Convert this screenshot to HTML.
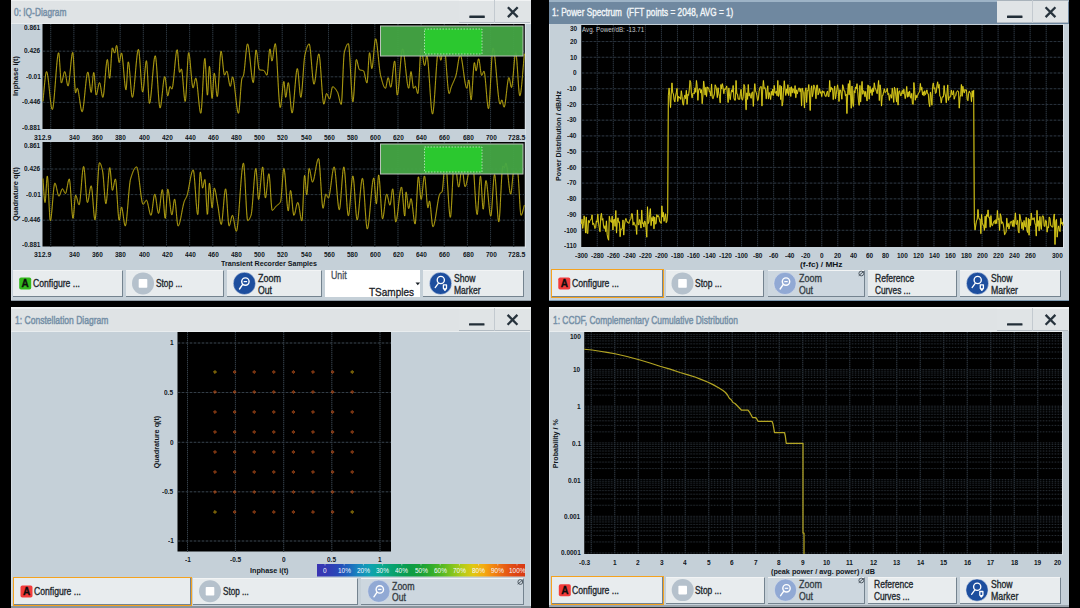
<!DOCTYPE html>
<html><head><meta charset="utf-8"><title>Baseband graphics</title>
<style>
html,body{margin:0;padding:0;background:#000;}
body{width:1080px;height:608px;position:relative;overflow:hidden;font-family:"Liberation Sans",sans-serif;}
.t{position:absolute;white-space:nowrap;transform-origin:0 50%;display:block;}
svg{position:absolute;left:0;top:0;overflow:visible;}
svg text{font-family:"Liberation Sans",sans-serif;}
</style></head><body>
<div style="position:absolute;left:11px;top:0px;width:520.3px;height:300.6px;background:#c5d0d8;border-left:1.6px solid #d6dee4;box-sizing:border-box;"></div>
<div style="position:absolute;left:11px;top:0px;width:520.3px;height:24px;background:#dfe3e5;border-top:1px solid #edf0f1;border-bottom:1.3px solid #e9edef;box-sizing:border-box;"></div>
<span class="t" style="left:13.50px;top:4.40px;line-height:16px;font-size:11.4px;color:#7690a7;transform:scaleX(0.7334);-webkit-text-stroke:0.5px #7690a7;">0: IQ-Diagram</span>
<div style="position:absolute;left:459.29999999999995px;top:0px;width:71.0px;height:23px;background:#e0e4e6;border-bottom:1px solid #b4bcc3;border-top:1px solid #f1f3f4;box-sizing:border-box;"></div>
<div style="position:absolute;left:494.29999999999995px;top:0px;width:1.0px;height:23px;background:#c3cad0;"></div>
<svg width="1080" height="608" viewBox="0 0 1080 608"><rect x="469.29999999999995" y="15.6" width="15.5" height="2.3" rx="0.5" fill="#222e38"/><path d="M507.9 7.2 L517.6999999999999 17.1 M517.6999999999999 7.2 L507.9 17.1" stroke="#27333d" stroke-width="2.3" fill="none"/></svg>
<div style="position:absolute;left:524.75px;top:24px;width:6.5499999999999545px;height:223.5px;background:#c5d0d8;border-left:1.4px solid #d9e1e7;box-sizing:border-box;"></div>
<svg width="1080" height="608" viewBox="0 0 1080 608"><rect x="42.5" y="24" width="482.25" height="105" fill="#000"/><path d="M50.72 24 V129 M73.87 24 V129 M97.02 24 V129 M120.17 24 V129 M143.32 24 V129 M166.47 24 V129 M189.62 24 V129 M212.77 24 V129 M235.92 24 V129 M259.07 24 V129 M282.22 24 V129 M305.37 24 V129 M328.52 24 V129 M351.67 24 V129 M374.82 24 V129 M397.97 24 V129 M421.12 24 V129 M444.27 24 V129 M467.42 24 V129 M490.57 24 V129 M513.72 24 V129 M43 51.20 H524.75 M43 76.80 H524.75 M43 102.40 H524.75 " stroke="#0f1317" stroke-width="1" fill="none"/><path d="M50.72 24 V129 M73.87 24 V129 M97.02 24 V129 M120.17 24 V129 M143.32 24 V129 M166.47 24 V129 M189.62 24 V129 M212.77 24 V129 M235.92 24 V129 M259.07 24 V129 M282.22 24 V129 M305.37 24 V129 M328.52 24 V129 M351.67 24 V129 M374.82 24 V129 M397.97 24 V129 M421.12 24 V129 M444.27 24 V129 M467.42 24 V129 M490.57 24 V129 M513.72 24 V129 " stroke="#2b353d" stroke-width="1" stroke-dasharray="1 1" fill="none"/><path d="M43 51.20 H524.75 M43 76.80 H524.75 M43 102.40 H524.75 " stroke="#2b353d" stroke-width="1" stroke-dasharray="2 2" fill="none"/><path d="M42.90 101.43 L43.20 98.64 L43.50 95.59 L43.80 92.39 L44.10 89.11 L44.40 85.87 L44.70 82.74 L45.00 79.82 L45.30 77.20 L45.60 74.98 L45.90 73.25 L46.20 72.10 L46.50 71.63 L46.80 71.85 L47.10 72.63 L47.40 73.90 L47.70 75.62 L48.00 77.69 L48.30 80.08 L48.60 82.70 L48.90 85.50 L49.20 88.41 L49.50 91.37 L49.80 94.31 L50.10 97.16 L50.40 99.87 L50.70 102.37 L51.00 104.59 L51.30 106.47 L51.60 107.95 L51.90 108.96 L52.20 109.43 L52.50 109.28 L52.80 108.43 L53.10 106.94 L53.40 104.89 L53.70 102.34 L54.00 99.37 L54.30 96.05 L54.60 92.45 L54.90 88.64 L55.20 84.70 L55.50 80.69 L55.80 76.69 L56.10 72.76 L56.40 68.99 L56.70 65.44 L57.00 62.18 L57.30 59.29 L57.60 56.83 L57.90 54.88 L58.20 53.51 L58.50 52.80 L58.80 52.97 L59.10 54.92 L59.40 58.34 L59.70 62.74 L60.00 67.65 L60.30 72.58 L60.60 77.04 L60.90 80.55 L61.20 82.62 L61.50 82.93 L61.80 82.46 L62.10 81.59 L62.40 80.40 L62.70 79.00 L63.00 77.49 L63.30 75.97 L63.60 74.53 L63.90 73.29 L64.20 72.32 L64.50 71.74 L64.80 71.66 L65.10 72.19 L65.40 73.25 L65.70 74.72 L66.00 76.47 L66.30 78.37 L66.60 80.30 L66.90 82.14 L67.20 83.75 L67.50 85.01 L67.80 85.80 L68.10 85.98 L68.40 85.42 L68.70 84.16 L69.00 82.31 L69.30 79.97 L69.60 77.26 L69.90 74.27 L70.20 71.12 L70.50 67.90 L70.80 64.73 L71.10 61.70 L71.40 58.93 L71.70 56.51 L72.00 54.56 L72.30 53.18 L72.60 52.47 L72.90 52.83 L73.20 55.34 L73.50 59.62 L73.80 65.12 L74.10 71.28 L74.40 77.56 L74.70 83.40 L75.00 88.26 L75.30 91.58 L75.60 92.81 L75.90 92.42 L76.20 91.47 L76.50 90.27 L76.80 89.14 L77.10 88.40 L77.40 88.32 L77.70 88.80 L78.00 89.73 L78.30 91.02 L78.60 92.63 L78.90 94.48 L79.20 96.51 L79.50 98.64 L79.80 100.82 L80.10 102.97 L80.40 105.03 L80.70 106.93 L81.00 108.60 L81.30 109.99 L81.60 111.01 L81.90 111.60 L82.20 111.70 L82.50 111.21 L82.80 110.15 L83.10 108.61 L83.40 106.63 L83.70 104.31 L84.00 101.69 L84.30 98.85 L84.60 95.86 L84.90 92.78 L85.20 89.68 L85.50 86.63 L85.80 83.70 L86.10 80.95 L86.40 78.45 L86.70 76.27 L87.00 74.47 L87.30 73.13 L87.60 72.31 L87.90 72.09 L88.20 72.67 L88.50 74.03 L88.80 76.01 L89.10 78.42 L89.40 81.07 L89.70 83.81 L90.00 86.44 L90.30 88.78 L90.60 90.67 L90.90 91.92 L91.20 92.36 L91.50 91.56 L91.80 89.52 L92.10 86.63 L92.40 83.26 L92.70 79.79 L93.00 76.61 L93.30 74.09 L93.60 72.61 L93.90 72.59 L94.20 74.33 L94.50 77.40 L94.80 81.30 L95.10 85.49 L95.40 89.47 L95.70 92.72 L96.00 94.71 L96.30 95.04 L96.60 94.55 L96.90 93.61 L97.20 92.33 L97.50 90.80 L97.80 89.16 L98.10 87.49 L98.40 85.91 L98.70 84.54 L99.00 83.47 L99.30 82.82 L99.60 82.70 L99.90 83.22 L100.20 84.28 L100.50 85.77 L100.80 87.54 L101.10 89.49 L101.40 91.46 L101.70 93.34 L102.00 95.00 L102.30 96.30 L102.60 97.13 L102.90 97.34 L103.20 96.69 L103.50 95.22 L103.80 93.03 L104.10 90.27 L104.40 87.07 L104.70 83.56 L105.00 79.87 L105.30 76.12 L105.60 72.46 L105.90 69.01 L106.20 65.90 L106.50 63.27 L106.80 61.24 L107.10 59.94 L107.40 59.52 L107.70 60.50 L108.00 62.92 L108.30 66.25 L108.60 69.97 L108.90 73.54 L109.20 76.45 L109.50 78.18 L109.80 78.18 L110.10 76.26 L110.40 72.83 L110.70 68.40 L111.00 63.44 L111.30 58.46 L111.60 53.94 L111.90 50.37 L112.20 48.24 L112.50 47.90 L112.80 48.32 L113.10 49.08 L113.40 50.04 L113.70 51.06 L114.00 51.98 L114.30 52.68 L114.60 53.00 L114.90 52.67 L115.20 51.56 L115.50 49.99 L115.80 48.27 L116.10 46.73 L116.40 45.70 L116.70 45.49 L117.00 46.46 L117.30 48.41 L117.60 51.01 L117.90 53.95 L118.20 56.89 L118.50 59.50 L118.80 61.48 L119.10 62.48 L119.40 62.31 L119.70 61.32 L120.00 59.77 L120.30 57.94 L120.60 56.08 L120.90 54.47 L121.20 53.36 L121.50 53.01 L121.80 53.59 L122.10 54.99 L122.40 57.07 L122.70 59.73 L123.00 62.82 L123.30 66.22 L123.60 69.80 L123.90 73.44 L124.20 77.01 L124.50 80.38 L124.80 83.42 L125.10 86.01 L125.40 88.02 L125.70 89.32 L126.00 89.79 L126.30 88.46 L126.60 84.98 L126.90 80.11 L127.20 74.62 L127.50 69.30 L127.80 64.91 L128.10 62.24 L128.40 61.89 L128.70 62.87 L129.00 64.77 L129.30 67.40 L129.60 70.61 L129.90 74.22 L130.20 78.06 L130.50 81.97 L130.80 85.78 L131.10 89.31 L131.40 92.40 L131.70 94.88 L132.00 96.58 L132.30 97.33 L132.60 97.13 L132.90 96.27 L133.20 94.83 L133.50 92.88 L133.80 90.49 L134.10 87.73 L134.40 84.67 L134.70 81.38 L135.00 77.92 L135.30 74.38 L135.60 70.82 L135.90 67.31 L136.20 63.92 L136.50 60.72 L136.80 57.77 L137.10 55.16 L137.40 52.95 L137.70 51.21 L138.00 50.01 L138.30 49.42 L138.60 49.62 L138.90 50.94 L139.20 53.24 L139.50 56.36 L139.80 60.10 L140.10 64.28 L140.40 68.72 L140.70 73.25 L141.00 77.67 L141.30 81.81 L141.60 85.48 L141.90 88.51 L142.20 90.71 L142.50 91.90 L142.80 91.91 L143.10 90.84 L143.40 88.86 L143.70 86.16 L144.00 82.95 L144.30 79.39 L144.60 75.68 L144.90 72.01 L145.20 68.56 L145.50 65.52 L145.80 63.07 L146.10 61.42 L146.40 60.73 L146.70 61.65 L147.00 64.63 L147.30 69.19 L147.60 74.83 L147.90 81.05 L148.20 87.34 L148.50 93.22 L148.80 98.18 L149.10 101.72 L149.40 103.35 L149.70 103.17 L150.00 102.23 L150.30 100.66 L150.60 98.54 L150.90 95.95 L151.20 92.98 L151.50 89.69 L151.80 86.17 L152.10 82.52 L152.40 78.79 L152.70 75.09 L153.00 71.48 L153.30 68.05 L153.60 64.88 L153.90 62.05 L154.20 59.65 L154.50 57.75 L154.80 56.43 L155.10 55.79 L155.40 55.96 L155.70 57.21 L156.00 59.42 L156.30 62.44 L156.60 66.12 L156.90 70.32 L157.20 74.88 L157.50 79.66 L157.80 84.50 L158.10 89.27 L158.40 93.80 L158.70 97.95 L159.00 101.58 L159.30 104.52 L159.60 106.64 L159.90 107.79 L160.20 107.86 L160.50 107.16 L160.80 105.84 L161.10 104.00 L161.40 101.73 L161.70 99.14 L162.00 96.31 L162.30 93.35 L162.60 90.35 L162.90 87.42 L163.20 84.65 L163.50 82.14 L163.80 79.98 L164.10 78.28 L164.40 77.13 L164.70 76.63 L165.00 76.97 L165.30 78.25 L165.60 80.26 L165.90 82.77 L166.20 85.56 L166.50 88.40 L166.80 91.07 L167.10 93.34 L167.40 94.99 L167.70 95.80 L168.00 95.60 L168.30 94.60 L168.60 93.07 L168.90 91.27 L169.20 89.44 L169.50 87.86 L169.80 86.78 L170.10 86.46 L170.40 86.70 L170.70 87.20 L171.00 87.82 L171.30 88.43 L171.60 88.87 L171.90 89.02 L172.20 88.59 L172.50 87.49 L172.80 85.82 L173.10 83.65 L173.40 81.08 L173.70 78.19 L174.00 75.06 L174.30 71.79 L174.60 68.45 L174.90 65.14 L175.20 61.93 L175.50 58.92 L175.80 56.19 L176.10 53.83 L176.40 51.92 L176.70 50.54 L177.00 49.79 L177.30 49.87 L177.60 51.59 L177.90 54.65 L178.20 58.53 L178.50 62.73 L178.80 66.71 L179.10 69.97 L179.40 71.98 L179.70 72.34 L180.00 71.95 L180.30 71.25 L180.60 70.43 L180.90 69.68 L181.20 69.17 L181.50 69.11 L181.80 70.03 L182.10 71.92 L182.40 74.58 L182.70 77.83 L183.00 81.45 L183.30 85.27 L183.60 89.09 L183.90 92.72 L184.20 95.95 L184.50 98.60 L184.80 100.48 L185.10 101.39 L185.40 100.93 L185.70 98.60 L186.00 94.75 L186.30 89.73 L186.60 83.92 L186.90 77.71 L187.20 71.45 L187.50 65.53 L187.80 60.33 L188.10 56.20 L188.40 53.54 L188.70 52.71 L189.00 53.27 L189.30 54.66 L189.60 56.76 L189.90 59.42 L190.20 62.52 L190.50 65.92 L190.80 69.48 L191.10 73.06 L191.40 76.55 L191.70 79.79 L192.00 82.66 L192.30 85.02 L192.60 86.74 L192.90 87.68 L193.20 87.74 L193.50 87.14 L193.80 86.06 L194.10 84.66 L194.40 83.09 L194.70 81.51 L195.00 80.08 L195.30 78.94 L195.60 78.26 L195.90 78.19 L196.20 78.82 L196.50 80.09 L196.80 81.90 L197.10 84.16 L197.40 86.78 L197.70 89.66 L198.00 92.73 L198.30 95.88 L198.60 99.03 L198.90 102.07 L199.20 104.93 L199.50 107.52 L199.80 109.73 L200.10 111.47 L200.40 112.67 L200.70 113.22 L201.00 112.78 L201.30 110.80 L201.60 107.50 L201.90 103.14 L202.20 97.98 L202.50 92.28 L202.80 86.30 L203.10 80.30 L203.40 74.54 L203.70 69.29 L204.00 64.79 L204.30 61.31 L204.60 59.12 L204.90 58.47 L205.20 60.16 L205.50 64.08 L205.80 69.53 L206.10 75.80 L206.40 82.19 L206.70 88.00 L207.00 92.53 L207.30 95.07 L207.60 94.83 L207.90 91.34 L208.20 85.70 L208.50 79.14 L208.80 72.90 L209.10 68.22 L209.40 66.33 L209.70 67.36 L210.00 70.23 L210.30 74.42 L210.60 79.41 L210.90 84.68 L211.20 89.74 L211.50 94.05 L211.80 97.11 L212.10 98.40 L212.40 97.29 L212.70 93.92 L213.00 89.14 L213.30 83.82 L213.60 78.81 L213.90 74.97 L214.20 73.18 L214.50 73.59 L214.80 75.18 L215.10 77.65 L215.40 80.72 L215.70 84.13 L216.00 87.60 L216.30 90.84 L216.60 93.60 L216.90 95.60 L217.20 96.55 L217.50 96.14 L217.80 94.23 L218.10 91.08 L218.40 86.97 L218.70 82.16 L219.00 76.92 L219.30 71.53 L219.60 66.26 L219.90 61.39 L220.20 57.17 L220.50 53.89 L220.80 51.81 L221.10 51.20 L221.40 51.83 L221.70 53.31 L222.00 55.47 L222.30 58.12 L222.60 61.08 L222.90 64.16 L223.20 67.18 L223.50 69.96 L223.80 72.31 L224.10 74.05 L224.40 74.99 L224.70 75.05 L225.00 74.69 L225.30 74.08 L225.60 73.34 L225.90 72.56 L226.20 71.87 L226.50 71.37 L226.80 71.17 L227.10 71.46 L227.40 72.32 L227.70 73.62 L228.00 75.25 L228.30 77.10 L228.60 79.04 L228.90 80.97 L229.20 82.76 L229.50 84.30 L229.80 85.48 L230.10 86.17 L230.40 86.24 L230.70 85.51 L231.00 84.14 L231.30 82.41 L231.60 80.56 L231.90 78.86 L232.20 77.57 L232.50 76.94 L232.80 77.09 L233.10 77.77 L233.40 78.90 L233.70 80.44 L234.00 82.33 L234.30 84.50 L234.60 86.91 L234.90 89.49 L235.20 92.19 L235.50 94.94 L235.80 97.70 L236.10 100.41 L236.40 103.01 L236.70 105.43 L237.00 107.63 L237.30 109.55 L237.60 111.13 L237.90 112.31 L238.20 113.03 L238.50 113.24 L238.80 112.44 L239.10 110.49 L239.40 107.64 L239.70 104.09 L240.00 100.09 L240.30 95.85 L240.60 91.60 L240.90 87.56 L241.20 83.97 L241.50 81.05 L241.80 79.03 L242.10 78.01 L242.40 77.38 L242.70 76.90 L243.00 76.43 L243.30 75.83 L243.60 74.92 L243.90 73.38 L244.20 71.25 L244.50 68.65 L244.80 65.72 L245.10 62.57 L245.40 59.31 L245.70 56.08 L246.00 52.99 L246.30 50.17 L246.60 47.73 L246.90 45.80 L247.20 44.49 L247.50 43.94 L247.80 44.14 L248.10 44.93 L248.40 46.22 L248.70 47.97 L249.00 50.09 L249.30 52.52 L249.60 55.20 L249.90 58.07 L250.20 61.04 L250.50 64.07 L250.80 67.08 L251.10 70.01 L251.40 72.79 L251.70 75.35 L252.00 77.63 L252.30 79.57 L252.60 81.09 L252.90 82.14 L253.20 82.64 L253.50 82.16 L253.80 79.76 L254.10 75.86 L254.40 70.97 L254.70 65.63 L255.00 60.36 L255.30 55.67 L255.60 52.10 L255.90 50.17 L256.20 50.14 L256.50 51.05 L256.80 52.63 L257.10 54.72 L257.40 57.15 L257.70 59.75 L258.00 62.35 L258.30 64.79 L258.60 66.91 L258.90 68.52 L259.20 69.48 L259.50 69.71 L259.80 69.81 L260.10 69.89 L260.40 69.96 L260.70 70.01 L261.00 70.06 L261.30 70.09 L261.60 70.13 L261.90 70.16 L262.20 70.19 L262.50 70.23 L262.80 70.28 L263.10 70.33 L263.40 70.41 L263.70 70.50 L264.00 70.62 L264.30 70.90 L264.60 71.34 L264.90 71.90 L265.20 72.53 L265.50 73.17 L265.80 73.79 L266.10 74.34 L266.40 74.77 L266.70 75.04 L267.00 75.05 L267.30 73.98 L267.60 71.74 L267.90 68.66 L268.20 65.03 L268.50 61.16 L268.80 57.36 L269.10 53.94 L269.40 51.18 L269.70 49.42 L270.00 48.94 L270.30 49.94 L270.60 52.02 L270.90 54.68 L271.20 57.39 L271.50 59.63 L271.80 60.91 L272.10 60.87 L272.40 60.03 L272.70 58.59 L273.00 56.69 L273.30 54.51 L273.60 52.17 L273.90 49.85 L274.20 47.69 L274.50 45.85 L274.80 44.47 L275.10 43.72 L275.40 43.80 L275.70 45.11 L276.00 47.55 L276.30 50.96 L276.60 55.16 L276.90 60.00 L277.20 65.31 L277.50 70.91 L277.80 76.65 L278.10 82.36 L278.40 87.87 L278.70 93.02 L279.00 97.63 L279.30 101.55 L279.60 104.61 L279.90 106.64 L280.20 107.48 L280.50 107.11 L280.80 105.83 L281.10 103.81 L281.40 101.23 L281.70 98.26 L282.00 95.09 L282.30 91.88 L282.60 88.81 L282.90 86.06 L283.20 83.81 L283.50 82.23 L283.80 81.49 L284.10 82.14 L284.40 84.70 L284.70 88.35 L285.00 92.23 L285.30 95.48 L285.60 97.24 L285.90 97.07 L286.20 95.86 L286.50 93.92 L286.80 91.54 L287.10 88.99 L287.40 86.55 L287.70 84.50 L288.00 83.12 L288.30 82.68 L288.60 83.32 L288.90 84.91 L289.20 87.26 L289.50 90.18 L289.80 93.51 L290.10 97.06 L290.40 100.64 L290.70 104.09 L291.00 107.20 L291.30 109.81 L291.60 111.74 L291.90 112.80 L292.20 112.84 L292.50 112.05 L292.80 110.55 L293.10 108.44 L293.40 105.81 L293.70 102.76 L294.00 99.39 L294.30 95.79 L294.60 92.06 L294.90 88.30 L295.20 84.60 L295.50 81.06 L295.80 77.78 L296.10 74.85 L296.40 72.37 L296.70 70.44 L297.00 69.16 L297.30 68.61 L297.60 69.01 L297.90 70.51 L298.20 72.89 L298.50 75.92 L298.80 79.39 L299.10 83.07 L299.40 86.75 L299.70 90.20 L300.00 93.20 L300.30 95.54 L300.60 96.98 L300.90 97.32 L301.20 96.51 L301.50 94.71 L301.80 92.08 L302.10 88.79 L302.40 84.98 L302.70 80.83 L303.00 76.49 L303.30 72.13 L303.60 67.90 L303.90 63.97 L304.20 60.49 L304.50 57.63 L304.80 55.55 L305.10 54.22 L305.40 53.00 L305.70 51.81 L306.00 50.68 L306.30 49.59 L306.60 48.58 L306.90 47.64 L307.20 46.78 L307.50 46.02 L307.80 45.36 L308.10 44.82 L308.40 44.39 L308.70 44.10 L309.00 43.95 L309.30 44.03 L309.60 44.87 L309.90 46.47 L310.20 48.72 L310.50 51.49 L310.80 54.68 L311.10 58.16 L311.40 61.83 L311.70 65.56 L312.00 69.25 L312.30 72.78 L312.60 76.03 L312.90 78.89 L313.20 81.25 L313.50 82.98 L313.80 83.98 L314.10 84.15 L314.40 83.60 L314.70 82.47 L315.00 80.85 L315.30 78.82 L315.60 76.46 L315.90 73.87 L316.20 71.13 L316.50 68.32 L316.80 65.54 L317.10 62.86 L317.40 60.38 L317.70 58.18 L318.00 56.35 L318.30 54.97 L318.60 54.14 L318.90 53.93 L319.20 54.64 L319.50 56.29 L319.80 58.73 L320.10 61.85 L320.40 65.51 L320.70 69.57 L321.00 73.92 L321.30 78.42 L321.60 82.93 L321.90 87.33 L322.20 91.49 L322.50 95.27 L322.80 98.55 L323.10 101.19 L323.40 103.07 L323.70 104.05 L324.00 104.06 L324.30 103.36 L324.60 102.14 L324.90 100.59 L325.20 98.87 L325.50 97.15 L325.80 95.60 L326.10 94.38 L326.40 93.68 L326.70 93.60 L327.00 93.87 L327.30 94.36 L327.60 95.01 L327.90 95.76 L328.20 96.54 L328.50 97.30 L328.80 97.97 L329.10 98.49 L329.40 98.81 L329.70 98.82 L330.00 98.26 L330.30 97.18 L330.60 95.72 L330.90 94.03 L331.20 92.24 L331.50 90.49 L331.80 88.93 L332.10 87.70 L332.40 86.94 L332.70 86.76 L333.00 86.81 L333.30 86.91 L333.60 87.06 L333.90 87.26 L334.20 87.50 L334.50 87.79 L334.80 88.11 L335.10 88.47 L335.40 88.86 L335.70 89.27 L336.00 89.71 L336.30 90.16 L336.60 90.64 L336.90 91.12 L337.20 91.62 L337.50 92.12 L337.80 92.81 L338.10 93.74 L338.40 94.86 L338.70 96.12 L339.00 97.45 L339.30 98.82 L339.60 100.15 L339.90 101.40 L340.20 102.50 L340.50 103.41 L340.80 104.07 L341.10 104.42 L341.40 104.10 L341.70 101.54 L342.00 96.98 L342.30 90.95 L342.60 83.99 L342.90 76.63 L343.20 69.40 L343.50 62.83 L343.80 57.45 L344.10 53.81 L344.40 52.18 L344.70 51.02 L345.00 49.93 L345.30 48.91 L345.60 47.97 L345.90 47.12 L346.20 46.35 L346.50 45.66 L346.80 45.07 L347.10 44.58 L347.40 44.18 L347.70 43.89 L348.00 43.70 L348.30 43.62 L348.60 44.10 L348.90 45.91 L349.20 48.89 L349.50 52.82 L349.80 57.52 L350.10 62.77 L350.40 68.38 L350.70 74.14 L351.00 79.85 L351.30 85.31 L351.60 90.32 L351.90 94.68 L352.20 98.18 L352.50 100.62 L352.80 101.81 L353.10 101.48 L353.40 99.51 L353.70 96.19 L354.00 91.85 L354.30 86.82 L354.60 81.42 L354.90 75.98 L355.20 70.82 L355.50 66.27 L355.80 62.65 L356.10 60.29 L356.40 59.52 L356.70 59.81 L357.00 60.56 L357.30 61.64 L357.60 62.96 L357.90 64.40 L358.20 65.86 L358.50 67.22 L358.80 68.37 L359.10 69.22 L359.40 69.65 L359.70 69.81 L360.00 69.93 L360.30 70.03 L360.60 70.11 L360.90 70.17 L361.20 70.22 L361.50 70.27 L361.80 70.32 L362.10 70.38 L362.40 70.45 L362.70 70.53 L363.00 70.63 L363.30 70.76 L363.60 70.95 L363.90 71.50 L364.20 72.41 L364.50 73.60 L364.80 74.99 L365.10 76.48 L365.40 78.00 L365.70 79.46 L366.00 80.77 L366.30 81.84 L366.60 82.60 L366.90 82.96 L367.20 82.32 L367.50 79.70 L367.80 75.63 L368.10 70.67 L368.40 65.40 L368.70 60.40 L369.00 56.23 L369.30 53.49 L369.60 52.73 L369.90 53.73 L370.20 55.88 L370.50 58.75 L370.80 61.87 L371.10 64.83 L371.40 67.18 L371.70 68.47 L372.00 68.40 L372.30 67.27 L372.60 65.30 L372.90 62.68 L373.20 59.57 L373.50 56.16 L373.80 52.62 L374.10 49.14 L374.40 45.89 L374.70 43.05 L375.00 40.80 L375.30 39.32 L375.60 38.78 L375.90 39.09 L376.20 39.98 L376.50 41.39 L376.80 43.24 L377.10 45.46 L377.40 47.99 L377.70 50.75 L378.00 53.67 L378.30 56.69 L378.60 59.73 L378.90 62.72 L379.20 65.60 L379.50 68.29 L379.80 70.72 L380.10 72.82 L380.40 74.53 L380.70 75.81 L381.00 76.98 L381.30 78.14 L381.60 79.29 L381.90 80.41 L382.20 81.49 L382.50 82.53 L382.80 83.52 L383.10 84.44 L383.40 85.28 L383.70 86.04 L384.00 86.71 L384.30 87.27 L384.60 87.71 L384.90 88.04 L385.20 88.22 L385.50 88.26 L385.80 87.77 L386.10 86.71 L386.40 85.25 L386.70 83.57 L387.00 81.83 L387.30 80.20 L387.60 78.85 L387.90 77.96 L388.20 77.68 L388.50 78.12 L388.80 79.13 L389.10 80.54 L389.40 82.16 L389.70 83.81 L390.00 85.31 L390.30 86.48 L390.60 87.13 L390.90 87.08 L391.20 86.21 L391.50 84.64 L391.80 82.52 L392.10 79.97 L392.40 77.14 L392.70 74.17 L393.00 71.20 L393.30 68.36 L393.60 65.80 L393.90 63.66 L394.20 62.07 L394.50 61.17 L394.80 61.27 L395.10 63.53 L395.40 67.65 L395.70 72.98 L396.00 78.87 L396.30 84.66 L396.60 89.73 L396.90 93.40 L397.20 95.05 L397.50 94.77 L397.80 93.67 L398.10 91.87 L398.40 89.46 L398.70 86.55 L399.00 83.25 L399.30 79.64 L399.60 75.83 L399.90 71.93 L400.20 68.02 L400.50 64.22 L400.80 60.62 L401.10 57.33 L401.40 54.44 L401.70 52.05 L402.00 50.28 L402.30 49.20 L402.60 48.93 L402.90 49.30 L403.20 50.16 L403.50 51.46 L403.80 53.14 L404.10 55.15 L404.40 57.44 L404.70 59.95 L405.00 62.63 L405.30 65.42 L405.60 68.27 L405.90 71.13 L406.20 73.94 L406.50 76.65 L406.80 79.20 L407.10 81.55 L407.40 83.63 L407.70 85.39 L408.00 86.78 L408.30 87.74 L408.60 88.22 L408.90 87.99 L409.20 86.39 L409.50 83.77 L409.80 80.60 L410.10 77.34 L410.40 74.45 L410.70 72.39 L411.00 71.62 L411.30 72.27 L411.60 73.95 L411.90 76.36 L412.20 79.16 L412.50 82.05 L412.80 84.71 L413.10 86.82 L413.40 88.07 L413.70 88.24 L414.00 87.99 L414.30 87.57 L414.60 87.09 L414.90 86.65 L415.20 86.36 L415.50 86.35 L415.80 86.87 L416.10 87.83 L416.40 89.07 L416.70 90.41 L417.00 91.69 L417.30 92.75 L417.60 93.42 L417.90 93.46 L418.20 91.84 L418.50 88.55 L418.80 84.00 L419.10 78.57 L419.40 72.66 L419.70 66.66 L420.00 60.95 L420.30 55.94 L420.60 52.01 L420.90 49.56 L421.20 48.94 L421.50 49.43 L421.80 50.51 L422.10 52.05 L422.40 53.91 L422.70 55.99 L423.00 58.13 L423.30 60.23 L423.60 62.14 L423.90 63.74 L424.20 64.91 L424.50 65.51 L424.80 65.39 L425.10 64.42 L425.40 62.86 L425.70 60.99 L426.00 59.06 L426.30 57.36 L426.60 56.16 L426.90 55.73 L427.20 56.26 L427.50 57.67 L427.80 59.87 L428.10 62.75 L428.40 66.19 L428.70 70.10 L429.00 74.36 L429.30 78.86 L429.60 83.51 L429.90 88.18 L430.20 92.78 L430.50 97.20 L430.80 101.32 L431.10 105.05 L431.40 108.27 L431.70 110.87 L432.00 112.76 L432.30 113.81 L432.60 113.94 L432.90 113.14 L433.20 111.54 L433.50 109.20 L433.80 106.24 L434.10 102.74 L434.40 98.79 L434.70 94.50 L435.00 89.95 L435.30 85.25 L435.60 80.47 L435.90 75.72 L436.20 71.10 L436.50 66.68 L436.80 62.58 L437.10 58.88 L437.40 55.67 L437.70 53.06 L438.00 51.13 L438.30 49.97 L438.60 49.70 L438.90 50.39 L439.20 51.83 L439.50 53.75 L439.80 55.84 L440.10 57.80 L440.40 59.35 L440.70 60.20 L441.00 60.09 L441.30 59.11 L441.60 57.47 L441.90 55.36 L442.20 52.98 L442.50 50.51 L442.80 48.16 L443.10 46.11 L443.40 44.57 L443.70 43.72 L444.00 43.76 L444.30 44.69 L444.60 46.42 L444.90 48.83 L445.20 51.82 L445.50 55.28 L445.80 59.09 L446.10 63.16 L446.40 67.36 L446.70 71.60 L447.00 75.76 L447.30 79.73 L447.60 83.41 L447.90 86.68 L448.20 89.44 L448.50 91.58 L448.80 92.99 L449.10 93.56 L449.40 93.36 L449.70 92.68 L450.00 91.69 L450.30 90.51 L450.60 89.28 L450.90 88.15 L451.20 87.25 L451.50 86.45 L451.80 85.69 L452.10 84.97 L452.40 84.27 L452.70 83.60 L453.00 82.93 L453.30 82.27 L453.60 81.61 L453.90 80.93 L454.20 80.24 L454.50 79.51 L454.80 78.76 L455.10 77.96 L455.40 77.11 L455.70 76.20 L456.00 75.23 L456.30 74.02 L456.60 72.55 L456.90 70.87 L457.20 69.04 L457.50 67.12 L457.80 65.16 L458.10 63.22 L458.40 61.35 L458.70 59.62 L459.00 58.08 L459.30 56.79 L459.60 55.80 L459.90 55.18 L460.20 54.97 L460.50 55.19 L460.80 55.77 L461.10 56.69 L461.40 57.89 L461.70 59.36 L462.00 61.05 L462.30 62.92 L462.60 64.93 L462.90 67.06 L463.20 69.27 L463.50 71.51 L463.80 73.76 L464.10 75.97 L464.40 78.11 L464.70 80.14 L465.00 82.02 L465.30 83.73 L465.60 85.22 L465.90 86.45 L466.20 87.40 L466.50 88.01 L466.80 88.27 L467.10 87.89 L467.40 86.66 L467.70 84.92 L468.00 83.03 L468.30 81.35 L468.60 80.22 L468.90 80.03 L469.20 81.50 L469.50 84.34 L469.80 88.00 L470.10 91.94 L470.40 95.59 L470.70 98.42 L471.00 99.85 L471.30 99.47 L471.60 97.50 L471.90 94.27 L472.20 90.12 L472.50 85.37 L472.80 80.35 L473.10 75.38 L473.40 70.81 L473.70 66.94 L474.00 64.12 L474.30 62.67 L474.60 62.83 L474.90 64.27 L475.20 66.37 L475.50 68.56 L475.80 70.25 L476.10 70.86 L476.40 70.34 L476.70 69.08 L477.00 67.31 L477.30 65.26 L477.60 63.16 L477.90 61.25 L478.20 59.74 L478.50 58.88 L478.80 58.88 L479.10 59.75 L479.40 61.32 L479.70 63.38 L480.00 65.74 L480.30 68.20 L480.60 70.58 L480.90 72.68 L481.20 74.30 L481.50 75.24 L481.80 75.37 L482.10 75.02 L482.40 74.39 L482.70 73.60 L483.00 72.77 L483.30 72.01 L483.60 71.44 L483.90 71.17 L484.20 71.50 L484.50 72.70 L484.80 74.64 L485.10 77.19 L485.40 80.23 L485.70 83.63 L486.00 87.24 L486.30 90.95 L486.60 94.63 L486.90 98.14 L487.20 101.35 L487.50 104.14 L487.80 106.38 L488.10 107.93 L488.40 108.66 L488.70 108.32 L489.00 106.57 L489.30 103.59 L489.60 99.59 L489.90 94.79 L490.20 89.38 L490.50 83.58 L490.80 77.61 L491.10 71.66 L491.40 65.95 L491.70 60.68 L492.00 56.08 L492.30 52.34 L492.60 49.68 L492.90 48.31 L493.20 48.26 L493.50 48.87 L493.80 49.99 L494.10 51.59 L494.40 53.60 L494.70 55.98 L495.00 58.68 L495.30 61.64 L495.60 64.82 L495.90 68.17 L496.20 71.63 L496.50 75.15 L496.80 78.69 L497.10 82.19 L497.40 85.61 L497.70 88.89 L498.00 91.98 L498.30 94.84 L498.60 97.41 L498.90 99.63 L499.20 101.47 L499.50 102.88 L499.80 103.79 L500.10 104.16 L500.40 103.89 L500.70 103.06 L501.00 101.95 L501.30 100.87 L501.60 100.11 L501.90 99.96 L502.20 100.50 L502.50 101.54 L502.80 102.88 L503.10 104.31 L503.40 105.63 L503.70 106.65 L504.00 107.17 L504.30 107.01 L504.60 106.24 L504.90 104.93 L505.20 103.17 L505.50 101.05 L505.80 98.65 L506.10 96.05 L506.40 93.34 L506.70 90.61 L507.00 87.92 L507.30 85.38 L507.60 83.07 L507.90 81.06 L508.20 79.44 L508.50 78.31 L508.80 77.73 L509.10 77.81 L509.40 78.57 L509.70 79.84 L510.00 81.42 L510.30 83.12 L510.60 84.78 L510.90 86.18 L511.20 87.16 L511.50 87.51 L511.80 87.00 L512.10 85.58 L512.40 83.42 L512.70 80.66 L513.00 77.45 L513.30 73.94 L513.60 70.27 L513.90 66.60 L514.20 63.06 L514.50 59.82 L514.80 57.01 L515.10 54.80 L515.40 53.31 L515.70 52.71 L516.00 53.24 L516.30 54.97 L516.60 57.71 L516.90 61.26 L517.20 65.40 L517.50 69.94 L517.80 74.66 L518.10 79.37 L518.40 83.85 L518.70 87.91 L519.00 91.34 L519.30 93.93 L519.60 95.48 L519.90 95.81 L520.20 95.29 L520.50 94.15 L520.80 92.46 L521.10 90.28 L521.40 87.69 L521.70 84.75 L522.00 81.53 L522.30 78.09 L522.60 74.51 L522.90 70.85 L523.20 67.18 L523.50 63.57 L523.80 60.08 L524.10 56.78 L524.40 53.74" stroke="#4c4200" stroke-width="1.3" fill="none" stroke-linejoin="round" stroke-opacity="0.6"/><path d="M42.90 101.43 L43.20 98.64 L43.50 95.59 L43.80 92.39 L44.10 89.11 L44.40 85.87 L44.70 82.74 L45.00 79.82 L45.30 77.20 L45.60 74.98 L45.90 73.25 L46.20 72.10 L46.50 71.63 L46.80 71.85 L47.10 72.63 L47.40 73.90 L47.70 75.62 L48.00 77.69 L48.30 80.08 L48.60 82.70 L48.90 85.50 L49.20 88.41 L49.50 91.37 L49.80 94.31 L50.10 97.16 L50.40 99.87 L50.70 102.37 L51.00 104.59 L51.30 106.47 L51.60 107.95 L51.90 108.96 L52.20 109.43 L52.50 109.28 L52.80 108.43 L53.10 106.94 L53.40 104.89 L53.70 102.34 L54.00 99.37 L54.30 96.05 L54.60 92.45 L54.90 88.64 L55.20 84.70 L55.50 80.69 L55.80 76.69 L56.10 72.76 L56.40 68.99 L56.70 65.44 L57.00 62.18 L57.30 59.29 L57.60 56.83 L57.90 54.88 L58.20 53.51 L58.50 52.80 L58.80 52.97 L59.10 54.92 L59.40 58.34 L59.70 62.74 L60.00 67.65 L60.30 72.58 L60.60 77.04 L60.90 80.55 L61.20 82.62 L61.50 82.93 L61.80 82.46 L62.10 81.59 L62.40 80.40 L62.70 79.00 L63.00 77.49 L63.30 75.97 L63.60 74.53 L63.90 73.29 L64.20 72.32 L64.50 71.74 L64.80 71.66 L65.10 72.19 L65.40 73.25 L65.70 74.72 L66.00 76.47 L66.30 78.37 L66.60 80.30 L66.90 82.14 L67.20 83.75 L67.50 85.01 L67.80 85.80 L68.10 85.98 L68.40 85.42 L68.70 84.16 L69.00 82.31 L69.30 79.97 L69.60 77.26 L69.90 74.27 L70.20 71.12 L70.50 67.90 L70.80 64.73 L71.10 61.70 L71.40 58.93 L71.70 56.51 L72.00 54.56 L72.30 53.18 L72.60 52.47 L72.90 52.83 L73.20 55.34 L73.50 59.62 L73.80 65.12 L74.10 71.28 L74.40 77.56 L74.70 83.40 L75.00 88.26 L75.30 91.58 L75.60 92.81 L75.90 92.42 L76.20 91.47 L76.50 90.27 L76.80 89.14 L77.10 88.40 L77.40 88.32 L77.70 88.80 L78.00 89.73 L78.30 91.02 L78.60 92.63 L78.90 94.48 L79.20 96.51 L79.50 98.64 L79.80 100.82 L80.10 102.97 L80.40 105.03 L80.70 106.93 L81.00 108.60 L81.30 109.99 L81.60 111.01 L81.90 111.60 L82.20 111.70 L82.50 111.21 L82.80 110.15 L83.10 108.61 L83.40 106.63 L83.70 104.31 L84.00 101.69 L84.30 98.85 L84.60 95.86 L84.90 92.78 L85.20 89.68 L85.50 86.63 L85.80 83.70 L86.10 80.95 L86.40 78.45 L86.70 76.27 L87.00 74.47 L87.30 73.13 L87.60 72.31 L87.90 72.09 L88.20 72.67 L88.50 74.03 L88.80 76.01 L89.10 78.42 L89.40 81.07 L89.70 83.81 L90.00 86.44 L90.30 88.78 L90.60 90.67 L90.90 91.92 L91.20 92.36 L91.50 91.56 L91.80 89.52 L92.10 86.63 L92.40 83.26 L92.70 79.79 L93.00 76.61 L93.30 74.09 L93.60 72.61 L93.90 72.59 L94.20 74.33 L94.50 77.40 L94.80 81.30 L95.10 85.49 L95.40 89.47 L95.70 92.72 L96.00 94.71 L96.30 95.04 L96.60 94.55 L96.90 93.61 L97.20 92.33 L97.50 90.80 L97.80 89.16 L98.10 87.49 L98.40 85.91 L98.70 84.54 L99.00 83.47 L99.30 82.82 L99.60 82.70 L99.90 83.22 L100.20 84.28 L100.50 85.77 L100.80 87.54 L101.10 89.49 L101.40 91.46 L101.70 93.34 L102.00 95.00 L102.30 96.30 L102.60 97.13 L102.90 97.34 L103.20 96.69 L103.50 95.22 L103.80 93.03 L104.10 90.27 L104.40 87.07 L104.70 83.56 L105.00 79.87 L105.30 76.12 L105.60 72.46 L105.90 69.01 L106.20 65.90 L106.50 63.27 L106.80 61.24 L107.10 59.94 L107.40 59.52 L107.70 60.50 L108.00 62.92 L108.30 66.25 L108.60 69.97 L108.90 73.54 L109.20 76.45 L109.50 78.18 L109.80 78.18 L110.10 76.26 L110.40 72.83 L110.70 68.40 L111.00 63.44 L111.30 58.46 L111.60 53.94 L111.90 50.37 L112.20 48.24 L112.50 47.90 L112.80 48.32 L113.10 49.08 L113.40 50.04 L113.70 51.06 L114.00 51.98 L114.30 52.68 L114.60 53.00 L114.90 52.67 L115.20 51.56 L115.50 49.99 L115.80 48.27 L116.10 46.73 L116.40 45.70 L116.70 45.49 L117.00 46.46 L117.30 48.41 L117.60 51.01 L117.90 53.95 L118.20 56.89 L118.50 59.50 L118.80 61.48 L119.10 62.48 L119.40 62.31 L119.70 61.32 L120.00 59.77 L120.30 57.94 L120.60 56.08 L120.90 54.47 L121.20 53.36 L121.50 53.01 L121.80 53.59 L122.10 54.99 L122.40 57.07 L122.70 59.73 L123.00 62.82 L123.30 66.22 L123.60 69.80 L123.90 73.44 L124.20 77.01 L124.50 80.38 L124.80 83.42 L125.10 86.01 L125.40 88.02 L125.70 89.32 L126.00 89.79 L126.30 88.46 L126.60 84.98 L126.90 80.11 L127.20 74.62 L127.50 69.30 L127.80 64.91 L128.10 62.24 L128.40 61.89 L128.70 62.87 L129.00 64.77 L129.30 67.40 L129.60 70.61 L129.90 74.22 L130.20 78.06 L130.50 81.97 L130.80 85.78 L131.10 89.31 L131.40 92.40 L131.70 94.88 L132.00 96.58 L132.30 97.33 L132.60 97.13 L132.90 96.27 L133.20 94.83 L133.50 92.88 L133.80 90.49 L134.10 87.73 L134.40 84.67 L134.70 81.38 L135.00 77.92 L135.30 74.38 L135.60 70.82 L135.90 67.31 L136.20 63.92 L136.50 60.72 L136.80 57.77 L137.10 55.16 L137.40 52.95 L137.70 51.21 L138.00 50.01 L138.30 49.42 L138.60 49.62 L138.90 50.94 L139.20 53.24 L139.50 56.36 L139.80 60.10 L140.10 64.28 L140.40 68.72 L140.70 73.25 L141.00 77.67 L141.30 81.81 L141.60 85.48 L141.90 88.51 L142.20 90.71 L142.50 91.90 L142.80 91.91 L143.10 90.84 L143.40 88.86 L143.70 86.16 L144.00 82.95 L144.30 79.39 L144.60 75.68 L144.90 72.01 L145.20 68.56 L145.50 65.52 L145.80 63.07 L146.10 61.42 L146.40 60.73 L146.70 61.65 L147.00 64.63 L147.30 69.19 L147.60 74.83 L147.90 81.05 L148.20 87.34 L148.50 93.22 L148.80 98.18 L149.10 101.72 L149.40 103.35 L149.70 103.17 L150.00 102.23 L150.30 100.66 L150.60 98.54 L150.90 95.95 L151.20 92.98 L151.50 89.69 L151.80 86.17 L152.10 82.52 L152.40 78.79 L152.70 75.09 L153.00 71.48 L153.30 68.05 L153.60 64.88 L153.90 62.05 L154.20 59.65 L154.50 57.75 L154.80 56.43 L155.10 55.79 L155.40 55.96 L155.70 57.21 L156.00 59.42 L156.30 62.44 L156.60 66.12 L156.90 70.32 L157.20 74.88 L157.50 79.66 L157.80 84.50 L158.10 89.27 L158.40 93.80 L158.70 97.95 L159.00 101.58 L159.30 104.52 L159.60 106.64 L159.90 107.79 L160.20 107.86 L160.50 107.16 L160.80 105.84 L161.10 104.00 L161.40 101.73 L161.70 99.14 L162.00 96.31 L162.30 93.35 L162.60 90.35 L162.90 87.42 L163.20 84.65 L163.50 82.14 L163.80 79.98 L164.10 78.28 L164.40 77.13 L164.70 76.63 L165.00 76.97 L165.30 78.25 L165.60 80.26 L165.90 82.77 L166.20 85.56 L166.50 88.40 L166.80 91.07 L167.10 93.34 L167.40 94.99 L167.70 95.80 L168.00 95.60 L168.30 94.60 L168.60 93.07 L168.90 91.27 L169.20 89.44 L169.50 87.86 L169.80 86.78 L170.10 86.46 L170.40 86.70 L170.70 87.20 L171.00 87.82 L171.30 88.43 L171.60 88.87 L171.90 89.02 L172.20 88.59 L172.50 87.49 L172.80 85.82 L173.10 83.65 L173.40 81.08 L173.70 78.19 L174.00 75.06 L174.30 71.79 L174.60 68.45 L174.90 65.14 L175.20 61.93 L175.50 58.92 L175.80 56.19 L176.10 53.83 L176.40 51.92 L176.70 50.54 L177.00 49.79 L177.30 49.87 L177.60 51.59 L177.90 54.65 L178.20 58.53 L178.50 62.73 L178.80 66.71 L179.10 69.97 L179.40 71.98 L179.70 72.34 L180.00 71.95 L180.30 71.25 L180.60 70.43 L180.90 69.68 L181.20 69.17 L181.50 69.11 L181.80 70.03 L182.10 71.92 L182.40 74.58 L182.70 77.83 L183.00 81.45 L183.30 85.27 L183.60 89.09 L183.90 92.72 L184.20 95.95 L184.50 98.60 L184.80 100.48 L185.10 101.39 L185.40 100.93 L185.70 98.60 L186.00 94.75 L186.30 89.73 L186.60 83.92 L186.90 77.71 L187.20 71.45 L187.50 65.53 L187.80 60.33 L188.10 56.20 L188.40 53.54 L188.70 52.71 L189.00 53.27 L189.30 54.66 L189.60 56.76 L189.90 59.42 L190.20 62.52 L190.50 65.92 L190.80 69.48 L191.10 73.06 L191.40 76.55 L191.70 79.79 L192.00 82.66 L192.30 85.02 L192.60 86.74 L192.90 87.68 L193.20 87.74 L193.50 87.14 L193.80 86.06 L194.10 84.66 L194.40 83.09 L194.70 81.51 L195.00 80.08 L195.30 78.94 L195.60 78.26 L195.90 78.19 L196.20 78.82 L196.50 80.09 L196.80 81.90 L197.10 84.16 L197.40 86.78 L197.70 89.66 L198.00 92.73 L198.30 95.88 L198.60 99.03 L198.90 102.07 L199.20 104.93 L199.50 107.52 L199.80 109.73 L200.10 111.47 L200.40 112.67 L200.70 113.22 L201.00 112.78 L201.30 110.80 L201.60 107.50 L201.90 103.14 L202.20 97.98 L202.50 92.28 L202.80 86.30 L203.10 80.30 L203.40 74.54 L203.70 69.29 L204.00 64.79 L204.30 61.31 L204.60 59.12 L204.90 58.47 L205.20 60.16 L205.50 64.08 L205.80 69.53 L206.10 75.80 L206.40 82.19 L206.70 88.00 L207.00 92.53 L207.30 95.07 L207.60 94.83 L207.90 91.34 L208.20 85.70 L208.50 79.14 L208.80 72.90 L209.10 68.22 L209.40 66.33 L209.70 67.36 L210.00 70.23 L210.30 74.42 L210.60 79.41 L210.90 84.68 L211.20 89.74 L211.50 94.05 L211.80 97.11 L212.10 98.40 L212.40 97.29 L212.70 93.92 L213.00 89.14 L213.30 83.82 L213.60 78.81 L213.90 74.97 L214.20 73.18 L214.50 73.59 L214.80 75.18 L215.10 77.65 L215.40 80.72 L215.70 84.13 L216.00 87.60 L216.30 90.84 L216.60 93.60 L216.90 95.60 L217.20 96.55 L217.50 96.14 L217.80 94.23 L218.10 91.08 L218.40 86.97 L218.70 82.16 L219.00 76.92 L219.30 71.53 L219.60 66.26 L219.90 61.39 L220.20 57.17 L220.50 53.89 L220.80 51.81 L221.10 51.20 L221.40 51.83 L221.70 53.31 L222.00 55.47 L222.30 58.12 L222.60 61.08 L222.90 64.16 L223.20 67.18 L223.50 69.96 L223.80 72.31 L224.10 74.05 L224.40 74.99 L224.70 75.05 L225.00 74.69 L225.30 74.08 L225.60 73.34 L225.90 72.56 L226.20 71.87 L226.50 71.37 L226.80 71.17 L227.10 71.46 L227.40 72.32 L227.70 73.62 L228.00 75.25 L228.30 77.10 L228.60 79.04 L228.90 80.97 L229.20 82.76 L229.50 84.30 L229.80 85.48 L230.10 86.17 L230.40 86.24 L230.70 85.51 L231.00 84.14 L231.30 82.41 L231.60 80.56 L231.90 78.86 L232.20 77.57 L232.50 76.94 L232.80 77.09 L233.10 77.77 L233.40 78.90 L233.70 80.44 L234.00 82.33 L234.30 84.50 L234.60 86.91 L234.90 89.49 L235.20 92.19 L235.50 94.94 L235.80 97.70 L236.10 100.41 L236.40 103.01 L236.70 105.43 L237.00 107.63 L237.30 109.55 L237.60 111.13 L237.90 112.31 L238.20 113.03 L238.50 113.24 L238.80 112.44 L239.10 110.49 L239.40 107.64 L239.70 104.09 L240.00 100.09 L240.30 95.85 L240.60 91.60 L240.90 87.56 L241.20 83.97 L241.50 81.05 L241.80 79.03 L242.10 78.01 L242.40 77.38 L242.70 76.90 L243.00 76.43 L243.30 75.83 L243.60 74.92 L243.90 73.38 L244.20 71.25 L244.50 68.65 L244.80 65.72 L245.10 62.57 L245.40 59.31 L245.70 56.08 L246.00 52.99 L246.30 50.17 L246.60 47.73 L246.90 45.80 L247.20 44.49 L247.50 43.94 L247.80 44.14 L248.10 44.93 L248.40 46.22 L248.70 47.97 L249.00 50.09 L249.30 52.52 L249.60 55.20 L249.90 58.07 L250.20 61.04 L250.50 64.07 L250.80 67.08 L251.10 70.01 L251.40 72.79 L251.70 75.35 L252.00 77.63 L252.30 79.57 L252.60 81.09 L252.90 82.14 L253.20 82.64 L253.50 82.16 L253.80 79.76 L254.10 75.86 L254.40 70.97 L254.70 65.63 L255.00 60.36 L255.30 55.67 L255.60 52.10 L255.90 50.17 L256.20 50.14 L256.50 51.05 L256.80 52.63 L257.10 54.72 L257.40 57.15 L257.70 59.75 L258.00 62.35 L258.30 64.79 L258.60 66.91 L258.90 68.52 L259.20 69.48 L259.50 69.71 L259.80 69.81 L260.10 69.89 L260.40 69.96 L260.70 70.01 L261.00 70.06 L261.30 70.09 L261.60 70.13 L261.90 70.16 L262.20 70.19 L262.50 70.23 L262.80 70.28 L263.10 70.33 L263.40 70.41 L263.70 70.50 L264.00 70.62 L264.30 70.90 L264.60 71.34 L264.90 71.90 L265.20 72.53 L265.50 73.17 L265.80 73.79 L266.10 74.34 L266.40 74.77 L266.70 75.04 L267.00 75.05 L267.30 73.98 L267.60 71.74 L267.90 68.66 L268.20 65.03 L268.50 61.16 L268.80 57.36 L269.10 53.94 L269.40 51.18 L269.70 49.42 L270.00 48.94 L270.30 49.94 L270.60 52.02 L270.90 54.68 L271.20 57.39 L271.50 59.63 L271.80 60.91 L272.10 60.87 L272.40 60.03 L272.70 58.59 L273.00 56.69 L273.30 54.51 L273.60 52.17 L273.90 49.85 L274.20 47.69 L274.50 45.85 L274.80 44.47 L275.10 43.72 L275.40 43.80 L275.70 45.11 L276.00 47.55 L276.30 50.96 L276.60 55.16 L276.90 60.00 L277.20 65.31 L277.50 70.91 L277.80 76.65 L278.10 82.36 L278.40 87.87 L278.70 93.02 L279.00 97.63 L279.30 101.55 L279.60 104.61 L279.90 106.64 L280.20 107.48 L280.50 107.11 L280.80 105.83 L281.10 103.81 L281.40 101.23 L281.70 98.26 L282.00 95.09 L282.30 91.88 L282.60 88.81 L282.90 86.06 L283.20 83.81 L283.50 82.23 L283.80 81.49 L284.10 82.14 L284.40 84.70 L284.70 88.35 L285.00 92.23 L285.30 95.48 L285.60 97.24 L285.90 97.07 L286.20 95.86 L286.50 93.92 L286.80 91.54 L287.10 88.99 L287.40 86.55 L287.70 84.50 L288.00 83.12 L288.30 82.68 L288.60 83.32 L288.90 84.91 L289.20 87.26 L289.50 90.18 L289.80 93.51 L290.10 97.06 L290.40 100.64 L290.70 104.09 L291.00 107.20 L291.30 109.81 L291.60 111.74 L291.90 112.80 L292.20 112.84 L292.50 112.05 L292.80 110.55 L293.10 108.44 L293.40 105.81 L293.70 102.76 L294.00 99.39 L294.30 95.79 L294.60 92.06 L294.90 88.30 L295.20 84.60 L295.50 81.06 L295.80 77.78 L296.10 74.85 L296.40 72.37 L296.70 70.44 L297.00 69.16 L297.30 68.61 L297.60 69.01 L297.90 70.51 L298.20 72.89 L298.50 75.92 L298.80 79.39 L299.10 83.07 L299.40 86.75 L299.70 90.20 L300.00 93.20 L300.30 95.54 L300.60 96.98 L300.90 97.32 L301.20 96.51 L301.50 94.71 L301.80 92.08 L302.10 88.79 L302.40 84.98 L302.70 80.83 L303.00 76.49 L303.30 72.13 L303.60 67.90 L303.90 63.97 L304.20 60.49 L304.50 57.63 L304.80 55.55 L305.10 54.22 L305.40 53.00 L305.70 51.81 L306.00 50.68 L306.30 49.59 L306.60 48.58 L306.90 47.64 L307.20 46.78 L307.50 46.02 L307.80 45.36 L308.10 44.82 L308.40 44.39 L308.70 44.10 L309.00 43.95 L309.30 44.03 L309.60 44.87 L309.90 46.47 L310.20 48.72 L310.50 51.49 L310.80 54.68 L311.10 58.16 L311.40 61.83 L311.70 65.56 L312.00 69.25 L312.30 72.78 L312.60 76.03 L312.90 78.89 L313.20 81.25 L313.50 82.98 L313.80 83.98 L314.10 84.15 L314.40 83.60 L314.70 82.47 L315.00 80.85 L315.30 78.82 L315.60 76.46 L315.90 73.87 L316.20 71.13 L316.50 68.32 L316.80 65.54 L317.10 62.86 L317.40 60.38 L317.70 58.18 L318.00 56.35 L318.30 54.97 L318.60 54.14 L318.90 53.93 L319.20 54.64 L319.50 56.29 L319.80 58.73 L320.10 61.85 L320.40 65.51 L320.70 69.57 L321.00 73.92 L321.30 78.42 L321.60 82.93 L321.90 87.33 L322.20 91.49 L322.50 95.27 L322.80 98.55 L323.10 101.19 L323.40 103.07 L323.70 104.05 L324.00 104.06 L324.30 103.36 L324.60 102.14 L324.90 100.59 L325.20 98.87 L325.50 97.15 L325.80 95.60 L326.10 94.38 L326.40 93.68 L326.70 93.60 L327.00 93.87 L327.30 94.36 L327.60 95.01 L327.90 95.76 L328.20 96.54 L328.50 97.30 L328.80 97.97 L329.10 98.49 L329.40 98.81 L329.70 98.82 L330.00 98.26 L330.30 97.18 L330.60 95.72 L330.90 94.03 L331.20 92.24 L331.50 90.49 L331.80 88.93 L332.10 87.70 L332.40 86.94 L332.70 86.76 L333.00 86.81 L333.30 86.91 L333.60 87.06 L333.90 87.26 L334.20 87.50 L334.50 87.79 L334.80 88.11 L335.10 88.47 L335.40 88.86 L335.70 89.27 L336.00 89.71 L336.30 90.16 L336.60 90.64 L336.90 91.12 L337.20 91.62 L337.50 92.12 L337.80 92.81 L338.10 93.74 L338.40 94.86 L338.70 96.12 L339.00 97.45 L339.30 98.82 L339.60 100.15 L339.90 101.40 L340.20 102.50 L340.50 103.41 L340.80 104.07 L341.10 104.42 L341.40 104.10 L341.70 101.54 L342.00 96.98 L342.30 90.95 L342.60 83.99 L342.90 76.63 L343.20 69.40 L343.50 62.83 L343.80 57.45 L344.10 53.81 L344.40 52.18 L344.70 51.02 L345.00 49.93 L345.30 48.91 L345.60 47.97 L345.90 47.12 L346.20 46.35 L346.50 45.66 L346.80 45.07 L347.10 44.58 L347.40 44.18 L347.70 43.89 L348.00 43.70 L348.30 43.62 L348.60 44.10 L348.90 45.91 L349.20 48.89 L349.50 52.82 L349.80 57.52 L350.10 62.77 L350.40 68.38 L350.70 74.14 L351.00 79.85 L351.30 85.31 L351.60 90.32 L351.90 94.68 L352.20 98.18 L352.50 100.62 L352.80 101.81 L353.10 101.48 L353.40 99.51 L353.70 96.19 L354.00 91.85 L354.30 86.82 L354.60 81.42 L354.90 75.98 L355.20 70.82 L355.50 66.27 L355.80 62.65 L356.10 60.29 L356.40 59.52 L356.70 59.81 L357.00 60.56 L357.30 61.64 L357.60 62.96 L357.90 64.40 L358.20 65.86 L358.50 67.22 L358.80 68.37 L359.10 69.22 L359.40 69.65 L359.70 69.81 L360.00 69.93 L360.30 70.03 L360.60 70.11 L360.90 70.17 L361.20 70.22 L361.50 70.27 L361.80 70.32 L362.10 70.38 L362.40 70.45 L362.70 70.53 L363.00 70.63 L363.30 70.76 L363.60 70.95 L363.90 71.50 L364.20 72.41 L364.50 73.60 L364.80 74.99 L365.10 76.48 L365.40 78.00 L365.70 79.46 L366.00 80.77 L366.30 81.84 L366.60 82.60 L366.90 82.96 L367.20 82.32 L367.50 79.70 L367.80 75.63 L368.10 70.67 L368.40 65.40 L368.70 60.40 L369.00 56.23 L369.30 53.49 L369.60 52.73 L369.90 53.73 L370.20 55.88 L370.50 58.75 L370.80 61.87 L371.10 64.83 L371.40 67.18 L371.70 68.47 L372.00 68.40 L372.30 67.27 L372.60 65.30 L372.90 62.68 L373.20 59.57 L373.50 56.16 L373.80 52.62 L374.10 49.14 L374.40 45.89 L374.70 43.05 L375.00 40.80 L375.30 39.32 L375.60 38.78 L375.90 39.09 L376.20 39.98 L376.50 41.39 L376.80 43.24 L377.10 45.46 L377.40 47.99 L377.70 50.75 L378.00 53.67 L378.30 56.69 L378.60 59.73 L378.90 62.72 L379.20 65.60 L379.50 68.29 L379.80 70.72 L380.10 72.82 L380.40 74.53 L380.70 75.81 L381.00 76.98 L381.30 78.14 L381.60 79.29 L381.90 80.41 L382.20 81.49 L382.50 82.53 L382.80 83.52 L383.10 84.44 L383.40 85.28 L383.70 86.04 L384.00 86.71 L384.30 87.27 L384.60 87.71 L384.90 88.04 L385.20 88.22 L385.50 88.26 L385.80 87.77 L386.10 86.71 L386.40 85.25 L386.70 83.57 L387.00 81.83 L387.30 80.20 L387.60 78.85 L387.90 77.96 L388.20 77.68 L388.50 78.12 L388.80 79.13 L389.10 80.54 L389.40 82.16 L389.70 83.81 L390.00 85.31 L390.30 86.48 L390.60 87.13 L390.90 87.08 L391.20 86.21 L391.50 84.64 L391.80 82.52 L392.10 79.97 L392.40 77.14 L392.70 74.17 L393.00 71.20 L393.30 68.36 L393.60 65.80 L393.90 63.66 L394.20 62.07 L394.50 61.17 L394.80 61.27 L395.10 63.53 L395.40 67.65 L395.70 72.98 L396.00 78.87 L396.30 84.66 L396.60 89.73 L396.90 93.40 L397.20 95.05 L397.50 94.77 L397.80 93.67 L398.10 91.87 L398.40 89.46 L398.70 86.55 L399.00 83.25 L399.30 79.64 L399.60 75.83 L399.90 71.93 L400.20 68.02 L400.50 64.22 L400.80 60.62 L401.10 57.33 L401.40 54.44 L401.70 52.05 L402.00 50.28 L402.30 49.20 L402.60 48.93 L402.90 49.30 L403.20 50.16 L403.50 51.46 L403.80 53.14 L404.10 55.15 L404.40 57.44 L404.70 59.95 L405.00 62.63 L405.30 65.42 L405.60 68.27 L405.90 71.13 L406.20 73.94 L406.50 76.65 L406.80 79.20 L407.10 81.55 L407.40 83.63 L407.70 85.39 L408.00 86.78 L408.30 87.74 L408.60 88.22 L408.90 87.99 L409.20 86.39 L409.50 83.77 L409.80 80.60 L410.10 77.34 L410.40 74.45 L410.70 72.39 L411.00 71.62 L411.30 72.27 L411.60 73.95 L411.90 76.36 L412.20 79.16 L412.50 82.05 L412.80 84.71 L413.10 86.82 L413.40 88.07 L413.70 88.24 L414.00 87.99 L414.30 87.57 L414.60 87.09 L414.90 86.65 L415.20 86.36 L415.50 86.35 L415.80 86.87 L416.10 87.83 L416.40 89.07 L416.70 90.41 L417.00 91.69 L417.30 92.75 L417.60 93.42 L417.90 93.46 L418.20 91.84 L418.50 88.55 L418.80 84.00 L419.10 78.57 L419.40 72.66 L419.70 66.66 L420.00 60.95 L420.30 55.94 L420.60 52.01 L420.90 49.56 L421.20 48.94 L421.50 49.43 L421.80 50.51 L422.10 52.05 L422.40 53.91 L422.70 55.99 L423.00 58.13 L423.30 60.23 L423.60 62.14 L423.90 63.74 L424.20 64.91 L424.50 65.51 L424.80 65.39 L425.10 64.42 L425.40 62.86 L425.70 60.99 L426.00 59.06 L426.30 57.36 L426.60 56.16 L426.90 55.73 L427.20 56.26 L427.50 57.67 L427.80 59.87 L428.10 62.75 L428.40 66.19 L428.70 70.10 L429.00 74.36 L429.30 78.86 L429.60 83.51 L429.90 88.18 L430.20 92.78 L430.50 97.20 L430.80 101.32 L431.10 105.05 L431.40 108.27 L431.70 110.87 L432.00 112.76 L432.30 113.81 L432.60 113.94 L432.90 113.14 L433.20 111.54 L433.50 109.20 L433.80 106.24 L434.10 102.74 L434.40 98.79 L434.70 94.50 L435.00 89.95 L435.30 85.25 L435.60 80.47 L435.90 75.72 L436.20 71.10 L436.50 66.68 L436.80 62.58 L437.10 58.88 L437.40 55.67 L437.70 53.06 L438.00 51.13 L438.30 49.97 L438.60 49.70 L438.90 50.39 L439.20 51.83 L439.50 53.75 L439.80 55.84 L440.10 57.80 L440.40 59.35 L440.70 60.20 L441.00 60.09 L441.30 59.11 L441.60 57.47 L441.90 55.36 L442.20 52.98 L442.50 50.51 L442.80 48.16 L443.10 46.11 L443.40 44.57 L443.70 43.72 L444.00 43.76 L444.30 44.69 L444.60 46.42 L444.90 48.83 L445.20 51.82 L445.50 55.28 L445.80 59.09 L446.10 63.16 L446.40 67.36 L446.70 71.60 L447.00 75.76 L447.30 79.73 L447.60 83.41 L447.90 86.68 L448.20 89.44 L448.50 91.58 L448.80 92.99 L449.10 93.56 L449.40 93.36 L449.70 92.68 L450.00 91.69 L450.30 90.51 L450.60 89.28 L450.90 88.15 L451.20 87.25 L451.50 86.45 L451.80 85.69 L452.10 84.97 L452.40 84.27 L452.70 83.60 L453.00 82.93 L453.30 82.27 L453.60 81.61 L453.90 80.93 L454.20 80.24 L454.50 79.51 L454.80 78.76 L455.10 77.96 L455.40 77.11 L455.70 76.20 L456.00 75.23 L456.30 74.02 L456.60 72.55 L456.90 70.87 L457.20 69.04 L457.50 67.12 L457.80 65.16 L458.10 63.22 L458.40 61.35 L458.70 59.62 L459.00 58.08 L459.30 56.79 L459.60 55.80 L459.90 55.18 L460.20 54.97 L460.50 55.19 L460.80 55.77 L461.10 56.69 L461.40 57.89 L461.70 59.36 L462.00 61.05 L462.30 62.92 L462.60 64.93 L462.90 67.06 L463.20 69.27 L463.50 71.51 L463.80 73.76 L464.10 75.97 L464.40 78.11 L464.70 80.14 L465.00 82.02 L465.30 83.73 L465.60 85.22 L465.90 86.45 L466.20 87.40 L466.50 88.01 L466.80 88.27 L467.10 87.89 L467.40 86.66 L467.70 84.92 L468.00 83.03 L468.30 81.35 L468.60 80.22 L468.90 80.03 L469.20 81.50 L469.50 84.34 L469.80 88.00 L470.10 91.94 L470.40 95.59 L470.70 98.42 L471.00 99.85 L471.30 99.47 L471.60 97.50 L471.90 94.27 L472.20 90.12 L472.50 85.37 L472.80 80.35 L473.10 75.38 L473.40 70.81 L473.70 66.94 L474.00 64.12 L474.30 62.67 L474.60 62.83 L474.90 64.27 L475.20 66.37 L475.50 68.56 L475.80 70.25 L476.10 70.86 L476.40 70.34 L476.70 69.08 L477.00 67.31 L477.30 65.26 L477.60 63.16 L477.90 61.25 L478.20 59.74 L478.50 58.88 L478.80 58.88 L479.10 59.75 L479.40 61.32 L479.70 63.38 L480.00 65.74 L480.30 68.20 L480.60 70.58 L480.90 72.68 L481.20 74.30 L481.50 75.24 L481.80 75.37 L482.10 75.02 L482.40 74.39 L482.70 73.60 L483.00 72.77 L483.30 72.01 L483.60 71.44 L483.90 71.17 L484.20 71.50 L484.50 72.70 L484.80 74.64 L485.10 77.19 L485.40 80.23 L485.70 83.63 L486.00 87.24 L486.30 90.95 L486.60 94.63 L486.90 98.14 L487.20 101.35 L487.50 104.14 L487.80 106.38 L488.10 107.93 L488.40 108.66 L488.70 108.32 L489.00 106.57 L489.30 103.59 L489.60 99.59 L489.90 94.79 L490.20 89.38 L490.50 83.58 L490.80 77.61 L491.10 71.66 L491.40 65.95 L491.70 60.68 L492.00 56.08 L492.30 52.34 L492.60 49.68 L492.90 48.31 L493.20 48.26 L493.50 48.87 L493.80 49.99 L494.10 51.59 L494.40 53.60 L494.70 55.98 L495.00 58.68 L495.30 61.64 L495.60 64.82 L495.90 68.17 L496.20 71.63 L496.50 75.15 L496.80 78.69 L497.10 82.19 L497.40 85.61 L497.70 88.89 L498.00 91.98 L498.30 94.84 L498.60 97.41 L498.90 99.63 L499.20 101.47 L499.50 102.88 L499.80 103.79 L500.10 104.16 L500.40 103.89 L500.70 103.06 L501.00 101.95 L501.30 100.87 L501.60 100.11 L501.90 99.96 L502.20 100.50 L502.50 101.54 L502.80 102.88 L503.10 104.31 L503.40 105.63 L503.70 106.65 L504.00 107.17 L504.30 107.01 L504.60 106.24 L504.90 104.93 L505.20 103.17 L505.50 101.05 L505.80 98.65 L506.10 96.05 L506.40 93.34 L506.70 90.61 L507.00 87.92 L507.30 85.38 L507.60 83.07 L507.90 81.06 L508.20 79.44 L508.50 78.31 L508.80 77.73 L509.10 77.81 L509.40 78.57 L509.70 79.84 L510.00 81.42 L510.30 83.12 L510.60 84.78 L510.90 86.18 L511.20 87.16 L511.50 87.51 L511.80 87.00 L512.10 85.58 L512.40 83.42 L512.70 80.66 L513.00 77.45 L513.30 73.94 L513.60 70.27 L513.90 66.60 L514.20 63.06 L514.50 59.82 L514.80 57.01 L515.10 54.80 L515.40 53.31 L515.70 52.71 L516.00 53.24 L516.30 54.97 L516.60 57.71 L516.90 61.26 L517.20 65.40 L517.50 69.94 L517.80 74.66 L518.10 79.37 L518.40 83.85 L518.70 87.91 L519.00 91.34 L519.30 93.93 L519.60 95.48 L519.90 95.81 L520.20 95.29 L520.50 94.15 L520.80 92.46 L521.10 90.28 L521.40 87.69 L521.70 84.75 L522.00 81.53 L522.30 78.09 L522.60 74.51 L522.90 70.85 L523.20 67.18 L523.50 63.57 L523.80 60.08 L524.10 56.78 L524.40 53.74" stroke="#cbb916" stroke-width="0.8" fill="none" stroke-linejoin="round"/><rect x="380.5" y="26" width="142.5" height="30" fill="#45a845" fill-opacity="0.94" stroke="#b9c2b9" stroke-width="1"/><rect x="424.5" y="29" width="57.5" height="25" fill="#2bc82f" stroke="#dcfadc" stroke-opacity="0.85" stroke-width="0.8" stroke-dasharray="1.5 1.5"/></svg>
<span class="t" style="left:24.30px;top:23.00px;line-height:10px;font-size:7px;color:#10161c;font-weight:bold;transform:scaleX(0.9250);">0.861</span>
<span class="t" style="left:24.30px;top:46.20px;line-height:10px;font-size:7px;color:#10161c;font-weight:bold;transform:scaleX(0.9250);">0.426</span>
<span class="t" style="left:25.74px;top:71.80px;line-height:10px;font-size:7px;color:#10161c;font-weight:bold;transform:scaleX(0.9250);">-0.01</span>
<span class="t" style="left:22.14px;top:97.40px;line-height:10px;font-size:7px;color:#10161c;font-weight:bold;transform:scaleX(0.9250);">-0.446</span>
<span class="t" style="left:22.14px;top:122.80px;line-height:10px;font-size:7px;color:#10161c;font-weight:bold;transform:scaleX(0.9250);">-0.881</span>
<span class="t" style="left:34.00px;top:132.50px;line-height:10px;font-size:7px;color:#10161c;font-weight:bold;transform:scaleX(0.9876);">312.9</span>
<span class="t" style="left:69.07px;top:132.50px;line-height:10px;font-size:7px;color:#10161c;font-weight:bold;transform:scaleX(0.9250);">340</span>
<span class="t" style="left:92.22px;top:132.50px;line-height:10px;font-size:7px;color:#10161c;font-weight:bold;transform:scaleX(0.9250);">360</span>
<span class="t" style="left:115.37px;top:132.50px;line-height:10px;font-size:7px;color:#10161c;font-weight:bold;transform:scaleX(0.9250);">380</span>
<span class="t" style="left:138.52px;top:132.50px;line-height:10px;font-size:7px;color:#10161c;font-weight:bold;transform:scaleX(0.9250);">400</span>
<span class="t" style="left:161.67px;top:132.50px;line-height:10px;font-size:7px;color:#10161c;font-weight:bold;transform:scaleX(0.9250);">420</span>
<span class="t" style="left:184.82px;top:132.50px;line-height:10px;font-size:7px;color:#10161c;font-weight:bold;transform:scaleX(0.9250);">440</span>
<span class="t" style="left:207.97px;top:132.50px;line-height:10px;font-size:7px;color:#10161c;font-weight:bold;transform:scaleX(0.9250);">460</span>
<span class="t" style="left:231.12px;top:132.50px;line-height:10px;font-size:7px;color:#10161c;font-weight:bold;transform:scaleX(0.9250);">480</span>
<span class="t" style="left:254.27px;top:132.50px;line-height:10px;font-size:7px;color:#10161c;font-weight:bold;transform:scaleX(0.9250);">500</span>
<span class="t" style="left:277.42px;top:132.50px;line-height:10px;font-size:7px;color:#10161c;font-weight:bold;transform:scaleX(0.9250);">520</span>
<span class="t" style="left:300.57px;top:132.50px;line-height:10px;font-size:7px;color:#10161c;font-weight:bold;transform:scaleX(0.9250);">540</span>
<span class="t" style="left:323.72px;top:132.50px;line-height:10px;font-size:7px;color:#10161c;font-weight:bold;transform:scaleX(0.9250);">560</span>
<span class="t" style="left:346.87px;top:132.50px;line-height:10px;font-size:7px;color:#10161c;font-weight:bold;transform:scaleX(0.9250);">580</span>
<span class="t" style="left:370.02px;top:132.50px;line-height:10px;font-size:7px;color:#10161c;font-weight:bold;transform:scaleX(0.9250);">600</span>
<span class="t" style="left:393.17px;top:132.50px;line-height:10px;font-size:7px;color:#10161c;font-weight:bold;transform:scaleX(0.9250);">620</span>
<span class="t" style="left:416.32px;top:132.50px;line-height:10px;font-size:7px;color:#10161c;font-weight:bold;transform:scaleX(0.9250);">640</span>
<span class="t" style="left:439.47px;top:132.50px;line-height:10px;font-size:7px;color:#10161c;font-weight:bold;transform:scaleX(0.9250);">660</span>
<span class="t" style="left:462.62px;top:132.50px;line-height:10px;font-size:7px;color:#10161c;font-weight:bold;transform:scaleX(0.9250);">680</span>
<span class="t" style="left:485.77px;top:132.50px;line-height:10px;font-size:7px;color:#10161c;font-weight:bold;transform:scaleX(0.9250);">700</span>
<span class="t" style="left:507.50px;top:132.50px;line-height:10px;font-size:7px;color:#10161c;font-weight:bold;transform:scaleX(0.9876);">728.5</span>
<svg width="1080" height="608" viewBox="0 0 1080 608"><rect x="42.5" y="142" width="482.25" height="104.5" fill="#000"/><path d="M50.72 142 V246.5 M73.87 142 V246.5 M97.02 142 V246.5 M120.17 142 V246.5 M143.32 142 V246.5 M166.47 142 V246.5 M189.62 142 V246.5 M212.77 142 V246.5 M235.92 142 V246.5 M259.07 142 V246.5 M282.22 142 V246.5 M305.37 142 V246.5 M328.52 142 V246.5 M351.67 142 V246.5 M374.82 142 V246.5 M397.97 142 V246.5 M421.12 142 V246.5 M444.27 142 V246.5 M467.42 142 V246.5 M490.57 142 V246.5 M513.72 142 V246.5 M43 169.00 H524.75 M43 194.60 H524.75 M43 220.20 H524.75 " stroke="#0f1317" stroke-width="1" fill="none"/><path d="M50.72 142 V246.5 M73.87 142 V246.5 M97.02 142 V246.5 M120.17 142 V246.5 M143.32 142 V246.5 M166.47 142 V246.5 M189.62 142 V246.5 M212.77 142 V246.5 M235.92 142 V246.5 M259.07 142 V246.5 M282.22 142 V246.5 M305.37 142 V246.5 M328.52 142 V246.5 M351.67 142 V246.5 M374.82 142 V246.5 M397.97 142 V246.5 M421.12 142 V246.5 M444.27 142 V246.5 M467.42 142 V246.5 M490.57 142 V246.5 M513.72 142 V246.5 " stroke="#2b353d" stroke-width="1" stroke-dasharray="1 1" fill="none"/><path d="M43 169.00 H524.75 M43 194.60 H524.75 M43 220.20 H524.75 " stroke="#2b353d" stroke-width="1" stroke-dasharray="2 2" fill="none"/><path d="M42.90 178.48 L43.20 182.57 L43.50 187.04 L43.80 191.52 L44.10 195.66 L44.40 199.10 L44.70 201.50 L45.00 202.48 L45.30 201.43 L45.60 198.28 L45.90 193.75 L46.20 188.58 L46.50 183.51 L46.80 179.26 L47.10 176.57 L47.40 176.15 L47.70 178.16 L48.00 182.10 L48.30 187.45 L48.60 193.69 L48.90 200.29 L49.20 206.74 L49.50 212.52 L49.80 217.09 L50.10 219.95 L50.40 220.62 L50.70 219.92 L51.00 218.41 L51.30 216.20 L51.60 213.43 L51.90 210.23 L52.20 206.73 L52.50 203.06 L52.80 199.34 L53.10 195.72 L53.40 192.32 L53.70 189.26 L54.00 186.68 L54.30 184.71 L54.60 183.48 L54.90 183.12 L55.20 183.36 L55.50 183.96 L55.80 184.85 L56.10 185.96 L56.40 187.24 L56.70 188.63 L57.00 190.06 L57.30 191.47 L57.60 192.80 L57.90 193.99 L58.20 194.97 L58.50 195.69 L58.80 196.08 L59.10 196.09 L59.40 195.80 L59.70 195.27 L60.00 194.55 L60.30 193.71 L60.60 192.79 L60.90 191.85 L61.20 190.95 L61.50 190.15 L61.80 189.50 L62.10 189.05 L62.40 188.87 L62.70 188.97 L63.00 189.28 L63.30 189.77 L63.60 190.37 L63.90 191.03 L64.20 191.70 L64.50 192.33 L64.80 192.85 L65.10 193.23 L65.40 193.40 L65.70 193.24 L66.00 192.61 L66.30 191.60 L66.60 190.28 L66.90 188.74 L67.20 187.08 L67.50 185.37 L67.80 183.71 L68.10 182.18 L68.40 180.85 L68.70 179.83 L69.00 179.20 L69.30 179.05 L69.60 180.01 L69.90 182.17 L70.20 185.30 L70.50 189.16 L70.80 193.52 L71.10 198.15 L71.40 202.80 L71.70 207.24 L72.00 211.25 L72.30 214.57 L72.60 216.99 L72.90 218.25 L73.20 218.08 L73.50 216.33 L73.80 213.37 L74.10 209.67 L74.40 205.64 L74.70 201.75 L75.00 198.42 L75.30 196.10 L75.60 195.22 L75.90 195.42 L76.20 195.97 L76.50 196.80 L76.80 197.84 L77.10 199.01 L77.40 200.23 L77.70 201.44 L78.00 202.57 L78.30 203.53 L78.60 204.26 L78.90 204.68 L79.20 204.68 L79.50 203.84 L79.80 202.19 L80.10 199.85 L80.40 196.95 L80.70 193.64 L81.00 190.03 L81.30 186.27 L81.60 182.49 L81.90 178.82 L82.20 175.39 L82.50 172.33 L82.80 169.78 L83.10 167.87 L83.40 166.73 L83.70 166.51 L84.00 167.47 L84.30 169.52 L84.60 172.43 L84.90 176.01 L85.20 180.03 L85.50 184.27 L85.80 188.52 L86.10 192.57 L86.40 196.20 L86.70 199.19 L87.00 201.33 L87.30 202.40 L87.60 202.36 L87.90 201.71 L88.20 200.60 L88.50 199.12 L88.80 197.38 L89.10 195.47 L89.40 193.49 L89.70 191.55 L90.00 189.74 L90.30 188.17 L90.60 186.93 L90.90 186.12 L91.20 185.84 L91.50 186.49 L91.80 188.21 L92.10 190.80 L92.40 194.06 L92.70 197.78 L93.00 201.76 L93.30 205.79 L93.60 209.68 L93.90 213.22 L94.20 216.20 L94.50 218.42 L94.80 219.68 L95.10 219.76 L95.40 218.48 L95.70 215.97 L96.00 212.45 L96.30 208.11 L96.60 203.14 L96.90 197.75 L97.20 192.13 L97.50 186.48 L97.80 181.00 L98.10 175.88 L98.40 171.33 L98.70 167.55 L99.00 164.72 L99.30 163.05 L99.60 162.69 L99.90 162.86 L100.20 163.23 L100.50 163.78 L100.80 164.49 L101.10 165.34 L101.40 166.30 L101.70 167.37 L102.00 168.51 L102.30 169.71 L102.60 170.97 L102.90 172.95 L103.20 175.82 L103.50 179.34 L103.80 183.29 L104.10 187.44 L104.40 191.56 L104.70 195.43 L105.00 198.80 L105.30 201.45 L105.60 203.16 L105.90 203.69 L106.20 202.99 L106.50 201.24 L106.80 198.63 L107.10 195.36 L107.40 191.62 L107.70 187.60 L108.00 183.49 L108.30 179.48 L108.60 175.76 L108.90 172.53 L109.20 169.98 L109.50 168.30 L109.80 167.68 L110.10 168.49 L110.40 170.74 L110.70 173.98 L111.00 177.79 L111.30 181.74 L111.60 185.39 L111.90 188.30 L112.20 190.06 L112.50 190.33 L112.80 189.78 L113.10 188.76 L113.40 187.38 L113.70 185.79 L114.00 184.11 L114.30 182.47 L114.60 181.02 L114.90 179.88 L115.20 179.18 L115.50 179.10 L115.80 180.27 L116.10 182.68 L116.40 186.07 L116.70 190.20 L117.00 194.83 L117.30 199.71 L117.60 204.58 L117.90 209.20 L118.20 213.33 L118.50 216.72 L118.80 219.12 L119.10 220.28 L119.40 220.03 L119.70 218.64 L120.00 216.48 L120.30 213.92 L120.60 211.32 L120.90 209.07 L121.20 207.52 L121.50 207.03 L121.80 207.46 L122.10 208.46 L122.40 209.94 L122.70 211.78 L123.00 213.87 L123.30 216.09 L123.60 218.33 L123.90 220.48 L124.20 222.42 L124.50 224.04 L124.80 225.22 L125.10 225.87 L125.40 225.84 L125.70 225.09 L126.00 223.67 L126.30 221.66 L126.60 219.16 L126.90 216.25 L127.20 213.00 L127.50 209.50 L127.80 205.84 L128.10 202.10 L128.40 198.36 L128.70 194.70 L129.00 191.21 L129.30 187.97 L129.60 185.06 L129.90 182.57 L130.20 180.58 L130.50 179.17 L130.80 178.18 L131.10 177.22 L131.40 176.28 L131.70 175.36 L132.00 174.48 L132.30 173.63 L132.60 172.82 L132.90 172.04 L133.20 171.31 L133.50 170.62 L133.80 169.98 L134.10 169.40 L134.40 168.86 L134.70 168.39 L135.00 167.98 L135.30 167.63 L135.60 167.34 L135.90 167.13 L136.20 166.99 L136.50 166.92 L136.80 167.03 L137.10 167.56 L137.40 168.49 L137.70 169.78 L138.00 171.38 L138.30 173.26 L138.60 175.37 L138.90 177.65 L139.20 180.08 L139.50 182.60 L139.80 185.17 L140.10 187.75 L140.40 190.30 L140.70 192.76 L141.00 195.10 L141.30 197.27 L141.60 199.23 L141.90 200.93 L142.20 202.34 L142.50 203.40 L142.80 204.07 L143.10 204.30 L143.40 204.21 L143.70 203.96 L144.00 203.58 L144.30 203.10 L144.60 202.57 L144.90 202.02 L145.20 201.49 L145.50 201.00 L145.80 200.61 L146.10 200.33 L146.40 200.22 L146.70 200.37 L147.00 200.86 L147.30 201.66 L147.60 202.70 L147.90 203.93 L148.20 205.30 L148.50 206.76 L148.80 208.26 L149.10 209.74 L149.40 211.15 L149.70 212.44 L150.00 213.56 L150.30 214.45 L150.60 215.06 L150.90 215.34 L151.20 215.14 L151.50 214.24 L151.80 212.77 L152.10 210.85 L152.40 208.60 L152.70 206.16 L153.00 203.64 L153.30 201.19 L153.60 198.91 L153.90 196.94 L154.20 195.41 L154.50 194.45 L154.80 194.17 L155.10 194.60 L155.40 195.63 L155.70 197.14 L156.00 199.01 L156.30 201.13 L156.60 203.38 L156.90 205.66 L157.20 207.84 L157.50 209.81 L157.80 211.45 L158.10 212.66 L158.40 213.30 L158.70 213.27 L159.00 212.43 L159.30 210.91 L159.60 208.86 L159.90 206.41 L160.20 203.71 L160.50 200.89 L160.80 198.11 L161.10 195.50 L161.40 193.20 L161.70 191.36 L162.00 190.12 L162.30 189.63 L162.60 190.35 L162.90 192.58 L163.20 195.93 L163.50 200.03 L163.80 204.47 L164.10 208.87 L164.40 212.84 L164.70 215.99 L165.00 217.94 L165.30 218.28 L165.60 216.58 L165.90 213.22 L166.20 208.75 L166.50 203.73 L166.80 198.72 L167.10 194.26 L167.40 190.92 L167.70 189.26 L168.00 189.38 L168.30 190.30 L168.60 191.84 L168.90 193.88 L169.20 196.30 L169.50 198.97 L169.80 201.78 L170.10 204.60 L170.40 207.30 L170.70 209.78 L171.00 211.89 L171.30 213.53 L171.60 214.58 L171.90 214.89 L172.20 214.26 L172.50 212.77 L172.80 210.65 L173.10 208.17 L173.40 205.59 L173.70 203.14 L174.00 201.08 L174.30 199.67 L174.60 199.16 L174.90 199.74 L175.20 201.31 L175.50 203.65 L175.80 206.57 L176.10 209.85 L176.40 213.30 L176.70 216.70 L177.00 219.85 L177.30 222.55 L177.60 224.58 L177.90 225.75 L178.20 225.93 L178.50 225.70 L178.80 225.23 L179.10 224.56 L179.40 223.70 L179.70 222.67 L180.00 221.49 L180.30 220.19 L180.60 218.79 L180.90 217.30 L181.20 215.75 L181.50 214.16 L181.80 212.56 L182.10 210.95 L182.40 209.37 L182.70 207.84 L183.00 206.38 L183.30 205.00 L183.60 203.73 L183.90 202.60 L184.20 201.62 L184.50 200.81 L184.80 200.13 L185.10 199.54 L185.40 199.00 L185.70 198.48 L186.00 197.94 L186.30 197.36 L186.60 196.69 L186.90 195.89 L187.20 194.92 L187.50 193.78 L187.80 192.50 L188.10 191.11 L188.40 189.61 L188.70 188.04 L189.00 186.42 L189.30 184.76 L189.60 183.09 L189.90 181.44 L190.20 179.81 L190.50 178.23 L190.80 176.73 L191.10 175.32 L191.40 174.03 L191.70 172.88 L192.00 171.89 L192.30 171.08 L192.60 170.47 L192.90 170.09 L193.20 169.95 L193.50 170.46 L193.80 172.00 L194.10 174.41 L194.40 177.52 L194.70 181.20 L195.00 185.27 L195.30 189.60 L195.60 194.01 L195.90 198.37 L196.20 202.51 L196.50 206.28 L196.80 209.53 L197.10 212.10 L197.40 213.83 L197.70 214.58 L198.00 213.48 L198.30 209.61 L198.60 203.75 L198.90 196.69 L199.20 189.26 L199.50 182.27 L199.80 176.52 L200.10 172.84 L200.40 171.97 L200.70 173.09 L201.00 175.36 L201.30 178.31 L201.60 181.50 L201.90 184.48 L202.20 186.81 L202.50 188.03 L202.80 187.91 L203.10 187.02 L203.40 185.63 L203.70 183.97 L204.00 182.29 L204.30 180.82 L204.60 179.81 L204.90 179.50 L205.20 181.11 L205.50 184.83 L205.80 190.01 L206.10 195.97 L206.40 202.05 L206.70 207.57 L207.00 211.88 L207.30 214.30 L207.60 214.00 L207.90 210.22 L208.20 204.11 L208.50 197.00 L208.80 190.24 L209.10 185.17 L209.40 183.12 L209.70 183.91 L210.00 186.12 L210.30 189.34 L210.60 193.17 L210.90 197.23 L211.20 201.11 L211.50 204.43 L211.80 206.78 L212.10 207.78 L212.40 206.91 L212.70 204.29 L213.00 200.57 L213.30 196.42 L213.60 192.52 L213.90 189.54 L214.20 188.14 L214.50 188.27 L214.80 188.85 L215.10 189.79 L215.40 191.04 L215.70 192.54 L216.00 194.24 L216.30 196.06 L216.60 197.96 L216.90 199.87 L217.20 201.74 L217.50 203.51 L217.80 205.12 L218.10 206.90 L218.40 208.92 L218.70 211.10 L219.00 213.35 L219.30 215.60 L219.60 217.76 L219.90 219.75 L220.20 221.49 L220.50 222.90 L220.80 223.90 L221.10 224.39 L221.40 224.24 L221.70 223.21 L222.00 221.41 L222.30 218.96 L222.60 216.01 L222.90 212.70 L223.20 209.15 L223.50 205.52 L223.80 201.92 L224.10 198.50 L224.40 195.40 L224.70 192.75 L225.00 190.69 L225.30 189.35 L225.60 188.87 L225.90 189.64 L226.20 191.78 L226.50 195.00 L226.80 199.03 L227.10 203.57 L227.40 208.33 L227.70 213.05 L228.00 217.42 L228.30 221.17 L228.60 224.01 L228.90 225.65 L229.20 225.91 L229.50 225.49 L229.80 224.68 L230.10 223.58 L230.40 222.28 L230.70 220.88 L231.00 219.45 L231.30 218.11 L231.60 216.94 L231.90 216.03 L232.20 215.48 L232.50 215.38 L232.80 215.79 L233.10 216.64 L233.40 217.85 L233.70 219.34 L234.00 221.03 L234.30 222.82 L234.60 224.63 L234.90 226.38 L235.20 227.98 L235.50 229.35 L235.80 230.41 L236.10 231.06 L236.40 231.23 L236.70 230.76 L237.00 229.63 L237.30 227.91 L237.60 225.65 L237.90 222.93 L238.20 219.79 L238.50 216.31 L238.80 212.54 L239.10 208.55 L239.40 204.38 L239.70 200.12 L240.00 195.82 L240.30 191.53 L240.60 187.33 L240.90 183.26 L241.20 179.41 L241.50 175.81 L241.80 172.54 L242.10 169.66 L242.40 167.23 L242.70 165.31 L243.00 163.96 L243.30 163.24 L243.60 163.32 L243.90 164.86 L244.20 167.77 L244.50 171.81 L244.80 176.73 L245.10 182.29 L245.40 188.23 L245.70 194.33 L246.00 200.33 L246.30 205.98 L246.60 211.05 L246.90 215.29 L247.20 218.44 L247.50 220.28 L247.80 220.64 L248.10 220.55 L248.40 220.35 L248.70 220.05 L249.00 219.67 L249.30 219.20 L249.60 218.66 L249.90 218.06 L250.20 217.40 L250.50 216.69 L250.80 215.94 L251.10 215.14 L251.40 213.74 L251.70 211.60 L252.00 208.83 L252.30 205.54 L252.60 201.87 L252.90 197.91 L253.20 193.79 L253.50 189.62 L253.80 185.52 L254.10 181.61 L254.40 177.99 L254.70 174.79 L255.00 172.11 L255.30 170.09 L255.60 168.82 L255.90 168.44 L256.20 169.67 L256.50 172.62 L256.80 176.78 L257.10 181.66 L257.40 186.76 L257.70 191.59 L258.00 195.65 L258.30 198.44 L258.60 199.46 L258.90 198.95 L259.20 197.54 L259.50 195.39 L259.80 192.66 L260.10 189.49 L260.40 186.04 L260.70 182.47 L261.00 178.93 L261.30 175.58 L261.60 172.57 L261.90 170.05 L262.20 168.18 L262.50 167.11 L262.80 167.09 L263.10 168.88 L263.40 172.23 L263.70 176.66 L264.00 181.66 L264.30 186.73 L264.60 191.38 L264.90 195.12 L265.20 197.43 L265.50 197.90 L265.80 197.09 L266.10 195.45 L266.40 193.16 L266.70 190.41 L267.00 187.38 L267.30 184.26 L267.60 181.23 L267.90 178.48 L268.20 176.20 L268.50 174.57 L268.80 173.78 L269.10 174.15 L269.40 176.06 L269.70 179.19 L270.00 183.25 L270.30 187.89 L270.60 192.81 L270.90 197.68 L271.20 202.17 L271.50 205.98 L271.80 208.77 L272.10 210.22 L272.40 210.34 L272.70 210.23 L273.00 210.04 L273.30 209.78 L273.60 209.45 L273.90 209.09 L274.20 208.68 L274.50 208.26 L274.80 207.83 L275.10 207.40 L275.40 206.99 L275.70 206.61 L276.00 206.27 L276.30 205.98 L276.60 205.72 L276.90 205.48 L277.20 205.26 L277.50 205.04 L277.80 204.83 L278.10 204.62 L278.40 204.39 L278.70 204.14 L279.00 203.86 L279.30 203.55 L279.60 203.20 L279.90 202.80 L280.20 202.34 L280.50 201.81 L280.80 200.75 L281.10 198.51 L281.40 195.35 L281.70 191.53 L282.00 187.31 L282.30 182.96 L282.60 178.74 L282.90 174.92 L283.20 171.76 L283.50 169.52 L283.80 168.48 L284.10 168.76 L284.40 170.11 L284.70 172.37 L285.00 175.36 L285.30 178.93 L285.60 182.91 L285.90 187.15 L286.20 191.48 L286.50 195.74 L286.80 199.77 L287.10 203.40 L287.40 206.49 L287.70 208.86 L288.00 210.35 L288.30 210.80 L288.60 209.64 L288.90 206.97 L289.20 203.34 L289.50 199.32 L289.80 195.48 L290.10 192.39 L290.40 190.60 L290.70 190.55 L291.00 191.67 L291.30 193.68 L291.60 196.35 L291.90 199.47 L292.20 202.80 L292.50 206.14 L292.80 209.27 L293.10 211.96 L293.40 214.00 L293.70 215.16 L294.00 215.31 L294.30 214.93 L294.60 214.19 L294.90 213.17 L295.20 211.94 L295.50 210.56 L295.80 209.11 L296.10 207.64 L296.40 206.24 L296.70 204.96 L297.00 203.88 L297.30 203.07 L297.60 202.59 L297.90 202.52 L298.20 202.97 L298.50 203.91 L298.80 205.24 L299.10 206.87 L299.40 208.73 L299.70 210.71 L300.00 212.74 L300.30 214.73 L300.60 216.58 L300.90 218.22 L301.20 219.54 L301.50 220.48 L301.80 220.93 L302.10 220.20 L302.40 216.78 L302.70 211.28 L303.00 204.43 L303.30 196.95 L303.60 189.59 L303.90 183.07 L304.20 178.12 L304.50 175.49 L304.80 175.66 L305.10 177.85 L305.40 181.32 L305.70 185.41 L306.00 189.45 L306.30 192.77 L306.60 194.69 L306.90 194.57 L307.20 192.37 L307.50 188.67 L307.80 184.07 L308.10 179.17 L308.40 174.58 L308.70 170.91 L309.00 168.75 L309.30 168.51 L309.60 169.09 L309.90 170.16 L310.20 171.60 L310.50 173.29 L310.80 175.11 L311.10 176.93 L311.40 178.65 L311.70 180.13 L312.00 181.27 L312.30 181.93 L312.60 182.03 L312.90 181.74 L313.20 181.16 L313.50 180.30 L313.80 179.22 L314.10 177.95 L314.40 176.51 L314.70 174.94 L315.00 173.28 L315.30 171.57 L315.60 169.83 L315.90 168.09 L316.20 166.41 L316.50 164.80 L316.80 163.30 L317.10 161.95 L317.40 160.78 L317.70 159.83 L318.00 159.12 L318.30 158.70 L318.60 158.62 L318.90 159.48 L319.20 161.43 L319.50 164.30 L319.80 167.93 L320.10 172.13 L320.40 176.74 L320.70 181.59 L321.00 186.50 L321.30 191.30 L321.60 195.83 L321.90 199.90 L322.20 203.35 L322.50 206.00 L322.80 207.69 L323.10 208.24 L323.40 207.71 L323.70 206.39 L324.00 204.52 L324.30 202.31 L324.60 200.00 L324.90 197.80 L325.20 195.94 L325.50 194.66 L325.80 194.16 L326.10 194.30 L326.40 194.67 L326.70 195.22 L327.00 195.85 L327.30 196.51 L327.60 197.12 L327.90 197.60 L328.20 197.89 L328.50 197.91 L328.80 197.47 L329.10 196.61 L329.40 195.36 L329.70 193.79 L330.00 191.94 L330.30 189.88 L330.60 187.64 L330.90 185.29 L331.20 182.88 L331.50 180.46 L331.80 178.08 L332.10 175.79 L332.40 173.66 L332.70 171.72 L333.00 170.05 L333.30 168.67 L333.60 167.66 L333.90 167.07 L334.20 166.94 L334.50 167.55 L334.80 168.90 L335.10 170.91 L335.40 173.45 L335.70 176.44 L336.00 179.77 L336.30 183.34 L336.60 187.04 L336.90 190.78 L337.20 194.45 L337.50 197.96 L337.80 201.19 L338.10 204.06 L338.40 206.45 L338.70 208.26 L339.00 209.39 L339.30 209.75 L339.60 209.13 L339.90 207.55 L340.20 205.16 L340.50 202.10 L340.80 198.53 L341.10 194.58 L341.40 190.42 L341.70 186.18 L342.00 182.01 L342.30 178.07 L342.60 174.51 L342.90 171.46 L343.20 169.08 L343.50 167.52 L343.80 166.92 L344.10 167.46 L344.40 169.13 L344.70 171.74 L345.00 175.14 L345.30 179.15 L345.60 183.61 L345.90 188.34 L346.20 193.17 L346.50 197.95 L346.80 202.49 L347.10 206.63 L347.40 210.20 L347.70 213.02 L348.00 214.94 L348.30 215.78 L348.60 215.48 L348.90 214.24 L349.20 212.21 L349.50 209.52 L349.80 206.31 L350.10 202.73 L350.40 198.90 L350.70 194.96 L351.00 191.06 L351.30 187.33 L351.60 183.91 L351.90 180.93 L352.20 178.54 L352.50 176.87 L352.80 176.06 L353.10 176.29 L353.40 177.70 L353.70 180.11 L354.00 183.35 L354.30 187.22 L354.60 191.54 L354.90 196.12 L355.20 200.77 L355.50 205.31 L355.80 209.55 L356.10 213.30 L356.40 216.38 L356.70 218.59 L357.00 219.76 L357.30 219.78 L357.60 218.99 L357.90 217.55 L358.20 215.54 L358.50 213.04 L358.80 210.16 L359.10 206.98 L359.40 203.59 L359.70 200.09 L360.00 196.56 L360.30 193.09 L360.60 189.78 L360.90 186.72 L361.20 184.00 L361.50 181.70 L361.80 179.92 L362.10 178.75 L362.40 178.28 L362.70 178.71 L363.00 180.19 L363.30 182.55 L363.60 185.67 L363.90 189.39 L364.20 193.58 L364.50 198.08 L364.80 202.75 L365.10 207.45 L365.40 212.03 L365.70 216.34 L366.00 220.25 L366.30 223.61 L366.60 226.28 L366.90 228.10 L367.20 228.94 L367.50 228.80 L367.80 228.04 L368.10 226.74 L368.40 224.95 L368.70 222.73 L369.00 220.15 L369.30 217.26 L369.60 214.12 L369.90 210.80 L370.20 207.36 L370.50 203.84 L370.80 200.32 L371.10 196.86 L371.40 193.50 L371.70 190.33 L372.00 187.38 L372.30 184.73 L372.60 182.43 L372.90 180.54 L373.20 179.13 L373.50 178.25 L373.80 177.97 L374.10 179.04 L374.40 181.71 L374.70 185.49 L375.00 189.89 L375.30 194.41 L375.60 198.55 L375.90 201.81 L376.20 203.72 L376.50 203.68 L376.80 201.13 L377.10 196.73 L377.40 191.27 L377.70 185.56 L378.00 180.40 L378.30 176.60 L378.60 174.96 L378.90 175.54 L379.20 177.45 L379.50 180.44 L379.80 184.29 L380.10 188.75 L380.40 193.61 L380.70 198.62 L381.00 203.54 L381.30 208.15 L381.60 212.22 L381.90 215.50 L382.20 217.78 L382.50 218.80 L382.80 218.60 L383.10 217.67 L383.40 216.16 L383.70 214.18 L384.00 211.84 L384.30 209.26 L384.60 206.57 L384.90 203.87 L385.20 201.28 L385.50 198.93 L385.80 196.93 L386.10 195.39 L386.40 194.43 L386.70 194.17 L387.00 194.50 L387.30 195.26 L387.60 196.34 L387.90 197.66 L388.20 199.11 L388.50 200.60 L388.80 202.03 L389.10 203.30 L389.40 204.32 L389.70 204.99 L390.00 205.21 L390.30 204.59 L390.60 203.06 L390.90 200.88 L391.20 198.32 L391.50 195.63 L391.80 193.08 L392.10 190.93 L392.40 189.43 L392.70 188.87 L393.00 189.74 L393.30 192.19 L393.60 195.81 L393.90 200.23 L394.20 205.06 L394.50 209.91 L394.80 214.40 L395.10 218.15 L395.40 220.76 L395.70 221.85 L396.00 221.64 L396.30 220.91 L396.60 219.72 L396.90 218.14 L397.20 216.22 L397.50 214.02 L397.80 211.60 L398.10 209.02 L398.40 206.34 L398.70 203.62 L399.00 200.92 L399.30 198.29 L399.60 195.80 L399.90 193.51 L400.20 191.48 L400.50 189.76 L400.80 188.41 L401.10 187.49 L401.40 187.07 L401.70 187.40 L402.00 188.93 L402.30 191.43 L402.60 194.66 L402.90 198.35 L403.20 202.25 L403.50 206.11 L403.80 209.67 L404.10 212.68 L404.40 214.88 L404.70 216.01 L405.00 214.50 L405.30 207.23 L405.60 198.29 L405.90 192.38 L406.20 192.15 L406.50 193.37 L406.80 195.36 L407.10 197.84 L407.40 200.56 L407.70 203.25 L408.00 205.64 L408.30 207.46 L408.60 208.44 L408.90 208.37 L409.20 207.43 L409.50 205.88 L409.80 204.01 L410.10 202.08 L410.40 200.38 L410.70 199.16 L411.00 198.70 L411.30 199.11 L411.60 200.20 L411.90 201.88 L412.20 204.00 L412.50 206.47 L412.80 209.14 L413.10 211.92 L413.40 214.67 L413.70 217.27 L414.00 219.61 L414.30 221.56 L414.60 223.01 L414.90 223.84 L415.20 223.80 L415.50 221.93 L415.80 218.33 L416.10 213.42 L416.40 207.63 L416.70 201.35 L417.00 195.01 L417.30 189.02 L417.60 183.80 L417.90 179.75 L418.20 177.30 L418.50 176.83 L418.80 178.01 L419.10 180.38 L419.40 183.56 L419.70 187.19 L420.00 190.92 L420.30 194.36 L420.60 197.17 L420.90 198.98 L421.20 199.43 L421.50 198.68 L421.80 197.03 L422.10 194.70 L422.40 191.88 L422.70 188.79 L423.00 185.63 L423.30 182.61 L423.60 179.93 L423.90 177.80 L424.20 176.42 L424.50 176.01 L424.80 176.83 L425.10 178.79 L425.40 181.64 L425.70 185.16 L426.00 189.09 L426.30 193.18 L426.60 197.20 L426.90 200.90 L427.20 204.03 L427.50 206.35 L427.80 207.62 L428.10 207.59 L428.40 206.32 L428.70 204.40 L429.00 202.48 L429.30 201.19 L429.60 201.10 L429.90 202.10 L430.20 203.97 L430.50 206.49 L430.80 209.48 L431.10 212.73 L431.40 216.04 L431.70 219.22 L432.00 222.08 L432.30 224.41 L432.60 226.01 L432.90 226.69 L433.20 226.59 L433.50 226.17 L433.80 225.47 L434.10 224.53 L434.40 223.35 L434.70 221.99 L435.00 220.44 L435.30 218.76 L435.60 216.95 L435.90 215.05 L436.20 213.08 L436.50 211.08 L436.80 209.05 L437.10 207.04 L437.40 205.07 L437.70 203.16 L438.00 201.35 L438.30 199.64 L438.60 198.09 L438.90 196.70 L439.20 195.50 L439.50 194.53 L439.80 193.81 L440.10 193.36 L440.40 193.08 L440.70 192.87 L441.00 192.71 L441.30 192.54 L441.60 192.33 L441.90 192.04 L442.20 191.43 L442.50 189.70 L442.80 187.00 L443.10 183.59 L443.40 179.73 L443.70 175.65 L444.00 171.63 L444.30 167.90 L444.60 164.73 L444.90 162.36 L445.20 161.04 L445.50 161.01 L445.80 162.15 L446.10 164.28 L446.40 167.28 L446.70 170.98 L447.00 175.24 L447.30 179.93 L447.60 184.88 L447.90 189.95 L448.20 195.00 L448.50 199.87 L448.80 204.43 L449.10 208.52 L449.40 212.00 L449.70 214.72 L450.00 216.54 L450.30 217.31 L450.60 216.66 L450.90 214.35 L451.20 210.63 L451.50 205.79 L451.80 200.11 L452.10 193.87 L452.40 187.37 L452.70 180.87 L453.00 174.66 L453.30 169.03 L453.60 164.25 L453.90 160.61 L454.20 158.40 L454.50 157.86 L454.80 158.46 L455.10 159.78 L455.40 161.70 L455.70 164.11 L456.00 166.86 L456.30 169.85 L456.60 172.94 L456.90 176.01 L457.20 178.93 L457.50 181.59 L457.80 183.85 L458.10 185.60 L458.40 186.71 L458.70 187.05 L459.00 186.52 L459.30 185.24 L459.60 183.37 L459.90 181.08 L460.20 178.55 L460.50 175.94 L460.80 173.42 L461.10 171.17 L461.40 169.34 L461.70 168.12 L462.00 167.68 L462.30 168.19 L462.60 169.60 L462.90 171.69 L463.20 174.23 L463.50 177.00 L463.80 179.78 L464.10 182.35 L464.40 184.49 L464.70 185.98 L465.00 186.59 L465.30 186.47 L465.60 186.05 L465.90 185.37 L466.20 184.46 L466.50 183.33 L466.80 182.02 L467.10 180.54 L467.40 178.94 L467.70 177.23 L468.00 175.45 L468.30 173.61 L468.60 171.75 L468.90 169.88 L469.20 168.05 L469.50 166.27 L469.80 164.57 L470.10 162.98 L470.40 161.52 L470.70 160.23 L471.00 159.12 L471.30 158.22 L471.60 157.57 L471.90 157.18 L472.20 157.10 L472.50 157.93 L472.80 159.81 L473.10 162.62 L473.40 166.19 L473.70 170.38 L474.00 175.04 L474.30 180.01 L474.60 185.16 L474.90 190.32 L475.20 195.36 L475.50 200.12 L475.80 204.44 L476.10 208.19 L476.40 211.21 L476.70 213.35 L477.00 214.47 L477.30 214.33 L477.60 212.56 L477.90 209.44 L478.20 205.30 L478.50 200.48 L478.80 195.33 L479.10 190.17 L479.40 185.34 L479.70 181.19 L480.00 178.06 L480.30 176.28 L480.60 176.23 L480.90 178.26 L481.20 181.94 L481.50 186.74 L481.80 192.12 L482.10 197.56 L482.40 202.51 L482.70 206.45 L483.00 208.83 L483.30 209.16 L483.60 207.55 L483.90 204.47 L484.20 200.38 L484.50 195.76 L484.80 191.05 L485.10 186.73 L485.40 183.24 L485.70 181.05 L486.00 180.57 L486.30 181.18 L486.60 182.47 L486.90 184.35 L487.20 186.72 L487.50 189.47 L487.80 192.51 L488.10 195.72 L488.40 199.02 L488.70 202.30 L489.00 205.45 L489.30 208.38 L489.60 210.98 L489.90 213.15 L490.20 214.80 L490.50 215.82 L490.80 216.09 L491.10 215.15 L491.40 212.93 L491.70 209.66 L492.00 205.61 L492.30 201.02 L492.60 196.13 L492.90 191.21 L493.20 186.49 L493.50 182.22 L493.80 178.67 L494.10 176.06 L494.40 174.66 L494.70 174.68 L495.00 176.02 L495.30 178.49 L495.60 181.86 L495.90 185.96 L496.20 190.56 L496.50 195.47 L496.80 200.49 L497.10 205.42 L497.40 210.06 L497.70 214.19 L498.00 217.63 L498.30 220.17 L498.60 221.61 L498.90 221.72 L499.20 220.22 L499.50 217.29 L499.80 213.19 L500.10 208.19 L500.40 202.55 L500.70 196.54 L501.00 190.42 L501.30 184.45 L501.60 178.90 L501.90 174.04 L502.20 170.13 L502.50 167.43 L502.80 166.21 L503.10 166.26 L503.40 166.59 L503.70 167.03 L504.00 167.44 L504.30 167.66 L504.60 167.42 L504.90 166.44 L505.20 165.12 L505.50 163.90 L505.80 163.19 L506.10 163.30 L506.40 164.08 L506.70 165.43 L507.00 167.25 L507.30 169.46 L507.60 171.97 L507.90 174.69 L508.20 177.54 L508.50 180.42 L508.80 183.24 L509.10 185.92 L509.40 188.37 L509.70 190.50 L510.00 192.22 L510.30 193.45 L510.60 194.09 L510.90 193.97 L511.20 192.73 L511.50 190.57 L511.80 187.73 L512.10 184.50 L512.40 181.14 L512.70 177.91 L513.00 175.07 L513.30 172.90 L513.60 171.65 L513.90 171.48 L514.20 171.65 L514.50 171.94 L514.80 172.28 L515.10 172.61 L515.40 172.86 L515.70 172.97 L516.00 172.93 L516.30 172.80 L516.60 172.62 L516.90 172.44 L517.20 172.29 L517.50 172.22 L517.80 172.86 L518.10 175.12 L518.40 178.70 L518.70 183.26 L519.00 188.46 L519.30 193.99 L519.60 199.50 L519.90 204.68 L520.20 209.17 L520.50 212.66 L520.80 214.82 L521.10 215.34 L521.40 215.13 L521.70 214.64 L522.00 213.94 L522.30 213.05 L522.60 212.01 L522.90 210.88 L523.20 209.68 L523.50 208.47 L523.80 207.27 L524.10 206.14 L524.40 205.11" stroke="#4c4200" stroke-width="1.3" fill="none" stroke-linejoin="round" stroke-opacity="0.6"/><path d="M42.90 178.48 L43.20 182.57 L43.50 187.04 L43.80 191.52 L44.10 195.66 L44.40 199.10 L44.70 201.50 L45.00 202.48 L45.30 201.43 L45.60 198.28 L45.90 193.75 L46.20 188.58 L46.50 183.51 L46.80 179.26 L47.10 176.57 L47.40 176.15 L47.70 178.16 L48.00 182.10 L48.30 187.45 L48.60 193.69 L48.90 200.29 L49.20 206.74 L49.50 212.52 L49.80 217.09 L50.10 219.95 L50.40 220.62 L50.70 219.92 L51.00 218.41 L51.30 216.20 L51.60 213.43 L51.90 210.23 L52.20 206.73 L52.50 203.06 L52.80 199.34 L53.10 195.72 L53.40 192.32 L53.70 189.26 L54.00 186.68 L54.30 184.71 L54.60 183.48 L54.90 183.12 L55.20 183.36 L55.50 183.96 L55.80 184.85 L56.10 185.96 L56.40 187.24 L56.70 188.63 L57.00 190.06 L57.30 191.47 L57.60 192.80 L57.90 193.99 L58.20 194.97 L58.50 195.69 L58.80 196.08 L59.10 196.09 L59.40 195.80 L59.70 195.27 L60.00 194.55 L60.30 193.71 L60.60 192.79 L60.90 191.85 L61.20 190.95 L61.50 190.15 L61.80 189.50 L62.10 189.05 L62.40 188.87 L62.70 188.97 L63.00 189.28 L63.30 189.77 L63.60 190.37 L63.90 191.03 L64.20 191.70 L64.50 192.33 L64.80 192.85 L65.10 193.23 L65.40 193.40 L65.70 193.24 L66.00 192.61 L66.30 191.60 L66.60 190.28 L66.90 188.74 L67.20 187.08 L67.50 185.37 L67.80 183.71 L68.10 182.18 L68.40 180.85 L68.70 179.83 L69.00 179.20 L69.30 179.05 L69.60 180.01 L69.90 182.17 L70.20 185.30 L70.50 189.16 L70.80 193.52 L71.10 198.15 L71.40 202.80 L71.70 207.24 L72.00 211.25 L72.30 214.57 L72.60 216.99 L72.90 218.25 L73.20 218.08 L73.50 216.33 L73.80 213.37 L74.10 209.67 L74.40 205.64 L74.70 201.75 L75.00 198.42 L75.30 196.10 L75.60 195.22 L75.90 195.42 L76.20 195.97 L76.50 196.80 L76.80 197.84 L77.10 199.01 L77.40 200.23 L77.70 201.44 L78.00 202.57 L78.30 203.53 L78.60 204.26 L78.90 204.68 L79.20 204.68 L79.50 203.84 L79.80 202.19 L80.10 199.85 L80.40 196.95 L80.70 193.64 L81.00 190.03 L81.30 186.27 L81.60 182.49 L81.90 178.82 L82.20 175.39 L82.50 172.33 L82.80 169.78 L83.10 167.87 L83.40 166.73 L83.70 166.51 L84.00 167.47 L84.30 169.52 L84.60 172.43 L84.90 176.01 L85.20 180.03 L85.50 184.27 L85.80 188.52 L86.10 192.57 L86.40 196.20 L86.70 199.19 L87.00 201.33 L87.30 202.40 L87.60 202.36 L87.90 201.71 L88.20 200.60 L88.50 199.12 L88.80 197.38 L89.10 195.47 L89.40 193.49 L89.70 191.55 L90.00 189.74 L90.30 188.17 L90.60 186.93 L90.90 186.12 L91.20 185.84 L91.50 186.49 L91.80 188.21 L92.10 190.80 L92.40 194.06 L92.70 197.78 L93.00 201.76 L93.30 205.79 L93.60 209.68 L93.90 213.22 L94.20 216.20 L94.50 218.42 L94.80 219.68 L95.10 219.76 L95.40 218.48 L95.70 215.97 L96.00 212.45 L96.30 208.11 L96.60 203.14 L96.90 197.75 L97.20 192.13 L97.50 186.48 L97.80 181.00 L98.10 175.88 L98.40 171.33 L98.70 167.55 L99.00 164.72 L99.30 163.05 L99.60 162.69 L99.90 162.86 L100.20 163.23 L100.50 163.78 L100.80 164.49 L101.10 165.34 L101.40 166.30 L101.70 167.37 L102.00 168.51 L102.30 169.71 L102.60 170.97 L102.90 172.95 L103.20 175.82 L103.50 179.34 L103.80 183.29 L104.10 187.44 L104.40 191.56 L104.70 195.43 L105.00 198.80 L105.30 201.45 L105.60 203.16 L105.90 203.69 L106.20 202.99 L106.50 201.24 L106.80 198.63 L107.10 195.36 L107.40 191.62 L107.70 187.60 L108.00 183.49 L108.30 179.48 L108.60 175.76 L108.90 172.53 L109.20 169.98 L109.50 168.30 L109.80 167.68 L110.10 168.49 L110.40 170.74 L110.70 173.98 L111.00 177.79 L111.30 181.74 L111.60 185.39 L111.90 188.30 L112.20 190.06 L112.50 190.33 L112.80 189.78 L113.10 188.76 L113.40 187.38 L113.70 185.79 L114.00 184.11 L114.30 182.47 L114.60 181.02 L114.90 179.88 L115.20 179.18 L115.50 179.10 L115.80 180.27 L116.10 182.68 L116.40 186.07 L116.70 190.20 L117.00 194.83 L117.30 199.71 L117.60 204.58 L117.90 209.20 L118.20 213.33 L118.50 216.72 L118.80 219.12 L119.10 220.28 L119.40 220.03 L119.70 218.64 L120.00 216.48 L120.30 213.92 L120.60 211.32 L120.90 209.07 L121.20 207.52 L121.50 207.03 L121.80 207.46 L122.10 208.46 L122.40 209.94 L122.70 211.78 L123.00 213.87 L123.30 216.09 L123.60 218.33 L123.90 220.48 L124.20 222.42 L124.50 224.04 L124.80 225.22 L125.10 225.87 L125.40 225.84 L125.70 225.09 L126.00 223.67 L126.30 221.66 L126.60 219.16 L126.90 216.25 L127.20 213.00 L127.50 209.50 L127.80 205.84 L128.10 202.10 L128.40 198.36 L128.70 194.70 L129.00 191.21 L129.30 187.97 L129.60 185.06 L129.90 182.57 L130.20 180.58 L130.50 179.17 L130.80 178.18 L131.10 177.22 L131.40 176.28 L131.70 175.36 L132.00 174.48 L132.30 173.63 L132.60 172.82 L132.90 172.04 L133.20 171.31 L133.50 170.62 L133.80 169.98 L134.10 169.40 L134.40 168.86 L134.70 168.39 L135.00 167.98 L135.30 167.63 L135.60 167.34 L135.90 167.13 L136.20 166.99 L136.50 166.92 L136.80 167.03 L137.10 167.56 L137.40 168.49 L137.70 169.78 L138.00 171.38 L138.30 173.26 L138.60 175.37 L138.90 177.65 L139.20 180.08 L139.50 182.60 L139.80 185.17 L140.10 187.75 L140.40 190.30 L140.70 192.76 L141.00 195.10 L141.30 197.27 L141.60 199.23 L141.90 200.93 L142.20 202.34 L142.50 203.40 L142.80 204.07 L143.10 204.30 L143.40 204.21 L143.70 203.96 L144.00 203.58 L144.30 203.10 L144.60 202.57 L144.90 202.02 L145.20 201.49 L145.50 201.00 L145.80 200.61 L146.10 200.33 L146.40 200.22 L146.70 200.37 L147.00 200.86 L147.30 201.66 L147.60 202.70 L147.90 203.93 L148.20 205.30 L148.50 206.76 L148.80 208.26 L149.10 209.74 L149.40 211.15 L149.70 212.44 L150.00 213.56 L150.30 214.45 L150.60 215.06 L150.90 215.34 L151.20 215.14 L151.50 214.24 L151.80 212.77 L152.10 210.85 L152.40 208.60 L152.70 206.16 L153.00 203.64 L153.30 201.19 L153.60 198.91 L153.90 196.94 L154.20 195.41 L154.50 194.45 L154.80 194.17 L155.10 194.60 L155.40 195.63 L155.70 197.14 L156.00 199.01 L156.30 201.13 L156.60 203.38 L156.90 205.66 L157.20 207.84 L157.50 209.81 L157.80 211.45 L158.10 212.66 L158.40 213.30 L158.70 213.27 L159.00 212.43 L159.30 210.91 L159.60 208.86 L159.90 206.41 L160.20 203.71 L160.50 200.89 L160.80 198.11 L161.10 195.50 L161.40 193.20 L161.70 191.36 L162.00 190.12 L162.30 189.63 L162.60 190.35 L162.90 192.58 L163.20 195.93 L163.50 200.03 L163.80 204.47 L164.10 208.87 L164.40 212.84 L164.70 215.99 L165.00 217.94 L165.30 218.28 L165.60 216.58 L165.90 213.22 L166.20 208.75 L166.50 203.73 L166.80 198.72 L167.10 194.26 L167.40 190.92 L167.70 189.26 L168.00 189.38 L168.30 190.30 L168.60 191.84 L168.90 193.88 L169.20 196.30 L169.50 198.97 L169.80 201.78 L170.10 204.60 L170.40 207.30 L170.70 209.78 L171.00 211.89 L171.30 213.53 L171.60 214.58 L171.90 214.89 L172.20 214.26 L172.50 212.77 L172.80 210.65 L173.10 208.17 L173.40 205.59 L173.70 203.14 L174.00 201.08 L174.30 199.67 L174.60 199.16 L174.90 199.74 L175.20 201.31 L175.50 203.65 L175.80 206.57 L176.10 209.85 L176.40 213.30 L176.70 216.70 L177.00 219.85 L177.30 222.55 L177.60 224.58 L177.90 225.75 L178.20 225.93 L178.50 225.70 L178.80 225.23 L179.10 224.56 L179.40 223.70 L179.70 222.67 L180.00 221.49 L180.30 220.19 L180.60 218.79 L180.90 217.30 L181.20 215.75 L181.50 214.16 L181.80 212.56 L182.10 210.95 L182.40 209.37 L182.70 207.84 L183.00 206.38 L183.30 205.00 L183.60 203.73 L183.90 202.60 L184.20 201.62 L184.50 200.81 L184.80 200.13 L185.10 199.54 L185.40 199.00 L185.70 198.48 L186.00 197.94 L186.30 197.36 L186.60 196.69 L186.90 195.89 L187.20 194.92 L187.50 193.78 L187.80 192.50 L188.10 191.11 L188.40 189.61 L188.70 188.04 L189.00 186.42 L189.30 184.76 L189.60 183.09 L189.90 181.44 L190.20 179.81 L190.50 178.23 L190.80 176.73 L191.10 175.32 L191.40 174.03 L191.70 172.88 L192.00 171.89 L192.30 171.08 L192.60 170.47 L192.90 170.09 L193.20 169.95 L193.50 170.46 L193.80 172.00 L194.10 174.41 L194.40 177.52 L194.70 181.20 L195.00 185.27 L195.30 189.60 L195.60 194.01 L195.90 198.37 L196.20 202.51 L196.50 206.28 L196.80 209.53 L197.10 212.10 L197.40 213.83 L197.70 214.58 L198.00 213.48 L198.30 209.61 L198.60 203.75 L198.90 196.69 L199.20 189.26 L199.50 182.27 L199.80 176.52 L200.10 172.84 L200.40 171.97 L200.70 173.09 L201.00 175.36 L201.30 178.31 L201.60 181.50 L201.90 184.48 L202.20 186.81 L202.50 188.03 L202.80 187.91 L203.10 187.02 L203.40 185.63 L203.70 183.97 L204.00 182.29 L204.30 180.82 L204.60 179.81 L204.90 179.50 L205.20 181.11 L205.50 184.83 L205.80 190.01 L206.10 195.97 L206.40 202.05 L206.70 207.57 L207.00 211.88 L207.30 214.30 L207.60 214.00 L207.90 210.22 L208.20 204.11 L208.50 197.00 L208.80 190.24 L209.10 185.17 L209.40 183.12 L209.70 183.91 L210.00 186.12 L210.30 189.34 L210.60 193.17 L210.90 197.23 L211.20 201.11 L211.50 204.43 L211.80 206.78 L212.10 207.78 L212.40 206.91 L212.70 204.29 L213.00 200.57 L213.30 196.42 L213.60 192.52 L213.90 189.54 L214.20 188.14 L214.50 188.27 L214.80 188.85 L215.10 189.79 L215.40 191.04 L215.70 192.54 L216.00 194.24 L216.30 196.06 L216.60 197.96 L216.90 199.87 L217.20 201.74 L217.50 203.51 L217.80 205.12 L218.10 206.90 L218.40 208.92 L218.70 211.10 L219.00 213.35 L219.30 215.60 L219.60 217.76 L219.90 219.75 L220.20 221.49 L220.50 222.90 L220.80 223.90 L221.10 224.39 L221.40 224.24 L221.70 223.21 L222.00 221.41 L222.30 218.96 L222.60 216.01 L222.90 212.70 L223.20 209.15 L223.50 205.52 L223.80 201.92 L224.10 198.50 L224.40 195.40 L224.70 192.75 L225.00 190.69 L225.30 189.35 L225.60 188.87 L225.90 189.64 L226.20 191.78 L226.50 195.00 L226.80 199.03 L227.10 203.57 L227.40 208.33 L227.70 213.05 L228.00 217.42 L228.30 221.17 L228.60 224.01 L228.90 225.65 L229.20 225.91 L229.50 225.49 L229.80 224.68 L230.10 223.58 L230.40 222.28 L230.70 220.88 L231.00 219.45 L231.30 218.11 L231.60 216.94 L231.90 216.03 L232.20 215.48 L232.50 215.38 L232.80 215.79 L233.10 216.64 L233.40 217.85 L233.70 219.34 L234.00 221.03 L234.30 222.82 L234.60 224.63 L234.90 226.38 L235.20 227.98 L235.50 229.35 L235.80 230.41 L236.10 231.06 L236.40 231.23 L236.70 230.76 L237.00 229.63 L237.30 227.91 L237.60 225.65 L237.90 222.93 L238.20 219.79 L238.50 216.31 L238.80 212.54 L239.10 208.55 L239.40 204.38 L239.70 200.12 L240.00 195.82 L240.30 191.53 L240.60 187.33 L240.90 183.26 L241.20 179.41 L241.50 175.81 L241.80 172.54 L242.10 169.66 L242.40 167.23 L242.70 165.31 L243.00 163.96 L243.30 163.24 L243.60 163.32 L243.90 164.86 L244.20 167.77 L244.50 171.81 L244.80 176.73 L245.10 182.29 L245.40 188.23 L245.70 194.33 L246.00 200.33 L246.30 205.98 L246.60 211.05 L246.90 215.29 L247.20 218.44 L247.50 220.28 L247.80 220.64 L248.10 220.55 L248.40 220.35 L248.70 220.05 L249.00 219.67 L249.30 219.20 L249.60 218.66 L249.90 218.06 L250.20 217.40 L250.50 216.69 L250.80 215.94 L251.10 215.14 L251.40 213.74 L251.70 211.60 L252.00 208.83 L252.30 205.54 L252.60 201.87 L252.90 197.91 L253.20 193.79 L253.50 189.62 L253.80 185.52 L254.10 181.61 L254.40 177.99 L254.70 174.79 L255.00 172.11 L255.30 170.09 L255.60 168.82 L255.90 168.44 L256.20 169.67 L256.50 172.62 L256.80 176.78 L257.10 181.66 L257.40 186.76 L257.70 191.59 L258.00 195.65 L258.30 198.44 L258.60 199.46 L258.90 198.95 L259.20 197.54 L259.50 195.39 L259.80 192.66 L260.10 189.49 L260.40 186.04 L260.70 182.47 L261.00 178.93 L261.30 175.58 L261.60 172.57 L261.90 170.05 L262.20 168.18 L262.50 167.11 L262.80 167.09 L263.10 168.88 L263.40 172.23 L263.70 176.66 L264.00 181.66 L264.30 186.73 L264.60 191.38 L264.90 195.12 L265.20 197.43 L265.50 197.90 L265.80 197.09 L266.10 195.45 L266.40 193.16 L266.70 190.41 L267.00 187.38 L267.30 184.26 L267.60 181.23 L267.90 178.48 L268.20 176.20 L268.50 174.57 L268.80 173.78 L269.10 174.15 L269.40 176.06 L269.70 179.19 L270.00 183.25 L270.30 187.89 L270.60 192.81 L270.90 197.68 L271.20 202.17 L271.50 205.98 L271.80 208.77 L272.10 210.22 L272.40 210.34 L272.70 210.23 L273.00 210.04 L273.30 209.78 L273.60 209.45 L273.90 209.09 L274.20 208.68 L274.50 208.26 L274.80 207.83 L275.10 207.40 L275.40 206.99 L275.70 206.61 L276.00 206.27 L276.30 205.98 L276.60 205.72 L276.90 205.48 L277.20 205.26 L277.50 205.04 L277.80 204.83 L278.10 204.62 L278.40 204.39 L278.70 204.14 L279.00 203.86 L279.30 203.55 L279.60 203.20 L279.90 202.80 L280.20 202.34 L280.50 201.81 L280.80 200.75 L281.10 198.51 L281.40 195.35 L281.70 191.53 L282.00 187.31 L282.30 182.96 L282.60 178.74 L282.90 174.92 L283.20 171.76 L283.50 169.52 L283.80 168.48 L284.10 168.76 L284.40 170.11 L284.70 172.37 L285.00 175.36 L285.30 178.93 L285.60 182.91 L285.90 187.15 L286.20 191.48 L286.50 195.74 L286.80 199.77 L287.10 203.40 L287.40 206.49 L287.70 208.86 L288.00 210.35 L288.30 210.80 L288.60 209.64 L288.90 206.97 L289.20 203.34 L289.50 199.32 L289.80 195.48 L290.10 192.39 L290.40 190.60 L290.70 190.55 L291.00 191.67 L291.30 193.68 L291.60 196.35 L291.90 199.47 L292.20 202.80 L292.50 206.14 L292.80 209.27 L293.10 211.96 L293.40 214.00 L293.70 215.16 L294.00 215.31 L294.30 214.93 L294.60 214.19 L294.90 213.17 L295.20 211.94 L295.50 210.56 L295.80 209.11 L296.10 207.64 L296.40 206.24 L296.70 204.96 L297.00 203.88 L297.30 203.07 L297.60 202.59 L297.90 202.52 L298.20 202.97 L298.50 203.91 L298.80 205.24 L299.10 206.87 L299.40 208.73 L299.70 210.71 L300.00 212.74 L300.30 214.73 L300.60 216.58 L300.90 218.22 L301.20 219.54 L301.50 220.48 L301.80 220.93 L302.10 220.20 L302.40 216.78 L302.70 211.28 L303.00 204.43 L303.30 196.95 L303.60 189.59 L303.90 183.07 L304.20 178.12 L304.50 175.49 L304.80 175.66 L305.10 177.85 L305.40 181.32 L305.70 185.41 L306.00 189.45 L306.30 192.77 L306.60 194.69 L306.90 194.57 L307.20 192.37 L307.50 188.67 L307.80 184.07 L308.10 179.17 L308.40 174.58 L308.70 170.91 L309.00 168.75 L309.30 168.51 L309.60 169.09 L309.90 170.16 L310.20 171.60 L310.50 173.29 L310.80 175.11 L311.10 176.93 L311.40 178.65 L311.70 180.13 L312.00 181.27 L312.30 181.93 L312.60 182.03 L312.90 181.74 L313.20 181.16 L313.50 180.30 L313.80 179.22 L314.10 177.95 L314.40 176.51 L314.70 174.94 L315.00 173.28 L315.30 171.57 L315.60 169.83 L315.90 168.09 L316.20 166.41 L316.50 164.80 L316.80 163.30 L317.10 161.95 L317.40 160.78 L317.70 159.83 L318.00 159.12 L318.30 158.70 L318.60 158.62 L318.90 159.48 L319.20 161.43 L319.50 164.30 L319.80 167.93 L320.10 172.13 L320.40 176.74 L320.70 181.59 L321.00 186.50 L321.30 191.30 L321.60 195.83 L321.90 199.90 L322.20 203.35 L322.50 206.00 L322.80 207.69 L323.10 208.24 L323.40 207.71 L323.70 206.39 L324.00 204.52 L324.30 202.31 L324.60 200.00 L324.90 197.80 L325.20 195.94 L325.50 194.66 L325.80 194.16 L326.10 194.30 L326.40 194.67 L326.70 195.22 L327.00 195.85 L327.30 196.51 L327.60 197.12 L327.90 197.60 L328.20 197.89 L328.50 197.91 L328.80 197.47 L329.10 196.61 L329.40 195.36 L329.70 193.79 L330.00 191.94 L330.30 189.88 L330.60 187.64 L330.90 185.29 L331.20 182.88 L331.50 180.46 L331.80 178.08 L332.10 175.79 L332.40 173.66 L332.70 171.72 L333.00 170.05 L333.30 168.67 L333.60 167.66 L333.90 167.07 L334.20 166.94 L334.50 167.55 L334.80 168.90 L335.10 170.91 L335.40 173.45 L335.70 176.44 L336.00 179.77 L336.30 183.34 L336.60 187.04 L336.90 190.78 L337.20 194.45 L337.50 197.96 L337.80 201.19 L338.10 204.06 L338.40 206.45 L338.70 208.26 L339.00 209.39 L339.30 209.75 L339.60 209.13 L339.90 207.55 L340.20 205.16 L340.50 202.10 L340.80 198.53 L341.10 194.58 L341.40 190.42 L341.70 186.18 L342.00 182.01 L342.30 178.07 L342.60 174.51 L342.90 171.46 L343.20 169.08 L343.50 167.52 L343.80 166.92 L344.10 167.46 L344.40 169.13 L344.70 171.74 L345.00 175.14 L345.30 179.15 L345.60 183.61 L345.90 188.34 L346.20 193.17 L346.50 197.95 L346.80 202.49 L347.10 206.63 L347.40 210.20 L347.70 213.02 L348.00 214.94 L348.30 215.78 L348.60 215.48 L348.90 214.24 L349.20 212.21 L349.50 209.52 L349.80 206.31 L350.10 202.73 L350.40 198.90 L350.70 194.96 L351.00 191.06 L351.30 187.33 L351.60 183.91 L351.90 180.93 L352.20 178.54 L352.50 176.87 L352.80 176.06 L353.10 176.29 L353.40 177.70 L353.70 180.11 L354.00 183.35 L354.30 187.22 L354.60 191.54 L354.90 196.12 L355.20 200.77 L355.50 205.31 L355.80 209.55 L356.10 213.30 L356.40 216.38 L356.70 218.59 L357.00 219.76 L357.30 219.78 L357.60 218.99 L357.90 217.55 L358.20 215.54 L358.50 213.04 L358.80 210.16 L359.10 206.98 L359.40 203.59 L359.70 200.09 L360.00 196.56 L360.30 193.09 L360.60 189.78 L360.90 186.72 L361.20 184.00 L361.50 181.70 L361.80 179.92 L362.10 178.75 L362.40 178.28 L362.70 178.71 L363.00 180.19 L363.30 182.55 L363.60 185.67 L363.90 189.39 L364.20 193.58 L364.50 198.08 L364.80 202.75 L365.10 207.45 L365.40 212.03 L365.70 216.34 L366.00 220.25 L366.30 223.61 L366.60 226.28 L366.90 228.10 L367.20 228.94 L367.50 228.80 L367.80 228.04 L368.10 226.74 L368.40 224.95 L368.70 222.73 L369.00 220.15 L369.30 217.26 L369.60 214.12 L369.90 210.80 L370.20 207.36 L370.50 203.84 L370.80 200.32 L371.10 196.86 L371.40 193.50 L371.70 190.33 L372.00 187.38 L372.30 184.73 L372.60 182.43 L372.90 180.54 L373.20 179.13 L373.50 178.25 L373.80 177.97 L374.10 179.04 L374.40 181.71 L374.70 185.49 L375.00 189.89 L375.30 194.41 L375.60 198.55 L375.90 201.81 L376.20 203.72 L376.50 203.68 L376.80 201.13 L377.10 196.73 L377.40 191.27 L377.70 185.56 L378.00 180.40 L378.30 176.60 L378.60 174.96 L378.90 175.54 L379.20 177.45 L379.50 180.44 L379.80 184.29 L380.10 188.75 L380.40 193.61 L380.70 198.62 L381.00 203.54 L381.30 208.15 L381.60 212.22 L381.90 215.50 L382.20 217.78 L382.50 218.80 L382.80 218.60 L383.10 217.67 L383.40 216.16 L383.70 214.18 L384.00 211.84 L384.30 209.26 L384.60 206.57 L384.90 203.87 L385.20 201.28 L385.50 198.93 L385.80 196.93 L386.10 195.39 L386.40 194.43 L386.70 194.17 L387.00 194.50 L387.30 195.26 L387.60 196.34 L387.90 197.66 L388.20 199.11 L388.50 200.60 L388.80 202.03 L389.10 203.30 L389.40 204.32 L389.70 204.99 L390.00 205.21 L390.30 204.59 L390.60 203.06 L390.90 200.88 L391.20 198.32 L391.50 195.63 L391.80 193.08 L392.10 190.93 L392.40 189.43 L392.70 188.87 L393.00 189.74 L393.30 192.19 L393.60 195.81 L393.90 200.23 L394.20 205.06 L394.50 209.91 L394.80 214.40 L395.10 218.15 L395.40 220.76 L395.70 221.85 L396.00 221.64 L396.30 220.91 L396.60 219.72 L396.90 218.14 L397.20 216.22 L397.50 214.02 L397.80 211.60 L398.10 209.02 L398.40 206.34 L398.70 203.62 L399.00 200.92 L399.30 198.29 L399.60 195.80 L399.90 193.51 L400.20 191.48 L400.50 189.76 L400.80 188.41 L401.10 187.49 L401.40 187.07 L401.70 187.40 L402.00 188.93 L402.30 191.43 L402.60 194.66 L402.90 198.35 L403.20 202.25 L403.50 206.11 L403.80 209.67 L404.10 212.68 L404.40 214.88 L404.70 216.01 L405.00 214.50 L405.30 207.23 L405.60 198.29 L405.90 192.38 L406.20 192.15 L406.50 193.37 L406.80 195.36 L407.10 197.84 L407.40 200.56 L407.70 203.25 L408.00 205.64 L408.30 207.46 L408.60 208.44 L408.90 208.37 L409.20 207.43 L409.50 205.88 L409.80 204.01 L410.10 202.08 L410.40 200.38 L410.70 199.16 L411.00 198.70 L411.30 199.11 L411.60 200.20 L411.90 201.88 L412.20 204.00 L412.50 206.47 L412.80 209.14 L413.10 211.92 L413.40 214.67 L413.70 217.27 L414.00 219.61 L414.30 221.56 L414.60 223.01 L414.90 223.84 L415.20 223.80 L415.50 221.93 L415.80 218.33 L416.10 213.42 L416.40 207.63 L416.70 201.35 L417.00 195.01 L417.30 189.02 L417.60 183.80 L417.90 179.75 L418.20 177.30 L418.50 176.83 L418.80 178.01 L419.10 180.38 L419.40 183.56 L419.70 187.19 L420.00 190.92 L420.30 194.36 L420.60 197.17 L420.90 198.98 L421.20 199.43 L421.50 198.68 L421.80 197.03 L422.10 194.70 L422.40 191.88 L422.70 188.79 L423.00 185.63 L423.30 182.61 L423.60 179.93 L423.90 177.80 L424.20 176.42 L424.50 176.01 L424.80 176.83 L425.10 178.79 L425.40 181.64 L425.70 185.16 L426.00 189.09 L426.30 193.18 L426.60 197.20 L426.90 200.90 L427.20 204.03 L427.50 206.35 L427.80 207.62 L428.10 207.59 L428.40 206.32 L428.70 204.40 L429.00 202.48 L429.30 201.19 L429.60 201.10 L429.90 202.10 L430.20 203.97 L430.50 206.49 L430.80 209.48 L431.10 212.73 L431.40 216.04 L431.70 219.22 L432.00 222.08 L432.30 224.41 L432.60 226.01 L432.90 226.69 L433.20 226.59 L433.50 226.17 L433.80 225.47 L434.10 224.53 L434.40 223.35 L434.70 221.99 L435.00 220.44 L435.30 218.76 L435.60 216.95 L435.90 215.05 L436.20 213.08 L436.50 211.08 L436.80 209.05 L437.10 207.04 L437.40 205.07 L437.70 203.16 L438.00 201.35 L438.30 199.64 L438.60 198.09 L438.90 196.70 L439.20 195.50 L439.50 194.53 L439.80 193.81 L440.10 193.36 L440.40 193.08 L440.70 192.87 L441.00 192.71 L441.30 192.54 L441.60 192.33 L441.90 192.04 L442.20 191.43 L442.50 189.70 L442.80 187.00 L443.10 183.59 L443.40 179.73 L443.70 175.65 L444.00 171.63 L444.30 167.90 L444.60 164.73 L444.90 162.36 L445.20 161.04 L445.50 161.01 L445.80 162.15 L446.10 164.28 L446.40 167.28 L446.70 170.98 L447.00 175.24 L447.30 179.93 L447.60 184.88 L447.90 189.95 L448.20 195.00 L448.50 199.87 L448.80 204.43 L449.10 208.52 L449.40 212.00 L449.70 214.72 L450.00 216.54 L450.30 217.31 L450.60 216.66 L450.90 214.35 L451.20 210.63 L451.50 205.79 L451.80 200.11 L452.10 193.87 L452.40 187.37 L452.70 180.87 L453.00 174.66 L453.30 169.03 L453.60 164.25 L453.90 160.61 L454.20 158.40 L454.50 157.86 L454.80 158.46 L455.10 159.78 L455.40 161.70 L455.70 164.11 L456.00 166.86 L456.30 169.85 L456.60 172.94 L456.90 176.01 L457.20 178.93 L457.50 181.59 L457.80 183.85 L458.10 185.60 L458.40 186.71 L458.70 187.05 L459.00 186.52 L459.30 185.24 L459.60 183.37 L459.90 181.08 L460.20 178.55 L460.50 175.94 L460.80 173.42 L461.10 171.17 L461.40 169.34 L461.70 168.12 L462.00 167.68 L462.30 168.19 L462.60 169.60 L462.90 171.69 L463.20 174.23 L463.50 177.00 L463.80 179.78 L464.10 182.35 L464.40 184.49 L464.70 185.98 L465.00 186.59 L465.30 186.47 L465.60 186.05 L465.90 185.37 L466.20 184.46 L466.50 183.33 L466.80 182.02 L467.10 180.54 L467.40 178.94 L467.70 177.23 L468.00 175.45 L468.30 173.61 L468.60 171.75 L468.90 169.88 L469.20 168.05 L469.50 166.27 L469.80 164.57 L470.10 162.98 L470.40 161.52 L470.70 160.23 L471.00 159.12 L471.30 158.22 L471.60 157.57 L471.90 157.18 L472.20 157.10 L472.50 157.93 L472.80 159.81 L473.10 162.62 L473.40 166.19 L473.70 170.38 L474.00 175.04 L474.30 180.01 L474.60 185.16 L474.90 190.32 L475.20 195.36 L475.50 200.12 L475.80 204.44 L476.10 208.19 L476.40 211.21 L476.70 213.35 L477.00 214.47 L477.30 214.33 L477.60 212.56 L477.90 209.44 L478.20 205.30 L478.50 200.48 L478.80 195.33 L479.10 190.17 L479.40 185.34 L479.70 181.19 L480.00 178.06 L480.30 176.28 L480.60 176.23 L480.90 178.26 L481.20 181.94 L481.50 186.74 L481.80 192.12 L482.10 197.56 L482.40 202.51 L482.70 206.45 L483.00 208.83 L483.30 209.16 L483.60 207.55 L483.90 204.47 L484.20 200.38 L484.50 195.76 L484.80 191.05 L485.10 186.73 L485.40 183.24 L485.70 181.05 L486.00 180.57 L486.30 181.18 L486.60 182.47 L486.90 184.35 L487.20 186.72 L487.50 189.47 L487.80 192.51 L488.10 195.72 L488.40 199.02 L488.70 202.30 L489.00 205.45 L489.30 208.38 L489.60 210.98 L489.90 213.15 L490.20 214.80 L490.50 215.82 L490.80 216.09 L491.10 215.15 L491.40 212.93 L491.70 209.66 L492.00 205.61 L492.30 201.02 L492.60 196.13 L492.90 191.21 L493.20 186.49 L493.50 182.22 L493.80 178.67 L494.10 176.06 L494.40 174.66 L494.70 174.68 L495.00 176.02 L495.30 178.49 L495.60 181.86 L495.90 185.96 L496.20 190.56 L496.50 195.47 L496.80 200.49 L497.10 205.42 L497.40 210.06 L497.70 214.19 L498.00 217.63 L498.30 220.17 L498.60 221.61 L498.90 221.72 L499.20 220.22 L499.50 217.29 L499.80 213.19 L500.10 208.19 L500.40 202.55 L500.70 196.54 L501.00 190.42 L501.30 184.45 L501.60 178.90 L501.90 174.04 L502.20 170.13 L502.50 167.43 L502.80 166.21 L503.10 166.26 L503.40 166.59 L503.70 167.03 L504.00 167.44 L504.30 167.66 L504.60 167.42 L504.90 166.44 L505.20 165.12 L505.50 163.90 L505.80 163.19 L506.10 163.30 L506.40 164.08 L506.70 165.43 L507.00 167.25 L507.30 169.46 L507.60 171.97 L507.90 174.69 L508.20 177.54 L508.50 180.42 L508.80 183.24 L509.10 185.92 L509.40 188.37 L509.70 190.50 L510.00 192.22 L510.30 193.45 L510.60 194.09 L510.90 193.97 L511.20 192.73 L511.50 190.57 L511.80 187.73 L512.10 184.50 L512.40 181.14 L512.70 177.91 L513.00 175.07 L513.30 172.90 L513.60 171.65 L513.90 171.48 L514.20 171.65 L514.50 171.94 L514.80 172.28 L515.10 172.61 L515.40 172.86 L515.70 172.97 L516.00 172.93 L516.30 172.80 L516.60 172.62 L516.90 172.44 L517.20 172.29 L517.50 172.22 L517.80 172.86 L518.10 175.12 L518.40 178.70 L518.70 183.26 L519.00 188.46 L519.30 193.99 L519.60 199.50 L519.90 204.68 L520.20 209.17 L520.50 212.66 L520.80 214.82 L521.10 215.34 L521.40 215.13 L521.70 214.64 L522.00 213.94 L522.30 213.05 L522.60 212.01 L522.90 210.88 L523.20 209.68 L523.50 208.47 L523.80 207.27 L524.10 206.14 L524.40 205.11" stroke="#cbb916" stroke-width="0.8" fill="none" stroke-linejoin="round"/><rect x="380.5" y="144" width="142.5" height="30" fill="#45a845" fill-opacity="0.94" stroke="#b9c2b9" stroke-width="1"/><rect x="424.5" y="147" width="57.5" height="25" fill="#2bc82f" stroke="#dcfadc" stroke-opacity="0.85" stroke-width="0.8" stroke-dasharray="1.5 1.5"/></svg>
<span class="t" style="left:24.30px;top:141.00px;line-height:10px;font-size:7px;color:#10161c;font-weight:bold;transform:scaleX(0.9250);">0.861</span>
<span class="t" style="left:24.30px;top:164.00px;line-height:10px;font-size:7px;color:#10161c;font-weight:bold;transform:scaleX(0.9250);">0.426</span>
<span class="t" style="left:25.74px;top:189.60px;line-height:10px;font-size:7px;color:#10161c;font-weight:bold;transform:scaleX(0.9250);">-0.01</span>
<span class="t" style="left:22.14px;top:215.20px;line-height:10px;font-size:7px;color:#10161c;font-weight:bold;transform:scaleX(0.9250);">-0.446</span>
<span class="t" style="left:22.14px;top:240.30px;line-height:10px;font-size:7px;color:#10161c;font-weight:bold;transform:scaleX(0.9250);">-0.881</span>
<span class="t" style="left:34.00px;top:250.40px;line-height:10px;font-size:7px;color:#10161c;font-weight:bold;transform:scaleX(0.9876);">312.9</span>
<span class="t" style="left:69.07px;top:250.40px;line-height:10px;font-size:7px;color:#10161c;font-weight:bold;transform:scaleX(0.9250);">340</span>
<span class="t" style="left:92.22px;top:250.40px;line-height:10px;font-size:7px;color:#10161c;font-weight:bold;transform:scaleX(0.9250);">360</span>
<span class="t" style="left:115.37px;top:250.40px;line-height:10px;font-size:7px;color:#10161c;font-weight:bold;transform:scaleX(0.9250);">380</span>
<span class="t" style="left:138.52px;top:250.40px;line-height:10px;font-size:7px;color:#10161c;font-weight:bold;transform:scaleX(0.9250);">400</span>
<span class="t" style="left:161.67px;top:250.40px;line-height:10px;font-size:7px;color:#10161c;font-weight:bold;transform:scaleX(0.9250);">420</span>
<span class="t" style="left:184.82px;top:250.40px;line-height:10px;font-size:7px;color:#10161c;font-weight:bold;transform:scaleX(0.9250);">440</span>
<span class="t" style="left:207.97px;top:250.40px;line-height:10px;font-size:7px;color:#10161c;font-weight:bold;transform:scaleX(0.9250);">460</span>
<span class="t" style="left:231.12px;top:250.40px;line-height:10px;font-size:7px;color:#10161c;font-weight:bold;transform:scaleX(0.9250);">480</span>
<span class="t" style="left:254.27px;top:250.40px;line-height:10px;font-size:7px;color:#10161c;font-weight:bold;transform:scaleX(0.9250);">500</span>
<span class="t" style="left:277.42px;top:250.40px;line-height:10px;font-size:7px;color:#10161c;font-weight:bold;transform:scaleX(0.9250);">520</span>
<span class="t" style="left:300.57px;top:250.40px;line-height:10px;font-size:7px;color:#10161c;font-weight:bold;transform:scaleX(0.9250);">540</span>
<span class="t" style="left:323.72px;top:250.40px;line-height:10px;font-size:7px;color:#10161c;font-weight:bold;transform:scaleX(0.9250);">560</span>
<span class="t" style="left:346.87px;top:250.40px;line-height:10px;font-size:7px;color:#10161c;font-weight:bold;transform:scaleX(0.9250);">580</span>
<span class="t" style="left:370.02px;top:250.40px;line-height:10px;font-size:7px;color:#10161c;font-weight:bold;transform:scaleX(0.9250);">600</span>
<span class="t" style="left:393.17px;top:250.40px;line-height:10px;font-size:7px;color:#10161c;font-weight:bold;transform:scaleX(0.9250);">620</span>
<span class="t" style="left:416.32px;top:250.40px;line-height:10px;font-size:7px;color:#10161c;font-weight:bold;transform:scaleX(0.9250);">640</span>
<span class="t" style="left:439.47px;top:250.40px;line-height:10px;font-size:7px;color:#10161c;font-weight:bold;transform:scaleX(0.9250);">660</span>
<span class="t" style="left:462.62px;top:250.40px;line-height:10px;font-size:7px;color:#10161c;font-weight:bold;transform:scaleX(0.9250);">680</span>
<span class="t" style="left:485.77px;top:250.40px;line-height:10px;font-size:7px;color:#10161c;font-weight:bold;transform:scaleX(0.9250);">700</span>
<span class="t" style="left:507.50px;top:250.40px;line-height:10px;font-size:7px;color:#10161c;font-weight:bold;transform:scaleX(0.9876);">728.5</span>
<svg width="1080" height="608" viewBox="0 0 1080 608"><text transform="translate(18.3 76) rotate(-90)" text-anchor="middle" font-size="7.5" font-weight="bold" fill="#10161c" textLength="40" lengthAdjust="spacingAndGlyphs">Inphase i(t)</text></svg>
<svg width="1080" height="608" viewBox="0 0 1080 608"><text transform="translate(18.3 194) rotate(-90)" text-anchor="middle" font-size="7.5" font-weight="bold" fill="#10161c" textLength="54" lengthAdjust="spacingAndGlyphs">Quadrature q(t)</text></svg>
<span class="t" style="left:220.70px;top:258.20px;line-height:11px;font-size:7.5px;color:#10161c;font-weight:bold;transform:scaleX(0.9478);">Transient Recorder Samples</span>
<div style="position:absolute;left:13px;top:270px;width:109.5px;height:27px;background:#e8ecee;box-sizing:border-box;border-right:1px solid #74838f;border-bottom:1px solid #74838f;border-top:1px solid #f2f4f5;"></div>
<svg width="1080" height="608" viewBox="0 0 1080 608"><rect x="19.2" y="277.5" width="12" height="12" rx="1.8" fill="#32b81c"/><text x="25.2" y="287.3" font-size="10" font-weight="bold" text-anchor="middle" fill="#0c0c0c" stroke="#0c0c0c" stroke-width="0.3">A</text></svg>
<span class="t" style="left:33.00px;top:276.90px;line-height:14px;font-size:10px;color:#20262c;transform:scaleX(0.8628);-webkit-text-stroke:0.33px #20262c;">Configure ...</span>
<div style="position:absolute;left:125.6px;top:270px;width:98.1px;height:27px;background:#e8ecee;box-sizing:border-box;border-right:1px solid #74838f;border-bottom:1px solid #74838f;border-top:1px solid #f2f4f5;"></div>
<svg width="1080" height="608" viewBox="0 0 1080 608"><circle cx="143" cy="283.4" r="11" fill="#b5c1cc"/><rect x="138.7" y="279.09999999999997" width="8.6" height="8.6" rx="0.8" fill="#ffffff"/></svg>
<span class="t" style="left:155.60px;top:276.90px;line-height:14px;font-size:10px;color:#20262c;transform:scaleX(0.8332);-webkit-text-stroke:0.33px #20262c;">Stop ...</span>
<div style="position:absolute;left:227px;top:270px;width:95px;height:27px;background:#e8ecee;box-sizing:border-box;border-right:1px solid #74838f;border-bottom:1px solid #74838f;border-top:1px solid #f2f4f5;"></div>
<svg width="1080" height="608" viewBox="0 0 1080 608"><circle cx="244.4" cy="283.4" r="11.1" fill="#1d4e9e" stroke="#f4f6f8" stroke-width="0.5" stroke-opacity="0.8"/><circle cx="245.4" cy="281.59999999999997" r="3.7" fill="none" stroke="#fff" stroke-width="1.4"/><path d="M242.70000000000002 284.4 L239.5 289.0" stroke="#fff" stroke-width="1.4" stroke-linecap="round"/><path d="M243.70000000000002 281.59999999999997 h3.4" stroke="#fff" stroke-width="1.2"/></svg>
<span class="t" style="left:257.50px;top:271.70px;line-height:14px;font-size:10px;color:#20262c;transform:scaleX(0.8998);-webkit-text-stroke:0.33px #20262c;">Zoom</span>
<span class="t" style="left:257.50px;top:283.50px;line-height:14px;font-size:10px;color:#20262c;transform:scaleX(0.8686);-webkit-text-stroke:0.33px #20262c;">Out</span>
<div style="position:absolute;left:325.3px;top:270px;width:95.0px;height:26.69999999999999px;background:#ffffff;"></div>
<span class="t" style="left:330.80px;top:269.40px;line-height:14px;font-size:10.2px;color:#4a545d;transform:scaleX(0.8600);-webkit-text-stroke:0.33px #4a545d;">Unit</span>
<span class="t" style="left:369.40px;top:283.50px;line-height:16px;font-size:11.5px;color:#1c2228;transform:scaleX(0.8692);-webkit-text-stroke:0.33px #1c2228;">TSamples</span>
<svg width="1080" height="608" viewBox="0 0 1080 608"><path d="M415.5 282.6 h4.6 l-2.3 2.6 z" fill="#1c2228"/></svg>
<div style="position:absolute;left:423px;top:270px;width:101px;height:27px;background:#e8ecee;box-sizing:border-box;border-right:1px solid #74838f;border-bottom:1px solid #74838f;border-top:1px solid #f2f4f5;"></div>
<svg width="1080" height="608" viewBox="0 0 1080 608"><circle cx="440.6" cy="283.4" r="11.1" fill="#1d4e9e" stroke="#f4f6f8" stroke-width="0.5"/><circle cx="440.8" cy="280.0" r="3.6" fill="none" stroke="#fff" stroke-width="1.35"/><path d="M438.3 283.4 L435.20000000000005 287.59999999999997" stroke="#fff" stroke-width="1.3" stroke-linecap="round"/><path d="M443.40000000000003 284.79999999999995 h3.1 v3.5 l-1.55 2.1 l-1.55 -2.1 z" fill="none" stroke="#fff" stroke-width="1.3" stroke-linejoin="round"/><path d="M443.40000000000003 288.29999999999995 h3.1 l-1.55 2.1 z" fill="#fff"/></svg>
<span class="t" style="left:453.50px;top:271.70px;line-height:14px;font-size:10px;color:#20262c;transform:scaleX(0.8595);-webkit-text-stroke:0.33px #20262c;">Show</span>
<span class="t" style="left:453.50px;top:283.50px;line-height:14px;font-size:10px;color:#20262c;transform:scaleX(0.8517);-webkit-text-stroke:0.33px #20262c;">Marker</span>
<div style="position:absolute;left:11px;top:299.9px;width:520.3px;height:0.8000000000000114px;background:#939ea8;"></div>
<div style="position:absolute;left:549px;top:0px;width:520px;height:300.6px;background:#c5d0d8;border-left:1.6px solid #d6dee4;box-sizing:border-box;"></div>
<div style="position:absolute;left:549px;top:0px;width:520px;height:24px;background:#6f88a0;border-top:2px solid #9db3c6;box-sizing:border-box;"></div>
<span class="t" style="left:552.00px;top:4.40px;line-height:16px;font-size:11.4px;color:#f2f6f9;transform:scaleX(0.7209);-webkit-text-stroke:0.4px #f2f6f9;">1: Power Spectrum&nbsp; (FFT points = 2048, AVG = 1)</span>
<div style="position:absolute;left:997px;top:0px;width:71px;height:23px;background:#e0e4e6;border-bottom:1px solid #b4bcc3;border-top:1px solid #a9b3bb;box-sizing:border-box;"></div>
<div style="position:absolute;left:1032px;top:0px;width:1px;height:23px;background:#c3cad0;"></div>
<svg width="1080" height="608" viewBox="0 0 1080 608"><rect x="1007" y="15.6" width="15.5" height="2.3" rx="0.5" fill="#222e38"/><path d="M1045.6 7.2 L1055.4 17.1 M1055.4 7.2 L1045.6 17.1" stroke="#27333d" stroke-width="2.3" fill="none"/></svg>
<div style="position:absolute;left:549px;top:299.8px;width:520px;height:1.0px;background:#7d99b0;"></div>
<div style="position:absolute;left:1063px;top:24px;width:6px;height:224px;background:#c5d0d8;border-left:1.5px solid #dbe3e9;box-sizing:border-box;"></div>
<svg width="1080" height="608" viewBox="0 0 1080 608"><rect x="581.25" y="25" width="481.75" height="222" fill="#000"/><path d="M597.28 25 V247 M613.32 25 V247 M629.35 25 V247 M645.38 25 V247 M661.42 25 V247 M677.45 25 V247 M693.48 25 V247 M709.52 25 V247 M725.55 25 V247 M741.58 25 V247 M757.62 25 V247 M773.65 25 V247 M789.68 25 V247 M805.72 25 V247 M821.75 25 V247 M837.78 25 V247 M853.82 25 V247 M869.85 25 V247 M885.88 25 V247 M901.92 25 V247 M917.95 25 V247 M933.98 25 V247 M950.02 25 V247 M966.05 25 V247 M982.08 25 V247 M998.12 25 V247 M1014.15 25 V247 M1030.18 25 V247 M1046.22 25 V247 M582 41.54 H1063 M582 57.27 H1063 M582 73.00 H1063 M582 88.73 H1063 M582 104.46 H1063 M582 120.19 H1063 M582 135.92 H1063 M582 151.65 H1063 M582 167.38 H1063 M582 183.11 H1063 M582 198.84 H1063 M582 214.57 H1063 M582 230.30 H1063 " stroke="#11151a" stroke-width="1" fill="none"/><path d="M597.28 25 V247 M613.32 25 V247 M629.35 25 V247 M645.38 25 V247 M661.42 25 V247 M677.45 25 V247 M693.48 25 V247 M709.52 25 V247 M725.55 25 V247 M741.58 25 V247 M757.62 25 V247 M773.65 25 V247 M789.68 25 V247 M805.72 25 V247 M821.75 25 V247 M837.78 25 V247 M853.82 25 V247 M869.85 25 V247 M885.88 25 V247 M901.92 25 V247 M917.95 25 V247 M933.98 25 V247 M950.02 25 V247 M966.05 25 V247 M982.08 25 V247 M998.12 25 V247 M1014.15 25 V247 M1030.18 25 V247 M1046.22 25 V247 " stroke="#29323b" stroke-width="1" stroke-dasharray="1 1" fill="none"/><path d="M582 41.54 H1063 M582 57.27 H1063 M582 73.00 H1063 M582 88.73 H1063 M582 104.46 H1063 M582 120.19 H1063 M582 135.92 H1063 M582 151.65 H1063 M582 167.38 H1063 M582 183.11 H1063 M582 198.84 H1063 M582 214.57 H1063 M582 230.30 H1063 " stroke="#29323b" stroke-width="1" stroke-dasharray="2 2" fill="none"/><path d="M581.25 224.04 L581.97 219.22 L582.69 228.29 L583.41 223.78 L584.13 215.91 L584.85 220.87 L585.57 232.92 L586.29 217.05 L587.01 233.08 L587.73 233.41 L588.45 220.51 L589.17 222.72 L589.89 220.49 L590.61 219.95 L591.33 218.93 L592.05 214.90 L592.77 224.60 L593.49 223.10 L594.21 225.25 L594.93 228.46 L595.65 227.52 L596.37 220.89 L597.09 222.13 L597.81 214.22 L598.53 223.10 L599.25 227.58 L599.97 231.65 L600.69 217.23 L601.41 213.37 L602.13 220.16 L602.85 218.56 L603.57 226.28 L604.29 228.52 L605.01 225.78 L605.73 231.61 L606.45 220.93 L607.17 234.39 L607.89 238.28 L608.61 240.13 L609.33 216.29 L610.05 220.81 L610.77 220.96 L611.49 222.34 L612.21 216.17 L612.93 229.98 L613.65 219.94 L614.37 219.10 L615.09 226.27 L615.81 210.62 L616.53 232.96 L617.25 221.92 L617.97 217.88 L618.69 222.48 L619.41 221.87 L620.13 236.67 L620.85 228.74 L621.57 229.42 L622.29 228.80 L623.01 220.04 L623.73 235.03 L624.45 224.80 L625.17 220.69 L625.89 218.51 L626.61 220.67 L627.33 222.31 L628.05 222.39 L628.77 223.37 L629.49 221.35 L630.21 219.58 L630.93 218.58 L631.65 213.67 L632.37 213.90 L633.09 225.09 L633.81 222.16 L634.53 223.53 L635.25 225.93 L635.97 225.92 L636.69 234.34 L637.41 210.00 L638.13 224.13 L638.85 224.98 L639.57 219.61 L640.29 221.41 L641.01 227.97 L641.73 210.18 L642.45 223.60 L643.17 222.72 L643.89 226.94 L644.61 220.96 L645.33 222.16 L646.05 228.00 L646.77 237.17 L647.49 206.81 L648.21 223.61 L648.93 221.83 L649.65 214.38 L650.37 208.74 L651.09 225.57 L651.81 217.69 L652.53 221.02 L653.25 216.39 L653.97 228.77 L654.69 217.13 L655.41 223.99 L656.13 223.56 L656.85 214.62 L657.57 216.92 L658.29 215.63 L659.01 217.27 L659.73 221.82 L660.45 221.72 L661.17 223.38 L661.89 205.92 L662.61 217.01 L663.33 212.37 L664.05 221.22 L664.77 217.34 L665.49 213.85 L666.21 222.68 L666.93 221.02 L667.65 213.54 L668.37 95.58 L669.09 88.08 L669.81 96.07 L670.53 107.57 L671.25 94.15 L671.97 82.96 L672.69 92.58 L673.41 93.91 L674.13 99.76 L674.85 101.88 L675.57 96.11 L676.29 92.78 L677.01 88.39 L677.73 101.43 L678.45 96.34 L679.17 97.79 L679.89 97.06 L680.61 99.31 L681.33 90.81 L682.05 96.35 L682.77 103.51 L683.49 105.10 L684.21 97.64 L684.93 95.14 L685.65 98.69 L686.37 90.34 L687.09 104.29 L687.81 94.45 L688.53 95.40 L689.25 90.24 L689.97 80.55 L690.69 82.43 L691.41 93.48 L692.13 97.81 L692.85 93.31 L693.57 93.01 L694.29 93.90 L695.01 87.91 L695.73 92.26 L696.45 80.55 L697.17 86.54 L697.89 100.24 L698.61 90.17 L699.33 88.86 L700.05 88.63 L700.77 92.99 L701.49 89.69 L702.21 103.68 L702.93 95.09 L703.65 81.15 L704.37 87.11 L705.09 94.95 L705.81 87.37 L706.53 96.53 L707.25 86.90 L707.97 88.18 L708.69 87.93 L709.41 91.88 L710.13 91.32 L710.85 95.97 L711.57 84.07 L712.29 97.28 L713.01 98.73 L713.73 96.21 L714.45 93.94 L715.17 84.83 L715.89 86.52 L716.61 90.03 L717.33 97.56 L718.05 87.81 L718.77 93.38 L719.49 96.50 L720.21 102.79 L720.93 84.65 L721.65 88.93 L722.37 83.71 L723.09 87.47 L723.81 93.64 L724.53 88.80 L725.25 89.54 L725.97 87.82 L726.69 85.99 L727.41 94.01 L728.13 102.43 L728.85 88.01 L729.57 96.51 L730.29 99.68 L731.01 93.02 L731.73 89.85 L732.45 92.03 L733.17 85.55 L733.89 97.61 L734.61 100.12 L735.33 100.15 L736.05 80.55 L736.77 93.84 L737.49 94.11 L738.21 99.06 L738.93 99.25 L739.65 99.27 L740.37 93.79 L741.09 89.45 L741.81 99.29 L742.53 99.97 L743.25 96.55 L743.97 84.55 L744.69 86.41 L745.41 98.66 L746.13 109.74 L746.85 92.89 L747.57 99.33 L748.29 84.59 L749.01 96.00 L749.73 93.30 L750.45 96.52 L751.17 98.22 L751.89 92.61 L752.61 92.01 L753.33 106.28 L754.05 93.04 L754.77 83.74 L755.49 90.88 L756.21 92.67 L756.93 95.76 L757.65 100.54 L758.37 98.84 L759.09 91.46 L759.81 88.05 L760.53 86.69 L761.25 86.67 L761.97 105.90 L762.69 89.50 L763.41 80.55 L764.13 88.60 L764.85 87.60 L765.57 90.02 L766.29 98.76 L767.01 91.45 L767.73 85.89 L768.45 98.84 L769.17 92.51 L769.89 95.49 L770.61 99.46 L771.33 91.34 L772.05 95.18 L772.77 89.11 L773.49 95.46 L774.21 85.48 L774.93 92.88 L775.65 93.09 L776.37 91.11 L777.09 95.68 L777.81 80.55 L778.53 96.38 L779.25 93.07 L779.97 85.30 L780.69 99.51 L781.41 86.35 L782.13 105.83 L782.85 101.59 L783.57 90.02 L784.29 80.82 L785.01 89.01 L785.73 95.39 L786.45 88.97 L787.17 93.33 L787.89 84.79 L788.61 95.44 L789.33 90.77 L790.05 87.46 L790.77 96.42 L791.49 86.80 L792.21 92.95 L792.93 88.58 L793.65 90.10 L794.37 93.20 L795.09 85.68 L795.81 97.68 L796.53 89.85 L797.25 93.86 L797.97 91.14 L798.69 88.24 L799.41 88.19 L800.13 91.89 L800.85 88.54 L801.57 105.70 L802.29 88.26 L803.01 91.42 L803.73 92.63 L804.45 107.84 L805.17 91.60 L805.89 87.87 L806.61 102.45 L807.33 90.35 L808.05 90.80 L808.77 84.60 L809.49 95.98 L810.21 110.41 L810.93 90.97 L811.65 85.87 L812.37 96.64 L813.09 92.91 L813.81 84.99 L814.53 86.75 L815.25 89.95 L815.97 98.68 L816.69 85.46 L817.41 85.16 L818.13 94.84 L818.85 92.42 L819.57 88.69 L820.29 93.23 L821.01 91.74 L821.73 96.54 L822.45 90.77 L823.17 92.61 L823.89 91.38 L824.61 94.32 L825.33 96.15 L826.05 96.55 L826.77 92.93 L827.49 91.12 L828.21 96.43 L828.93 96.60 L829.65 80.55 L830.37 91.87 L831.09 87.18 L831.81 89.48 L832.53 88.44 L833.25 99.50 L833.97 91.42 L834.69 86.16 L835.41 98.79 L836.13 94.50 L836.85 89.72 L837.57 84.85 L838.29 91.20 L839.01 101.39 L839.73 89.90 L840.45 90.10 L841.17 93.60 L841.89 99.17 L842.61 84.81 L843.33 86.88 L844.05 90.92 L844.77 90.98 L845.49 95.86 L846.21 94.26 L846.93 113.47 L847.65 93.22 L848.37 83.70 L849.09 94.75 L849.81 80.55 L850.53 93.82 L851.25 108.18 L851.97 86.06 L852.69 103.29 L853.41 106.45 L854.13 90.68 L854.85 92.86 L855.57 86.98 L856.29 88.76 L857.01 83.77 L857.73 91.74 L858.45 100.27 L859.17 105.30 L859.89 85.48 L860.61 101.85 L861.33 90.81 L862.05 81.49 L862.77 94.23 L863.49 90.68 L864.21 91.57 L864.93 96.62 L865.65 91.50 L866.37 97.02 L867.09 100.94 L867.81 85.18 L868.53 85.54 L869.25 99.11 L869.97 86.37 L870.69 92.73 L871.41 89.64 L872.13 95.37 L872.85 87.91 L873.57 91.65 L874.29 82.88 L875.01 87.82 L875.73 89.07 L876.45 91.46 L877.17 93.63 L877.89 87.34 L878.61 80.55 L879.33 100.49 L880.05 84.88 L880.77 90.51 L881.49 105.91 L882.21 95.63 L882.93 95.46 L883.65 91.62 L884.37 88.77 L885.09 92.58 L885.81 92.02 L886.53 90.93 L887.25 88.45 L887.97 94.72 L888.69 93.41 L889.41 100.29 L890.13 95.26 L890.85 94.72 L891.57 98.14 L892.29 88.26 L893.01 94.20 L893.73 102.34 L894.45 87.31 L895.17 89.93 L895.89 96.23 L896.61 101.87 L897.33 88.12 L898.05 105.06 L898.77 92.02 L899.49 90.81 L900.21 94.10 L900.93 95.91 L901.65 92.91 L902.37 90.46 L903.09 94.01 L903.81 89.25 L904.53 93.57 L905.25 98.58 L905.97 93.79 L906.69 86.50 L907.41 97.16 L908.13 91.95 L908.85 96.62 L909.57 91.15 L910.29 95.90 L911.01 98.20 L911.73 93.43 L912.45 103.81 L913.17 104.42 L913.89 82.61 L914.61 90.33 L915.33 100.17 L916.05 95.21 L916.77 97.85 L917.49 95.70 L918.21 93.93 L918.93 92.37 L919.65 91.95 L920.37 83.51 L921.09 90.15 L921.81 87.19 L922.53 95.01 L923.25 91.80 L923.97 95.73 L924.69 90.84 L925.41 94.65 L926.13 92.95 L926.85 89.98 L927.57 93.72 L928.29 93.96 L929.01 102.87 L929.73 106.59 L930.45 92.12 L931.17 97.26 L931.89 105.17 L932.61 86.46 L933.33 82.97 L934.05 88.79 L934.77 87.72 L935.49 93.35 L936.21 92.45 L936.93 85.98 L937.65 81.85 L938.37 88.10 L939.09 84.40 L939.81 96.23 L940.53 96.75 L941.25 102.80 L941.97 98.31 L942.69 96.60 L943.41 96.83 L944.13 85.61 L944.85 93.25 L945.57 96.03 L946.29 102.77 L947.01 93.00 L947.73 84.96 L948.45 100.26 L949.17 96.90 L949.89 97.19 L950.61 96.72 L951.33 90.15 L952.05 94.64 L952.77 94.42 L953.49 90.76 L954.21 99.17 L954.93 96.50 L955.65 95.75 L956.37 92.35 L957.09 91.36 L957.81 90.83 L958.53 91.70 L959.25 108.08 L959.97 97.55 L960.69 94.77 L961.41 84.56 L962.13 96.26 L962.85 86.30 L963.57 90.97 L964.29 92.94 L965.01 89.39 L965.73 90.52 L966.45 89.96 L967.17 99.17 L967.89 100.66 L968.61 93.36 L969.33 91.17 L970.05 92.95 L970.77 93.43 L971.49 101.66 L972.21 90.86 L972.93 97.02 L973.65 90.36 L974.37 222.61 L975.09 229.94 L975.81 224.86 L976.53 220.74 L977.25 219.37 L977.97 209.53 L978.69 217.70 L979.41 219.26 L980.13 219.08 L980.85 233.63 L981.57 214.40 L982.29 222.34 L983.01 225.09 L983.73 225.58 L984.45 230.32 L985.17 216.21 L985.89 227.83 L986.61 214.62 L987.33 216.42 L988.05 209.97 L988.77 217.60 L989.49 217.34 L990.21 227.14 L990.93 215.62 L991.65 224.98 L992.37 225.75 L993.09 223.54 L993.81 221.72 L994.53 220.63 L995.25 223.90 L995.97 219.62 L996.69 223.46 L997.41 210.51 L998.13 219.82 L998.85 218.40 L999.57 230.36 L1000.29 213.79 L1001.01 216.33 L1001.73 223.58 L1002.45 221.84 L1003.17 223.72 L1003.89 228.32 L1004.61 234.72 L1005.33 232.91 L1006.05 232.42 L1006.77 218.22 L1007.49 226.71 L1008.21 223.47 L1008.93 229.00 L1009.65 225.92 L1010.37 221.85 L1011.09 222.52 L1011.81 221.27 L1012.53 226.28 L1013.25 220.03 L1013.97 226.69 L1014.69 220.29 L1015.41 212.92 L1016.13 224.13 L1016.85 224.39 L1017.57 220.40 L1018.29 231.05 L1019.01 232.87 L1019.73 214.30 L1020.45 218.21 L1021.17 221.76 L1021.89 228.58 L1022.61 222.48 L1023.33 229.95 L1024.05 220.55 L1024.77 225.97 L1025.49 227.07 L1026.21 217.32 L1026.93 230.16 L1027.65 232.49 L1028.37 218.37 L1029.09 235.15 L1029.81 219.34 L1030.53 225.55 L1031.25 213.14 L1031.97 219.79 L1032.69 218.49 L1033.41 219.46 L1034.13 217.68 L1034.85 222.82 L1035.57 225.32 L1036.29 235.93 L1037.01 210.42 L1037.73 226.25 L1038.45 220.78 L1039.17 230.81 L1039.89 216.43 L1040.61 225.01 L1041.33 229.39 L1042.05 217.05 L1042.77 215.78 L1043.49 216.85 L1044.21 226.08 L1044.93 226.42 L1045.65 220.28 L1046.37 220.97 L1047.09 232.09 L1047.81 226.79 L1048.53 227.81 L1049.25 217.07 L1049.97 218.65 L1050.69 225.71 L1051.41 225.91 L1052.13 227.10 L1052.85 226.90 L1053.57 218.69 L1054.29 214.06 L1055.01 244.46 L1055.73 221.35 L1056.45 219.47 L1057.17 237.09 L1057.89 229.44 L1058.61 225.98 L1059.33 230.01 L1060.05 231.51 L1060.77 218.34 L1061.49 223.82 L1062.21 222.18 L1062.93 225.64" stroke="#6a5c00" stroke-width="1.35" fill="none" stroke-linejoin="round" stroke-opacity="0.65"/><path d="M581.25 224.04 L581.97 219.22 L582.69 228.29 L583.41 223.78 L584.13 215.91 L584.85 220.87 L585.57 232.92 L586.29 217.05 L587.01 233.08 L587.73 233.41 L588.45 220.51 L589.17 222.72 L589.89 220.49 L590.61 219.95 L591.33 218.93 L592.05 214.90 L592.77 224.60 L593.49 223.10 L594.21 225.25 L594.93 228.46 L595.65 227.52 L596.37 220.89 L597.09 222.13 L597.81 214.22 L598.53 223.10 L599.25 227.58 L599.97 231.65 L600.69 217.23 L601.41 213.37 L602.13 220.16 L602.85 218.56 L603.57 226.28 L604.29 228.52 L605.01 225.78 L605.73 231.61 L606.45 220.93 L607.17 234.39 L607.89 238.28 L608.61 240.13 L609.33 216.29 L610.05 220.81 L610.77 220.96 L611.49 222.34 L612.21 216.17 L612.93 229.98 L613.65 219.94 L614.37 219.10 L615.09 226.27 L615.81 210.62 L616.53 232.96 L617.25 221.92 L617.97 217.88 L618.69 222.48 L619.41 221.87 L620.13 236.67 L620.85 228.74 L621.57 229.42 L622.29 228.80 L623.01 220.04 L623.73 235.03 L624.45 224.80 L625.17 220.69 L625.89 218.51 L626.61 220.67 L627.33 222.31 L628.05 222.39 L628.77 223.37 L629.49 221.35 L630.21 219.58 L630.93 218.58 L631.65 213.67 L632.37 213.90 L633.09 225.09 L633.81 222.16 L634.53 223.53 L635.25 225.93 L635.97 225.92 L636.69 234.34 L637.41 210.00 L638.13 224.13 L638.85 224.98 L639.57 219.61 L640.29 221.41 L641.01 227.97 L641.73 210.18 L642.45 223.60 L643.17 222.72 L643.89 226.94 L644.61 220.96 L645.33 222.16 L646.05 228.00 L646.77 237.17 L647.49 206.81 L648.21 223.61 L648.93 221.83 L649.65 214.38 L650.37 208.74 L651.09 225.57 L651.81 217.69 L652.53 221.02 L653.25 216.39 L653.97 228.77 L654.69 217.13 L655.41 223.99 L656.13 223.56 L656.85 214.62 L657.57 216.92 L658.29 215.63 L659.01 217.27 L659.73 221.82 L660.45 221.72 L661.17 223.38 L661.89 205.92 L662.61 217.01 L663.33 212.37 L664.05 221.22 L664.77 217.34 L665.49 213.85 L666.21 222.68 L666.93 221.02 L667.65 213.54 L668.37 95.58 L669.09 88.08 L669.81 96.07 L670.53 107.57 L671.25 94.15 L671.97 82.96 L672.69 92.58 L673.41 93.91 L674.13 99.76 L674.85 101.88 L675.57 96.11 L676.29 92.78 L677.01 88.39 L677.73 101.43 L678.45 96.34 L679.17 97.79 L679.89 97.06 L680.61 99.31 L681.33 90.81 L682.05 96.35 L682.77 103.51 L683.49 105.10 L684.21 97.64 L684.93 95.14 L685.65 98.69 L686.37 90.34 L687.09 104.29 L687.81 94.45 L688.53 95.40 L689.25 90.24 L689.97 80.55 L690.69 82.43 L691.41 93.48 L692.13 97.81 L692.85 93.31 L693.57 93.01 L694.29 93.90 L695.01 87.91 L695.73 92.26 L696.45 80.55 L697.17 86.54 L697.89 100.24 L698.61 90.17 L699.33 88.86 L700.05 88.63 L700.77 92.99 L701.49 89.69 L702.21 103.68 L702.93 95.09 L703.65 81.15 L704.37 87.11 L705.09 94.95 L705.81 87.37 L706.53 96.53 L707.25 86.90 L707.97 88.18 L708.69 87.93 L709.41 91.88 L710.13 91.32 L710.85 95.97 L711.57 84.07 L712.29 97.28 L713.01 98.73 L713.73 96.21 L714.45 93.94 L715.17 84.83 L715.89 86.52 L716.61 90.03 L717.33 97.56 L718.05 87.81 L718.77 93.38 L719.49 96.50 L720.21 102.79 L720.93 84.65 L721.65 88.93 L722.37 83.71 L723.09 87.47 L723.81 93.64 L724.53 88.80 L725.25 89.54 L725.97 87.82 L726.69 85.99 L727.41 94.01 L728.13 102.43 L728.85 88.01 L729.57 96.51 L730.29 99.68 L731.01 93.02 L731.73 89.85 L732.45 92.03 L733.17 85.55 L733.89 97.61 L734.61 100.12 L735.33 100.15 L736.05 80.55 L736.77 93.84 L737.49 94.11 L738.21 99.06 L738.93 99.25 L739.65 99.27 L740.37 93.79 L741.09 89.45 L741.81 99.29 L742.53 99.97 L743.25 96.55 L743.97 84.55 L744.69 86.41 L745.41 98.66 L746.13 109.74 L746.85 92.89 L747.57 99.33 L748.29 84.59 L749.01 96.00 L749.73 93.30 L750.45 96.52 L751.17 98.22 L751.89 92.61 L752.61 92.01 L753.33 106.28 L754.05 93.04 L754.77 83.74 L755.49 90.88 L756.21 92.67 L756.93 95.76 L757.65 100.54 L758.37 98.84 L759.09 91.46 L759.81 88.05 L760.53 86.69 L761.25 86.67 L761.97 105.90 L762.69 89.50 L763.41 80.55 L764.13 88.60 L764.85 87.60 L765.57 90.02 L766.29 98.76 L767.01 91.45 L767.73 85.89 L768.45 98.84 L769.17 92.51 L769.89 95.49 L770.61 99.46 L771.33 91.34 L772.05 95.18 L772.77 89.11 L773.49 95.46 L774.21 85.48 L774.93 92.88 L775.65 93.09 L776.37 91.11 L777.09 95.68 L777.81 80.55 L778.53 96.38 L779.25 93.07 L779.97 85.30 L780.69 99.51 L781.41 86.35 L782.13 105.83 L782.85 101.59 L783.57 90.02 L784.29 80.82 L785.01 89.01 L785.73 95.39 L786.45 88.97 L787.17 93.33 L787.89 84.79 L788.61 95.44 L789.33 90.77 L790.05 87.46 L790.77 96.42 L791.49 86.80 L792.21 92.95 L792.93 88.58 L793.65 90.10 L794.37 93.20 L795.09 85.68 L795.81 97.68 L796.53 89.85 L797.25 93.86 L797.97 91.14 L798.69 88.24 L799.41 88.19 L800.13 91.89 L800.85 88.54 L801.57 105.70 L802.29 88.26 L803.01 91.42 L803.73 92.63 L804.45 107.84 L805.17 91.60 L805.89 87.87 L806.61 102.45 L807.33 90.35 L808.05 90.80 L808.77 84.60 L809.49 95.98 L810.21 110.41 L810.93 90.97 L811.65 85.87 L812.37 96.64 L813.09 92.91 L813.81 84.99 L814.53 86.75 L815.25 89.95 L815.97 98.68 L816.69 85.46 L817.41 85.16 L818.13 94.84 L818.85 92.42 L819.57 88.69 L820.29 93.23 L821.01 91.74 L821.73 96.54 L822.45 90.77 L823.17 92.61 L823.89 91.38 L824.61 94.32 L825.33 96.15 L826.05 96.55 L826.77 92.93 L827.49 91.12 L828.21 96.43 L828.93 96.60 L829.65 80.55 L830.37 91.87 L831.09 87.18 L831.81 89.48 L832.53 88.44 L833.25 99.50 L833.97 91.42 L834.69 86.16 L835.41 98.79 L836.13 94.50 L836.85 89.72 L837.57 84.85 L838.29 91.20 L839.01 101.39 L839.73 89.90 L840.45 90.10 L841.17 93.60 L841.89 99.17 L842.61 84.81 L843.33 86.88 L844.05 90.92 L844.77 90.98 L845.49 95.86 L846.21 94.26 L846.93 113.47 L847.65 93.22 L848.37 83.70 L849.09 94.75 L849.81 80.55 L850.53 93.82 L851.25 108.18 L851.97 86.06 L852.69 103.29 L853.41 106.45 L854.13 90.68 L854.85 92.86 L855.57 86.98 L856.29 88.76 L857.01 83.77 L857.73 91.74 L858.45 100.27 L859.17 105.30 L859.89 85.48 L860.61 101.85 L861.33 90.81 L862.05 81.49 L862.77 94.23 L863.49 90.68 L864.21 91.57 L864.93 96.62 L865.65 91.50 L866.37 97.02 L867.09 100.94 L867.81 85.18 L868.53 85.54 L869.25 99.11 L869.97 86.37 L870.69 92.73 L871.41 89.64 L872.13 95.37 L872.85 87.91 L873.57 91.65 L874.29 82.88 L875.01 87.82 L875.73 89.07 L876.45 91.46 L877.17 93.63 L877.89 87.34 L878.61 80.55 L879.33 100.49 L880.05 84.88 L880.77 90.51 L881.49 105.91 L882.21 95.63 L882.93 95.46 L883.65 91.62 L884.37 88.77 L885.09 92.58 L885.81 92.02 L886.53 90.93 L887.25 88.45 L887.97 94.72 L888.69 93.41 L889.41 100.29 L890.13 95.26 L890.85 94.72 L891.57 98.14 L892.29 88.26 L893.01 94.20 L893.73 102.34 L894.45 87.31 L895.17 89.93 L895.89 96.23 L896.61 101.87 L897.33 88.12 L898.05 105.06 L898.77 92.02 L899.49 90.81 L900.21 94.10 L900.93 95.91 L901.65 92.91 L902.37 90.46 L903.09 94.01 L903.81 89.25 L904.53 93.57 L905.25 98.58 L905.97 93.79 L906.69 86.50 L907.41 97.16 L908.13 91.95 L908.85 96.62 L909.57 91.15 L910.29 95.90 L911.01 98.20 L911.73 93.43 L912.45 103.81 L913.17 104.42 L913.89 82.61 L914.61 90.33 L915.33 100.17 L916.05 95.21 L916.77 97.85 L917.49 95.70 L918.21 93.93 L918.93 92.37 L919.65 91.95 L920.37 83.51 L921.09 90.15 L921.81 87.19 L922.53 95.01 L923.25 91.80 L923.97 95.73 L924.69 90.84 L925.41 94.65 L926.13 92.95 L926.85 89.98 L927.57 93.72 L928.29 93.96 L929.01 102.87 L929.73 106.59 L930.45 92.12 L931.17 97.26 L931.89 105.17 L932.61 86.46 L933.33 82.97 L934.05 88.79 L934.77 87.72 L935.49 93.35 L936.21 92.45 L936.93 85.98 L937.65 81.85 L938.37 88.10 L939.09 84.40 L939.81 96.23 L940.53 96.75 L941.25 102.80 L941.97 98.31 L942.69 96.60 L943.41 96.83 L944.13 85.61 L944.85 93.25 L945.57 96.03 L946.29 102.77 L947.01 93.00 L947.73 84.96 L948.45 100.26 L949.17 96.90 L949.89 97.19 L950.61 96.72 L951.33 90.15 L952.05 94.64 L952.77 94.42 L953.49 90.76 L954.21 99.17 L954.93 96.50 L955.65 95.75 L956.37 92.35 L957.09 91.36 L957.81 90.83 L958.53 91.70 L959.25 108.08 L959.97 97.55 L960.69 94.77 L961.41 84.56 L962.13 96.26 L962.85 86.30 L963.57 90.97 L964.29 92.94 L965.01 89.39 L965.73 90.52 L966.45 89.96 L967.17 99.17 L967.89 100.66 L968.61 93.36 L969.33 91.17 L970.05 92.95 L970.77 93.43 L971.49 101.66 L972.21 90.86 L972.93 97.02 L973.65 90.36 L974.37 222.61 L975.09 229.94 L975.81 224.86 L976.53 220.74 L977.25 219.37 L977.97 209.53 L978.69 217.70 L979.41 219.26 L980.13 219.08 L980.85 233.63 L981.57 214.40 L982.29 222.34 L983.01 225.09 L983.73 225.58 L984.45 230.32 L985.17 216.21 L985.89 227.83 L986.61 214.62 L987.33 216.42 L988.05 209.97 L988.77 217.60 L989.49 217.34 L990.21 227.14 L990.93 215.62 L991.65 224.98 L992.37 225.75 L993.09 223.54 L993.81 221.72 L994.53 220.63 L995.25 223.90 L995.97 219.62 L996.69 223.46 L997.41 210.51 L998.13 219.82 L998.85 218.40 L999.57 230.36 L1000.29 213.79 L1001.01 216.33 L1001.73 223.58 L1002.45 221.84 L1003.17 223.72 L1003.89 228.32 L1004.61 234.72 L1005.33 232.91 L1006.05 232.42 L1006.77 218.22 L1007.49 226.71 L1008.21 223.47 L1008.93 229.00 L1009.65 225.92 L1010.37 221.85 L1011.09 222.52 L1011.81 221.27 L1012.53 226.28 L1013.25 220.03 L1013.97 226.69 L1014.69 220.29 L1015.41 212.92 L1016.13 224.13 L1016.85 224.39 L1017.57 220.40 L1018.29 231.05 L1019.01 232.87 L1019.73 214.30 L1020.45 218.21 L1021.17 221.76 L1021.89 228.58 L1022.61 222.48 L1023.33 229.95 L1024.05 220.55 L1024.77 225.97 L1025.49 227.07 L1026.21 217.32 L1026.93 230.16 L1027.65 232.49 L1028.37 218.37 L1029.09 235.15 L1029.81 219.34 L1030.53 225.55 L1031.25 213.14 L1031.97 219.79 L1032.69 218.49 L1033.41 219.46 L1034.13 217.68 L1034.85 222.82 L1035.57 225.32 L1036.29 235.93 L1037.01 210.42 L1037.73 226.25 L1038.45 220.78 L1039.17 230.81 L1039.89 216.43 L1040.61 225.01 L1041.33 229.39 L1042.05 217.05 L1042.77 215.78 L1043.49 216.85 L1044.21 226.08 L1044.93 226.42 L1045.65 220.28 L1046.37 220.97 L1047.09 232.09 L1047.81 226.79 L1048.53 227.81 L1049.25 217.07 L1049.97 218.65 L1050.69 225.71 L1051.41 225.91 L1052.13 227.10 L1052.85 226.90 L1053.57 218.69 L1054.29 214.06 L1055.01 244.46 L1055.73 221.35 L1056.45 219.47 L1057.17 237.09 L1057.89 229.44 L1058.61 225.98 L1059.33 230.01 L1060.05 231.51 L1060.77 218.34 L1061.49 223.82 L1062.21 222.18 L1062.93 225.64" stroke="#e4d61e" stroke-width="0.85" fill="none" stroke-linejoin="round"/></svg>
<span class="t" style="left:569.60px;top:24.30px;line-height:10px;font-size:7px;color:#10161c;font-weight:bold;transform:scaleX(0.9250);">30</span>
<span class="t" style="left:569.60px;top:36.84px;line-height:10px;font-size:7px;color:#10161c;font-weight:bold;transform:scaleX(0.9250);">20</span>
<span class="t" style="left:569.60px;top:52.57px;line-height:10px;font-size:7px;color:#10161c;font-weight:bold;transform:scaleX(0.9250);">10</span>
<span class="t" style="left:573.20px;top:68.30px;line-height:10px;font-size:7px;color:#10161c;font-weight:bold;transform:scaleX(0.9250);">0</span>
<span class="t" style="left:567.44px;top:84.03px;line-height:10px;font-size:7px;color:#10161c;font-weight:bold;transform:scaleX(0.9250);">-10</span>
<span class="t" style="left:567.44px;top:99.76px;line-height:10px;font-size:7px;color:#10161c;font-weight:bold;transform:scaleX(0.9250);">-20</span>
<span class="t" style="left:567.44px;top:115.49px;line-height:10px;font-size:7px;color:#10161c;font-weight:bold;transform:scaleX(0.9250);">-30</span>
<span class="t" style="left:567.44px;top:131.22px;line-height:10px;font-size:7px;color:#10161c;font-weight:bold;transform:scaleX(0.9250);">-40</span>
<span class="t" style="left:567.44px;top:146.95px;line-height:10px;font-size:7px;color:#10161c;font-weight:bold;transform:scaleX(0.9250);">-50</span>
<span class="t" style="left:567.44px;top:162.68px;line-height:10px;font-size:7px;color:#10161c;font-weight:bold;transform:scaleX(0.9250);">-60</span>
<span class="t" style="left:567.44px;top:178.41px;line-height:10px;font-size:7px;color:#10161c;font-weight:bold;transform:scaleX(0.9250);">-70</span>
<span class="t" style="left:567.44px;top:194.14px;line-height:10px;font-size:7px;color:#10161c;font-weight:bold;transform:scaleX(0.9250);">-80</span>
<span class="t" style="left:567.44px;top:209.87px;line-height:10px;font-size:7px;color:#10161c;font-weight:bold;transform:scaleX(0.9250);">-90</span>
<span class="t" style="left:563.84px;top:225.60px;line-height:10px;font-size:7px;color:#10161c;font-weight:bold;transform:scaleX(0.9250);">-100</span>
<span class="t" style="left:564.20px;top:240.60px;line-height:10px;font-size:7px;color:#10161c;font-weight:bold;transform:scaleX(0.9250);">-110</span>
<span class="t" style="left:575.02px;top:250.80px;line-height:10px;font-size:7px;color:#10161c;font-weight:bold;transform:scaleX(0.9250);">-300</span>
<span class="t" style="left:590.80px;top:250.80px;line-height:10px;font-size:7px;color:#10161c;font-weight:bold;transform:scaleX(0.9250);">-280</span>
<span class="t" style="left:606.84px;top:250.80px;line-height:10px;font-size:7px;color:#10161c;font-weight:bold;transform:scaleX(0.9250);">-260</span>
<span class="t" style="left:622.87px;top:250.80px;line-height:10px;font-size:7px;color:#10161c;font-weight:bold;transform:scaleX(0.9250);">-240</span>
<span class="t" style="left:638.90px;top:250.80px;line-height:10px;font-size:7px;color:#10161c;font-weight:bold;transform:scaleX(0.9250);">-220</span>
<span class="t" style="left:654.94px;top:250.80px;line-height:10px;font-size:7px;color:#10161c;font-weight:bold;transform:scaleX(0.9250);">-200</span>
<span class="t" style="left:670.97px;top:250.80px;line-height:10px;font-size:7px;color:#10161c;font-weight:bold;transform:scaleX(0.9250);">-180</span>
<span class="t" style="left:687.00px;top:250.80px;line-height:10px;font-size:7px;color:#10161c;font-weight:bold;transform:scaleX(0.9250);">-160</span>
<span class="t" style="left:703.04px;top:250.80px;line-height:10px;font-size:7px;color:#10161c;font-weight:bold;transform:scaleX(0.9250);">-140</span>
<span class="t" style="left:719.07px;top:250.80px;line-height:10px;font-size:7px;color:#10161c;font-weight:bold;transform:scaleX(0.9250);">-120</span>
<span class="t" style="left:735.10px;top:250.80px;line-height:10px;font-size:7px;color:#10161c;font-weight:bold;transform:scaleX(0.9250);">-100</span>
<span class="t" style="left:752.94px;top:250.80px;line-height:10px;font-size:7px;color:#10161c;font-weight:bold;transform:scaleX(0.9250);">-80</span>
<span class="t" style="left:768.97px;top:250.80px;line-height:10px;font-size:7px;color:#10161c;font-weight:bold;transform:scaleX(0.9250);">-60</span>
<span class="t" style="left:785.00px;top:250.80px;line-height:10px;font-size:7px;color:#10161c;font-weight:bold;transform:scaleX(0.9250);">-40</span>
<span class="t" style="left:801.04px;top:250.80px;line-height:10px;font-size:7px;color:#10161c;font-weight:bold;transform:scaleX(0.9250);">-20</span>
<span class="t" style="left:819.95px;top:250.80px;line-height:10px;font-size:7px;color:#10161c;font-weight:bold;transform:scaleX(0.9250);">0</span>
<span class="t" style="left:834.18px;top:250.80px;line-height:10px;font-size:7px;color:#10161c;font-weight:bold;transform:scaleX(0.9250);">20</span>
<span class="t" style="left:850.22px;top:250.80px;line-height:10px;font-size:7px;color:#10161c;font-weight:bold;transform:scaleX(0.9250);">40</span>
<span class="t" style="left:866.25px;top:250.80px;line-height:10px;font-size:7px;color:#10161c;font-weight:bold;transform:scaleX(0.9250);">60</span>
<span class="t" style="left:882.28px;top:250.80px;line-height:10px;font-size:7px;color:#10161c;font-weight:bold;transform:scaleX(0.9250);">80</span>
<span class="t" style="left:896.52px;top:250.80px;line-height:10px;font-size:7px;color:#10161c;font-weight:bold;transform:scaleX(0.9250);">100</span>
<span class="t" style="left:912.55px;top:250.80px;line-height:10px;font-size:7px;color:#10161c;font-weight:bold;transform:scaleX(0.9250);">120</span>
<span class="t" style="left:928.58px;top:250.80px;line-height:10px;font-size:7px;color:#10161c;font-weight:bold;transform:scaleX(0.9250);">140</span>
<span class="t" style="left:944.62px;top:250.80px;line-height:10px;font-size:7px;color:#10161c;font-weight:bold;transform:scaleX(0.9250);">160</span>
<span class="t" style="left:960.65px;top:250.80px;line-height:10px;font-size:7px;color:#10161c;font-weight:bold;transform:scaleX(0.9250);">180</span>
<span class="t" style="left:976.68px;top:250.80px;line-height:10px;font-size:7px;color:#10161c;font-weight:bold;transform:scaleX(0.9250);">200</span>
<span class="t" style="left:992.72px;top:250.80px;line-height:10px;font-size:7px;color:#10161c;font-weight:bold;transform:scaleX(0.9250);">220</span>
<span class="t" style="left:1008.75px;top:250.80px;line-height:10px;font-size:7px;color:#10161c;font-weight:bold;transform:scaleX(0.9250);">240</span>
<span class="t" style="left:1024.78px;top:250.80px;line-height:10px;font-size:7px;color:#10161c;font-weight:bold;transform:scaleX(0.9250);">260</span>
<span class="t" style="left:1051.90px;top:250.80px;line-height:10px;font-size:7px;color:#10161c;font-weight:bold;transform:scaleX(0.9250);">300</span>
<span class="t" style="left:800.00px;top:258.70px;line-height:11px;font-size:7.5px;color:#10161c;font-weight:bold;transform:scaleX(1.1089);">(f-fc) / MHz</span>
<svg width="1080" height="608" viewBox="0 0 1080 608"><text transform="translate(561.3 136) rotate(-90)" text-anchor="middle" font-size="7.5" font-weight="bold" fill="#10161c" textLength="90" lengthAdjust="spacingAndGlyphs">Power Distribution / dB/Hz</text></svg>
<span class="t" style="left:581.80px;top:24.80px;line-height:10px;font-size:6.6px;color:#c4c8cc;transform:scaleX(0.9436);">Avg. Power/dB: -13.71</span>
<div style="position:absolute;left:551px;top:269px;width:112.70000000000005px;height:29.30000000000001px;background:#e8ecee;box-sizing:border-box;border:1.6px solid #f4a21f;box-shadow:inset -1px -1px 0 #74838f;"></div>
<svg width="1080" height="608" viewBox="0 0 1080 608"><rect x="558.3" y="277.5" width="12" height="12" rx="1.8" fill="#f23b3b"/><text x="564.3" y="287.3" font-size="10" font-weight="bold" text-anchor="middle" fill="#0c0c0c" stroke="#0c0c0c" stroke-width="0.3">A</text></svg>
<span class="t" style="left:571.80px;top:276.90px;line-height:14px;font-size:10px;color:#20262c;transform:scaleX(0.8628);-webkit-text-stroke:0.33px #20262c;">Configure ...</span>
<div style="position:absolute;left:666px;top:270.2px;width:98.29999999999995px;height:27.100000000000023px;background:#e8ecee;box-sizing:border-box;border-right:1px solid #74838f;border-bottom:1px solid #74838f;border-top:1px solid #f2f4f5;"></div>
<svg width="1080" height="608" viewBox="0 0 1080 608"><circle cx="682.5" cy="283.4" r="11" fill="#b5c1cc"/><rect x="678.2" y="279.09999999999997" width="8.6" height="8.6" rx="0.8" fill="#ffffff"/></svg>
<span class="t" style="left:695.00px;top:276.90px;line-height:14px;font-size:10px;color:#20262c;transform:scaleX(0.8458);-webkit-text-stroke:0.33px #20262c;">Stop ...</span>
<div style="position:absolute;left:768px;top:270.2px;width:96.5px;height:27.100000000000023px;background:#cdd7df;box-sizing:border-box;border-right:1px solid #74838f;border-bottom:1px solid #74838f;border-top:1px solid #f2f4f5;"></div>
<svg width="1080" height="608" viewBox="0 0 1080 608"><circle cx="785" cy="283.4" r="11.1" fill="#91a9d4" stroke="#f4f6f8" stroke-width="0.5" stroke-opacity="0.8"/><circle cx="786.0" cy="281.59999999999997" r="3.7" fill="none" stroke="#fff" stroke-width="1.4"/><path d="M783.3 284.4 L780.1 289.0" stroke="#fff" stroke-width="1.4" stroke-linecap="round"/><path d="M784.3 281.59999999999997 h3.4" stroke="#fff" stroke-width="1.2"/></svg>
<span class="t" style="left:798.50px;top:271.70px;line-height:14px;font-size:10px;color:#343c44;transform:scaleX(0.8998);-webkit-text-stroke:0.33px #343c44;">Zoom</span>
<span class="t" style="left:798.50px;top:283.50px;line-height:14px;font-size:10px;color:#343c44;transform:scaleX(0.8686);-webkit-text-stroke:0.33px #343c44;">Out</span>
<svg width="1080" height="608" viewBox="0 0 1080 608"><circle cx="861.3" cy="273.5" r="2.4" fill="none" stroke="#3d4852" stroke-width="0.85"/><path d="M858.6999999999999 275.7 L863.9 271.3" stroke="#3d4852" stroke-width="0.85"/></svg>
<div style="position:absolute;left:868px;top:270.2px;width:89px;height:27.100000000000023px;background:#e8ecee;box-sizing:border-box;border-right:1px solid #74838f;border-bottom:1px solid #74838f;border-top:1px solid #f2f4f5;"></div>
<span class="t" style="left:874.50px;top:271.70px;line-height:14px;font-size:10px;color:#20262c;transform:scaleX(0.8518);-webkit-text-stroke:0.33px #20262c;">Reference</span>
<span class="t" style="left:874.50px;top:283.50px;line-height:14px;font-size:10px;color:#20262c;transform:scaleX(0.8297);-webkit-text-stroke:0.33px #20262c;">Curves ...</span>
<div style="position:absolute;left:960px;top:270.2px;width:101.29999999999995px;height:27.100000000000023px;background:#e8ecee;box-sizing:border-box;border-right:1px solid #74838f;border-bottom:1px solid #74838f;border-top:1px solid #f2f4f5;"></div>
<svg width="1080" height="608" viewBox="0 0 1080 608"><circle cx="977.5" cy="283.4" r="11.1" fill="#1d4e9e" stroke="#f4f6f8" stroke-width="0.5"/><circle cx="977.7" cy="280.0" r="3.6" fill="none" stroke="#fff" stroke-width="1.35"/><path d="M975.2 283.4 L972.1 287.59999999999997" stroke="#fff" stroke-width="1.3" stroke-linecap="round"/><path d="M980.3 284.79999999999995 h3.1 v3.5 l-1.55 2.1 l-1.55 -2.1 z" fill="none" stroke="#fff" stroke-width="1.3" stroke-linejoin="round"/><path d="M980.3 288.29999999999995 h3.1 l-1.55 2.1 z" fill="#fff"/></svg>
<span class="t" style="left:991.30px;top:271.70px;line-height:14px;font-size:10px;color:#20262c;transform:scaleX(0.8515);-webkit-text-stroke:0.33px #20262c;">Show</span>
<span class="t" style="left:991.30px;top:283.50px;line-height:14px;font-size:10px;color:#20262c;transform:scaleX(0.8678);-webkit-text-stroke:0.33px #20262c;">Marker</span>
<div style="position:absolute;left:11px;top:307px;width:520px;height:301px;background:#c5d0d8;border-left:1.6px solid #d6dee4;box-sizing:border-box;"></div>
<div style="position:absolute;left:11px;top:307px;width:520px;height:25.30000000000001px;background:#dfe3e5;border-top:2px solid #edf0f1;border-bottom:1.3px solid #e9edef;box-sizing:border-box;"></div>
<span class="t" style="left:14.50px;top:312.31px;line-height:16px;font-size:11.4px;color:#7690a7;transform:scaleX(0.7490);-webkit-text-stroke:0.5px #7690a7;">1: Constellation Diagram</span>
<div style="position:absolute;left:459px;top:308px;width:71px;height:23.30000000000001px;background:#e0e4e6;border-bottom:1px solid #b4bcc3;border-top:1px solid #f1f3f4;box-sizing:border-box;"></div>
<div style="position:absolute;left:494px;top:308px;width:1px;height:23.30000000000001px;background:#c3cad0;"></div>
<svg width="1080" height="608" viewBox="0 0 1080 608"><rect x="469" y="323.3" width="15.5" height="2.3" rx="0.5" fill="#222e38"/><path d="M507.6 314.9 L517.4 324.8 M517.4 314.9 L507.6 324.8" stroke="#27333d" stroke-width="2.3" fill="none"/></svg>
<div style="position:absolute;left:529.8px;top:331px;width:1.5px;height:275.29999999999995px;background:#dbe2e8;"></div>
<svg width="1080" height="608" viewBox="0 0 1080 608"><rect x="177.5" y="332" width="213.5" height="219.5" fill="#000"/><path d="M187.5 332 V551.5 M235.4 332 V551.5 M283.7 332 V551.5 M331.8 332 V551.5 M380 332 V551.5 M178 343 H391 M178 392.5 H391 M178 442.3 H391 M178 491.8 H391 M178 541 H391 " stroke="#12161a" stroke-width="1" fill="none"/><path d="M187.5 332 V551.5 M235.4 332 V551.5 M283.7 332 V551.5 M331.8 332 V551.5 M380 332 V551.5 " stroke="#343e47" stroke-width="1" stroke-dasharray="1 1" fill="none"/><path d="M178 343 H391 M178 392.5 H391 M178 442.3 H391 M178 491.8 H391 M178 541 H391 " stroke="#343e47" stroke-width="1" stroke-dasharray="2 2" fill="none"/><path d="M215.0 370.4 l1.6 1.6 l-1.6 1.6 l-1.6 -1.6 z" fill="#c9a10c" fill-opacity="0.55" stroke="#c9a10c" stroke-width="0.5"/><path d="M215.0 390.4 l1.6 1.6 l-1.6 1.6 l-1.6 -1.6 z" fill="#cf5a1e" fill-opacity="0.55" stroke="#cf5a1e" stroke-width="0.5"/><path d="M215.0 410.4 l1.6 1.6 l-1.6 1.6 l-1.6 -1.6 z" fill="#cf5a1e" fill-opacity="0.55" stroke="#cf5a1e" stroke-width="0.5"/><path d="M215.0 430.4 l1.6 1.6 l-1.6 1.6 l-1.6 -1.6 z" fill="#cf5a1e" fill-opacity="0.55" stroke="#cf5a1e" stroke-width="0.5"/><path d="M215.0 450.4 l1.6 1.6 l-1.6 1.6 l-1.6 -1.6 z" fill="#cf5a1e" fill-opacity="0.55" stroke="#cf5a1e" stroke-width="0.5"/><path d="M215.0 470.4 l1.6 1.6 l-1.6 1.6 l-1.6 -1.6 z" fill="#cf5a1e" fill-opacity="0.55" stroke="#cf5a1e" stroke-width="0.5"/><path d="M215.0 490.4 l1.6 1.6 l-1.6 1.6 l-1.6 -1.6 z" fill="#cf5a1e" fill-opacity="0.55" stroke="#cf5a1e" stroke-width="0.5"/><path d="M215.0 510.4 l1.6 1.6 l-1.6 1.6 l-1.6 -1.6 z" fill="#c9a10c" fill-opacity="0.55" stroke="#c9a10c" stroke-width="0.5"/><path d="M234.6 370.4 l1.6 1.6 l-1.6 1.6 l-1.6 -1.6 z" fill="#cf5a1e" fill-opacity="0.55" stroke="#cf5a1e" stroke-width="0.5"/><path d="M234.6 390.4 l1.6 1.6 l-1.6 1.6 l-1.6 -1.6 z" fill="#cf5a1e" fill-opacity="0.55" stroke="#cf5a1e" stroke-width="0.5"/><path d="M234.6 410.4 l1.6 1.6 l-1.6 1.6 l-1.6 -1.6 z" fill="#cf5a1e" fill-opacity="0.55" stroke="#cf5a1e" stroke-width="0.5"/><path d="M234.6 430.4 l1.6 1.6 l-1.6 1.6 l-1.6 -1.6 z" fill="#cf5a1e" fill-opacity="0.55" stroke="#cf5a1e" stroke-width="0.5"/><path d="M234.6 450.4 l1.6 1.6 l-1.6 1.6 l-1.6 -1.6 z" fill="#cf5a1e" fill-opacity="0.55" stroke="#cf5a1e" stroke-width="0.5"/><path d="M234.6 470.4 l1.6 1.6 l-1.6 1.6 l-1.6 -1.6 z" fill="#cf5a1e" fill-opacity="0.55" stroke="#cf5a1e" stroke-width="0.5"/><path d="M234.6 490.4 l1.6 1.6 l-1.6 1.6 l-1.6 -1.6 z" fill="#cf5a1e" fill-opacity="0.55" stroke="#cf5a1e" stroke-width="0.5"/><path d="M234.6 510.4 l1.6 1.6 l-1.6 1.6 l-1.6 -1.6 z" fill="#cf5a1e" fill-opacity="0.55" stroke="#cf5a1e" stroke-width="0.5"/><path d="M254.2 370.4 l1.6 1.6 l-1.6 1.6 l-1.6 -1.6 z" fill="#cf5a1e" fill-opacity="0.55" stroke="#cf5a1e" stroke-width="0.5"/><path d="M254.2 390.4 l1.6 1.6 l-1.6 1.6 l-1.6 -1.6 z" fill="#cf5a1e" fill-opacity="0.55" stroke="#cf5a1e" stroke-width="0.5"/><path d="M254.2 410.4 l1.6 1.6 l-1.6 1.6 l-1.6 -1.6 z" fill="#cf5a1e" fill-opacity="0.55" stroke="#cf5a1e" stroke-width="0.5"/><path d="M254.2 430.4 l1.6 1.6 l-1.6 1.6 l-1.6 -1.6 z" fill="#cf5a1e" fill-opacity="0.55" stroke="#cf5a1e" stroke-width="0.5"/><path d="M254.2 450.4 l1.6 1.6 l-1.6 1.6 l-1.6 -1.6 z" fill="#cf5a1e" fill-opacity="0.55" stroke="#cf5a1e" stroke-width="0.5"/><path d="M254.2 470.4 l1.6 1.6 l-1.6 1.6 l-1.6 -1.6 z" fill="#cf5a1e" fill-opacity="0.55" stroke="#cf5a1e" stroke-width="0.5"/><path d="M254.2 490.4 l1.6 1.6 l-1.6 1.6 l-1.6 -1.6 z" fill="#cf5a1e" fill-opacity="0.55" stroke="#cf5a1e" stroke-width="0.5"/><path d="M254.2 510.4 l1.6 1.6 l-1.6 1.6 l-1.6 -1.6 z" fill="#cf5a1e" fill-opacity="0.55" stroke="#cf5a1e" stroke-width="0.5"/><path d="M273.8 370.4 l1.6 1.6 l-1.6 1.6 l-1.6 -1.6 z" fill="#cf5a1e" fill-opacity="0.55" stroke="#cf5a1e" stroke-width="0.5"/><path d="M273.8 390.4 l1.6 1.6 l-1.6 1.6 l-1.6 -1.6 z" fill="#cf5a1e" fill-opacity="0.55" stroke="#cf5a1e" stroke-width="0.5"/><path d="M273.8 410.4 l1.6 1.6 l-1.6 1.6 l-1.6 -1.6 z" fill="#cf5a1e" fill-opacity="0.55" stroke="#cf5a1e" stroke-width="0.5"/><path d="M273.8 430.4 l1.6 1.6 l-1.6 1.6 l-1.6 -1.6 z" fill="#cf5a1e" fill-opacity="0.55" stroke="#cf5a1e" stroke-width="0.5"/><path d="M273.8 450.4 l1.6 1.6 l-1.6 1.6 l-1.6 -1.6 z" fill="#cf5a1e" fill-opacity="0.55" stroke="#cf5a1e" stroke-width="0.5"/><path d="M273.8 470.4 l1.6 1.6 l-1.6 1.6 l-1.6 -1.6 z" fill="#cf5a1e" fill-opacity="0.55" stroke="#cf5a1e" stroke-width="0.5"/><path d="M273.8 490.4 l1.6 1.6 l-1.6 1.6 l-1.6 -1.6 z" fill="#cf5a1e" fill-opacity="0.55" stroke="#cf5a1e" stroke-width="0.5"/><path d="M273.8 510.4 l1.6 1.6 l-1.6 1.6 l-1.6 -1.6 z" fill="#cf5a1e" fill-opacity="0.55" stroke="#cf5a1e" stroke-width="0.5"/><path d="M293.4 370.4 l1.6 1.6 l-1.6 1.6 l-1.6 -1.6 z" fill="#cf5a1e" fill-opacity="0.55" stroke="#cf5a1e" stroke-width="0.5"/><path d="M293.4 390.4 l1.6 1.6 l-1.6 1.6 l-1.6 -1.6 z" fill="#cf5a1e" fill-opacity="0.55" stroke="#cf5a1e" stroke-width="0.5"/><path d="M293.4 410.4 l1.6 1.6 l-1.6 1.6 l-1.6 -1.6 z" fill="#cf5a1e" fill-opacity="0.55" stroke="#cf5a1e" stroke-width="0.5"/><path d="M293.4 430.4 l1.6 1.6 l-1.6 1.6 l-1.6 -1.6 z" fill="#cf5a1e" fill-opacity="0.55" stroke="#cf5a1e" stroke-width="0.5"/><path d="M293.4 450.4 l1.6 1.6 l-1.6 1.6 l-1.6 -1.6 z" fill="#cf5a1e" fill-opacity="0.55" stroke="#cf5a1e" stroke-width="0.5"/><path d="M293.4 470.4 l1.6 1.6 l-1.6 1.6 l-1.6 -1.6 z" fill="#cf5a1e" fill-opacity="0.55" stroke="#cf5a1e" stroke-width="0.5"/><path d="M293.4 490.4 l1.6 1.6 l-1.6 1.6 l-1.6 -1.6 z" fill="#cf5a1e" fill-opacity="0.55" stroke="#cf5a1e" stroke-width="0.5"/><path d="M293.4 510.4 l1.6 1.6 l-1.6 1.6 l-1.6 -1.6 z" fill="#cf5a1e" fill-opacity="0.55" stroke="#cf5a1e" stroke-width="0.5"/><path d="M313.0 370.4 l1.6 1.6 l-1.6 1.6 l-1.6 -1.6 z" fill="#cf5a1e" fill-opacity="0.55" stroke="#cf5a1e" stroke-width="0.5"/><path d="M313.0 390.4 l1.6 1.6 l-1.6 1.6 l-1.6 -1.6 z" fill="#cf5a1e" fill-opacity="0.55" stroke="#cf5a1e" stroke-width="0.5"/><path d="M313.0 410.4 l1.6 1.6 l-1.6 1.6 l-1.6 -1.6 z" fill="#cf5a1e" fill-opacity="0.55" stroke="#cf5a1e" stroke-width="0.5"/><path d="M313.0 430.4 l1.6 1.6 l-1.6 1.6 l-1.6 -1.6 z" fill="#cf5a1e" fill-opacity="0.55" stroke="#cf5a1e" stroke-width="0.5"/><path d="M313.0 450.4 l1.6 1.6 l-1.6 1.6 l-1.6 -1.6 z" fill="#cf5a1e" fill-opacity="0.55" stroke="#cf5a1e" stroke-width="0.5"/><path d="M313.0 470.4 l1.6 1.6 l-1.6 1.6 l-1.6 -1.6 z" fill="#cf5a1e" fill-opacity="0.55" stroke="#cf5a1e" stroke-width="0.5"/><path d="M313.0 490.4 l1.6 1.6 l-1.6 1.6 l-1.6 -1.6 z" fill="#cf5a1e" fill-opacity="0.55" stroke="#cf5a1e" stroke-width="0.5"/><path d="M313.0 510.4 l1.6 1.6 l-1.6 1.6 l-1.6 -1.6 z" fill="#cf5a1e" fill-opacity="0.55" stroke="#cf5a1e" stroke-width="0.5"/><path d="M332.6 370.4 l1.6 1.6 l-1.6 1.6 l-1.6 -1.6 z" fill="#cf5a1e" fill-opacity="0.55" stroke="#cf5a1e" stroke-width="0.5"/><path d="M332.6 390.4 l1.6 1.6 l-1.6 1.6 l-1.6 -1.6 z" fill="#cf5a1e" fill-opacity="0.55" stroke="#cf5a1e" stroke-width="0.5"/><path d="M332.6 410.4 l1.6 1.6 l-1.6 1.6 l-1.6 -1.6 z" fill="#cf5a1e" fill-opacity="0.55" stroke="#cf5a1e" stroke-width="0.5"/><path d="M332.6 430.4 l1.6 1.6 l-1.6 1.6 l-1.6 -1.6 z" fill="#cf5a1e" fill-opacity="0.55" stroke="#cf5a1e" stroke-width="0.5"/><path d="M332.6 450.4 l1.6 1.6 l-1.6 1.6 l-1.6 -1.6 z" fill="#cf5a1e" fill-opacity="0.55" stroke="#cf5a1e" stroke-width="0.5"/><path d="M332.6 470.4 l1.6 1.6 l-1.6 1.6 l-1.6 -1.6 z" fill="#cf5a1e" fill-opacity="0.55" stroke="#cf5a1e" stroke-width="0.5"/><path d="M332.6 490.4 l1.6 1.6 l-1.6 1.6 l-1.6 -1.6 z" fill="#cf5a1e" fill-opacity="0.55" stroke="#cf5a1e" stroke-width="0.5"/><path d="M332.6 510.4 l1.6 1.6 l-1.6 1.6 l-1.6 -1.6 z" fill="#cf5a1e" fill-opacity="0.55" stroke="#cf5a1e" stroke-width="0.5"/><path d="M352.2 370.4 l1.6 1.6 l-1.6 1.6 l-1.6 -1.6 z" fill="#c9a10c" fill-opacity="0.55" stroke="#c9a10c" stroke-width="0.5"/><path d="M352.2 390.4 l1.6 1.6 l-1.6 1.6 l-1.6 -1.6 z" fill="#cf5a1e" fill-opacity="0.55" stroke="#cf5a1e" stroke-width="0.5"/><path d="M352.2 410.4 l1.6 1.6 l-1.6 1.6 l-1.6 -1.6 z" fill="#cf5a1e" fill-opacity="0.55" stroke="#cf5a1e" stroke-width="0.5"/><path d="M352.2 430.4 l1.6 1.6 l-1.6 1.6 l-1.6 -1.6 z" fill="#cf5a1e" fill-opacity="0.55" stroke="#cf5a1e" stroke-width="0.5"/><path d="M352.2 450.4 l1.6 1.6 l-1.6 1.6 l-1.6 -1.6 z" fill="#cf5a1e" fill-opacity="0.55" stroke="#cf5a1e" stroke-width="0.5"/><path d="M352.2 470.4 l1.6 1.6 l-1.6 1.6 l-1.6 -1.6 z" fill="#cf5a1e" fill-opacity="0.55" stroke="#cf5a1e" stroke-width="0.5"/><path d="M352.2 490.4 l1.6 1.6 l-1.6 1.6 l-1.6 -1.6 z" fill="#cf5a1e" fill-opacity="0.55" stroke="#cf5a1e" stroke-width="0.5"/><path d="M352.2 510.4 l1.6 1.6 l-1.6 1.6 l-1.6 -1.6 z" fill="#c9a10c" fill-opacity="0.55" stroke="#c9a10c" stroke-width="0.5"/></svg>
<span class="t" style="left:169.70px;top:338.30px;line-height:10px;font-size:7px;color:#10161c;font-weight:bold;transform:scaleX(0.9250);">1</span>
<span class="t" style="left:164.30px;top:387.80px;line-height:10px;font-size:7px;color:#10161c;font-weight:bold;transform:scaleX(0.9250);">0.5</span>
<span class="t" style="left:169.70px;top:437.80px;line-height:10px;font-size:7px;color:#10161c;font-weight:bold;transform:scaleX(0.9250);">0</span>
<span class="t" style="left:162.14px;top:487.00px;line-height:10px;font-size:7px;color:#10161c;font-weight:bold;transform:scaleX(0.9250);">-0.5</span>
<span class="t" style="left:167.54px;top:536.30px;line-height:10px;font-size:7px;color:#10161c;font-weight:bold;transform:scaleX(0.9250);">-1</span>
<span class="t" style="left:184.62px;top:555.00px;line-height:10px;font-size:7px;color:#10161c;font-weight:bold;transform:scaleX(0.9250);">-1</span>
<span class="t" style="left:229.92px;top:555.00px;line-height:10px;font-size:7px;color:#10161c;font-weight:bold;transform:scaleX(0.9250);">-0.5</span>
<span class="t" style="left:282.20px;top:555.00px;line-height:10px;font-size:7px;color:#10161c;font-weight:bold;transform:scaleX(0.9250);">0</span>
<span class="t" style="left:327.00px;top:555.00px;line-height:10px;font-size:7px;color:#10161c;font-weight:bold;transform:scaleX(0.9250);">0.5</span>
<span class="t" style="left:378.20px;top:555.00px;line-height:10px;font-size:7px;color:#10161c;font-weight:bold;transform:scaleX(0.9250);">1</span>
<span class="t" style="left:250.00px;top:565.00px;line-height:11px;font-size:7.5px;color:#10161c;font-weight:bold;transform:scaleX(0.9624);">Inphase i(t)</span>
<svg width="1080" height="608" viewBox="0 0 1080 608"><text transform="translate(158.8 442) rotate(-90)" text-anchor="middle" font-size="7.5" font-weight="bold" fill="#10161c" textLength="52.5" lengthAdjust="spacingAndGlyphs">Quadrature q(t)</text></svg>
<svg width="1080" height="608" viewBox="0 0 1080 608"><defs><linearGradient id="cbar" x1="0" x2="1" y1="0" y2="0"><stop offset="0.000" stop-color="#3a34b2"/><stop offset="0.050" stop-color="#323ab4"/><stop offset="0.100" stop-color="#2848b8"/><stop offset="0.150" stop-color="#1e64be"/><stop offset="0.200" stop-color="#1888be"/><stop offset="0.250" stop-color="#10a0b4"/><stop offset="0.300" stop-color="#0ca896"/><stop offset="0.350" stop-color="#08a478"/><stop offset="0.400" stop-color="#089e5c"/><stop offset="0.450" stop-color="#0c9c46"/><stop offset="0.500" stop-color="#18a038"/><stop offset="0.550" stop-color="#30ac2c"/><stop offset="0.600" stop-color="#54b824"/><stop offset="0.650" stop-color="#82c41e"/><stop offset="0.700" stop-color="#b4cc18"/><stop offset="0.750" stop-color="#e0c812"/><stop offset="0.800" stop-color="#f4ac10"/><stop offset="0.850" stop-color="#f28412"/><stop offset="0.900" stop-color="#e86014"/><stop offset="0.950" stop-color="#de4614"/><stop offset="1.000" stop-color="#d83812"/></linearGradient></defs><rect x="317" y="564" width="208" height="12.5" fill="url(#cbar)"/><path d="M325.0 564 v1.5" stroke="#ffffff" stroke-opacity="0.6" stroke-width="0.8"/><path d="M344.2 564 v1.5" stroke="#ffffff" stroke-opacity="0.6" stroke-width="0.8"/><path d="M363.4 564 v1.5" stroke="#ffffff" stroke-opacity="0.6" stroke-width="0.8"/><path d="M382.6 564 v1.5" stroke="#ffffff" stroke-opacity="0.6" stroke-width="0.8"/><path d="M401.8 564 v1.5" stroke="#ffffff" stroke-opacity="0.6" stroke-width="0.8"/><path d="M421.0 564 v1.5" stroke="#ffffff" stroke-opacity="0.6" stroke-width="0.8"/><path d="M440.2 564 v1.5" stroke="#ffffff" stroke-opacity="0.6" stroke-width="0.8"/><path d="M459.4 564 v1.5" stroke="#ffffff" stroke-opacity="0.6" stroke-width="0.8"/><path d="M478.6 564 v1.5" stroke="#ffffff" stroke-opacity="0.6" stroke-width="0.8"/><path d="M497.8 564 v1.5" stroke="#ffffff" stroke-opacity="0.6" stroke-width="0.8"/><path d="M517.0 564 v1.5" stroke="#ffffff" stroke-opacity="0.6" stroke-width="0.8"/></svg>
<span class="t" style="left:323.20px;top:566.30px;line-height:10px;font-size:6.8px;color:#f4f8ff;transform:scaleX(0.9500);">0</span>
<span class="t" style="left:337.74px;top:566.30px;line-height:10px;font-size:6.8px;color:#f4f8ff;transform:scaleX(0.9500);">10%</span>
<span class="t" style="left:356.94px;top:566.30px;line-height:10px;font-size:6.8px;color:#f4f8ff;transform:scaleX(0.9500);">20%</span>
<span class="t" style="left:376.14px;top:566.30px;line-height:10px;font-size:6.8px;color:#f4f8ff;transform:scaleX(0.9500);">30%</span>
<span class="t" style="left:395.34px;top:566.30px;line-height:10px;font-size:6.8px;color:#f4f8ff;transform:scaleX(0.9500);">40%</span>
<span class="t" style="left:414.54px;top:566.30px;line-height:10px;font-size:6.8px;color:#f4f8ff;transform:scaleX(0.9500);">50%</span>
<span class="t" style="left:433.74px;top:566.30px;line-height:10px;font-size:6.8px;color:#f4f8ff;transform:scaleX(0.9500);">60%</span>
<span class="t" style="left:452.94px;top:566.30px;line-height:10px;font-size:6.8px;color:#f4f8ff;transform:scaleX(0.9500);">70%</span>
<span class="t" style="left:472.14px;top:566.30px;line-height:10px;font-size:6.8px;color:#f4f8ff;transform:scaleX(0.9500);">80%</span>
<span class="t" style="left:491.34px;top:566.30px;line-height:10px;font-size:6.8px;color:#f4f8ff;transform:scaleX(0.9500);">90%</span>
<span class="t" style="left:509.04px;top:566.30px;line-height:10px;font-size:6.8px;color:#f4f8ff;transform:scaleX(0.9500);">100%</span>
<div style="position:absolute;left:12.7px;top:577px;width:179.10000000000002px;height:29.100000000000023px;background:#e8ecee;box-sizing:border-box;border:1.6px solid #f4a21f;box-shadow:inset -1px -1px 0 #74838f;"></div>
<svg width="1080" height="608" viewBox="0 0 1080 608"><rect x="20.5" y="585.6" width="12" height="12" rx="1.8" fill="#f23b3b"/><text x="26.5" y="595.4" font-size="10" font-weight="bold" text-anchor="middle" fill="#0c0c0c" stroke="#0c0c0c" stroke-width="0.3">A</text></svg>
<span class="t" style="left:33.80px;top:584.60px;line-height:14px;font-size:10px;color:#20262c;transform:scaleX(0.8628);-webkit-text-stroke:0.33px #20262c;">Configure ...</span>
<div style="position:absolute;left:193.3px;top:578px;width:164.7px;height:27px;background:#e8ecee;box-sizing:border-box;border-right:1px solid #74838f;border-bottom:1px solid #74838f;border-top:1px solid #f2f4f5;"></div>
<svg width="1080" height="608" viewBox="0 0 1080 608"><circle cx="210" cy="591.2" r="11" fill="#b5c1cc"/><rect x="205.7" y="586.9000000000001" width="8.6" height="8.6" rx="0.8" fill="#ffffff"/></svg>
<span class="t" style="left:223.00px;top:584.60px;line-height:14px;font-size:10px;color:#20262c;transform:scaleX(0.8143);-webkit-text-stroke:0.33px #20262c;">Stop ...</span>
<div style="position:absolute;left:361.3px;top:578px;width:162.7px;height:27px;background:#cdd7df;box-sizing:border-box;border-right:1px solid #74838f;border-bottom:1px solid #74838f;border-top:1px solid #f2f4f5;"></div>
<svg width="1080" height="608" viewBox="0 0 1080 608"><circle cx="378.8" cy="591.2" r="11.1" fill="#91a9d4" stroke="#f4f6f8" stroke-width="0.5" stroke-opacity="0.8"/><circle cx="379.8" cy="589.4000000000001" r="3.7" fill="none" stroke="#fff" stroke-width="1.4"/><path d="M377.1 592.2 L373.90000000000003 596.8000000000001" stroke="#fff" stroke-width="1.4" stroke-linecap="round"/><path d="M378.1 589.4000000000001 h3.4" stroke="#fff" stroke-width="1.2"/></svg>
<span class="t" style="left:392.00px;top:579.95px;line-height:14px;font-size:10px;color:#343c44;transform:scaleX(0.8802);-webkit-text-stroke:0.33px #343c44;">Zoom</span>
<span class="t" style="left:392.00px;top:591.45px;line-height:14px;font-size:10px;color:#343c44;transform:scaleX(0.8562);-webkit-text-stroke:0.33px #343c44;">Out</span>
<svg width="1080" height="608" viewBox="0 0 1080 608"><circle cx="520.3" cy="582" r="2.4" fill="none" stroke="#3d4852" stroke-width="0.85"/><path d="M517.6999999999999 584.2 L522.9 579.8" stroke="#3d4852" stroke-width="0.85"/></svg>
<div style="position:absolute;left:11px;top:606.3px;width:520.3px;height:1.7000000000000455px;background:#8a949c;"></div>
<div style="position:absolute;left:549px;top:307px;width:520px;height:301px;background:#c5d0d8;border-left:1.6px solid #d6dee4;box-sizing:border-box;"></div>
<div style="position:absolute;left:549px;top:307px;width:520px;height:25.30000000000001px;background:#dfe3e5;border-top:2px solid #edf0f1;border-bottom:1.3px solid #e9edef;box-sizing:border-box;"></div>
<span class="t" style="left:553.00px;top:312.31px;line-height:16px;font-size:11.4px;color:#7690a7;transform:scaleX(0.7392);-webkit-text-stroke:0.5px #7690a7;">1: CCDF, Complementary Cumulative Distribution</span>
<div style="position:absolute;left:997px;top:308px;width:71px;height:23.30000000000001px;background:#e0e4e6;border-bottom:1px solid #b4bcc3;border-top:1px solid #f1f3f4;box-sizing:border-box;"></div>
<div style="position:absolute;left:1032px;top:308px;width:1px;height:23.30000000000001px;background:#c3cad0;"></div>
<svg width="1080" height="608" viewBox="0 0 1080 608"><rect x="1007" y="323.3" width="15.5" height="2.3" rx="0.5" fill="#222e38"/><path d="M1045.6 314.9 L1055.4 324.8 M1055.4 314.9 L1045.6 324.8" stroke="#27333d" stroke-width="2.3" fill="none"/></svg>
<div style="position:absolute;left:1062px;top:331px;width:7px;height:224px;background:#c5d0d8;border-left:1.6px solid #dde4ea;box-sizing:border-box;"></div>
<svg width="1080" height="608" viewBox="0 0 1080 608"><rect x="584.25" y="332" width="477.75" height="222" fill="#000"/><path d="M585.38 553.00 H1062 M585.38 541.95 H1062 M585.38 535.49 H1062 M585.38 530.90 H1062 M585.38 527.35 H1062 M585.38 524.44 H1062 M585.38 521.98 H1062 M585.38 519.86 H1062 M585.38 517.98 H1062 M585.38 516.30 H1062 M585.38 505.25 H1062 M585.38 498.79 H1062 M585.38 494.20 H1062 M585.38 490.65 H1062 M585.38 487.74 H1062 M585.38 485.28 H1062 M585.38 483.16 H1062 M585.38 481.28 H1062 M585.38 479.60 H1062 M585.38 468.55 H1062 M585.38 462.09 H1062 M585.38 457.50 H1062 M585.38 453.95 H1062 M585.38 451.04 H1062 M585.38 448.58 H1062 M585.38 446.46 H1062 M585.38 444.58 H1062 M585.38 442.90 H1062 M585.38 431.85 H1062 M585.38 425.39 H1062 M585.38 420.80 H1062 M585.38 417.25 H1062 M585.38 414.34 H1062 M585.38 411.88 H1062 M585.38 409.76 H1062 M585.38 407.88 H1062 M585.38 406.20 H1062 M585.38 395.15 H1062 M585.38 388.69 H1062 M585.38 384.10 H1062 M585.38 380.55 H1062 M585.38 377.64 H1062 M585.38 375.18 H1062 M585.38 373.06 H1062 M585.38 371.18 H1062 M585.38 369.50 H1062 M585.38 358.45 H1062 M585.38 351.99 H1062 M585.38 347.40 H1062 M585.38 343.85 H1062 M585.38 340.94 H1062 M585.38 338.48 H1062 M585.38 336.36 H1062 M585.38 334.48 H1062 " stroke="#0a0c0e" stroke-width="1" fill="none"/><path d="M585.38 553.00 H1062 M585.38 541.95 H1062 M585.38 535.49 H1062 M585.38 530.90 H1062 M585.38 527.35 H1062 M585.38 524.44 H1062 M585.38 521.98 H1062 M585.38 519.86 H1062 M585.38 517.98 H1062 M585.38 516.30 H1062 M585.38 505.25 H1062 M585.38 498.79 H1062 M585.38 494.20 H1062 M585.38 490.65 H1062 M585.38 487.74 H1062 M585.38 485.28 H1062 M585.38 483.16 H1062 M585.38 481.28 H1062 M585.38 479.60 H1062 M585.38 468.55 H1062 M585.38 462.09 H1062 M585.38 457.50 H1062 M585.38 453.95 H1062 M585.38 451.04 H1062 M585.38 448.58 H1062 M585.38 446.46 H1062 M585.38 444.58 H1062 M585.38 442.90 H1062 M585.38 431.85 H1062 M585.38 425.39 H1062 M585.38 420.80 H1062 M585.38 417.25 H1062 M585.38 414.34 H1062 M585.38 411.88 H1062 M585.38 409.76 H1062 M585.38 407.88 H1062 M585.38 406.20 H1062 M585.38 395.15 H1062 M585.38 388.69 H1062 M585.38 384.10 H1062 M585.38 380.55 H1062 M585.38 377.64 H1062 M585.38 375.18 H1062 M585.38 373.06 H1062 M585.38 371.18 H1062 M585.38 369.50 H1062 M585.38 358.45 H1062 M585.38 351.99 H1062 M585.38 347.40 H1062 M585.38 343.85 H1062 M585.38 340.94 H1062 M585.38 338.48 H1062 M585.38 336.36 H1062 M585.38 334.48 H1062 " stroke="#262c32" stroke-width="1" stroke-dasharray="1.2 1.7375" stroke-dashoffset="0.6" fill="none"/><path d="M591.25 332 V554 M614.75 332 V554 M638.25 332 V554 M661.75 332 V554 M685.25 332 V554 M708.75 332 V554 M732.25 332 V554 M755.75 332 V554 M779.25 332 V554 M802.75 332 V554 M826.25 332 V554 M849.75 332 V554 M873.25 332 V554 M896.75 332 V554 M920.25 332 V554 M943.75 332 V554 M967.25 332 V554 M990.75 332 V554 M1014.25 332 V554 M1037.75 332 V554 " stroke="#101418" stroke-width="1" fill="none"/><path d="M591.25 332 V554 M614.75 332 V554 M638.25 332 V554 M661.75 332 V554 M685.25 332 V554 M708.75 332 V554 M732.25 332 V554 M755.75 332 V554 M779.25 332 V554 M802.75 332 V554 M826.25 332 V554 M849.75 332 V554 M873.25 332 V554 M896.75 332 V554 M920.25 332 V554 M943.75 332 V554 M967.25 332 V554 M990.75 332 V554 M1014.25 332 V554 M1037.75 332 V554 " stroke="#2c363e" stroke-width="1" stroke-dasharray="1 1" fill="none"/><path d="M584.25 349.25 L592.00 350.00 L600.00 351.25 L607.00 352.30 L615.00 353.75 L627.00 356.50 L640.00 360.00 L650.00 363.00 L660.00 366.25 L670.00 369.20 L680.00 372.50 L688.00 374.80 L695.00 377.00 L701.00 379.30 L707.50 382.00 L713.00 384.60 L719.00 388.00 L723.00 390.50 L725.50 392.50 L727.50 395.00 L729.50 398.50 L731.00 399.50 L733.00 402.50 L735.00 403.50 L737.50 406.00 L741.30 410.00 L748.00 410.00 L749.50 412.00 L752.50 417.50 L755.50 417.50 L756.50 418.50 L758.00 421.25 L772.00 421.25 L773.00 424.00 L774.50 432.50 L784.50 432.50 L785.30 436.00 L786.25 443.25 L803.00 443.25 L803.00 533.00 L804.00 533.00 L804.00 554.00" stroke="#b3a523" stroke-width="1.25" fill="none" stroke-linejoin="round"/></svg>
<span class="t" style="left:569.70px;top:331.60px;line-height:10px;font-size:7px;color:#10161c;font-weight:bold;transform:scaleX(0.9250);">100</span>
<span class="t" style="left:573.30px;top:365.30px;line-height:10px;font-size:7px;color:#10161c;font-weight:bold;transform:scaleX(0.9250);">10</span>
<span class="t" style="left:576.90px;top:401.90px;line-height:10px;font-size:7px;color:#10161c;font-weight:bold;transform:scaleX(0.9250);">1</span>
<span class="t" style="left:571.50px;top:438.80px;line-height:10px;font-size:7px;color:#10161c;font-weight:bold;transform:scaleX(0.9250);">0.1</span>
<span class="t" style="left:567.90px;top:475.50px;line-height:10px;font-size:7px;color:#10161c;font-weight:bold;transform:scaleX(0.9250);">0.01</span>
<span class="t" style="left:564.30px;top:511.90px;line-height:10px;font-size:7px;color:#10161c;font-weight:bold;transform:scaleX(0.9250);">0.001</span>
<span class="t" style="left:560.70px;top:547.80px;line-height:10px;font-size:7px;color:#10161c;font-weight:bold;transform:scaleX(0.9250);">0.0001</span>
<span class="t" style="left:612.95px;top:557.70px;line-height:10px;font-size:7px;color:#10161c;font-weight:bold;transform:scaleX(0.9250);">1</span>
<span class="t" style="left:636.45px;top:557.70px;line-height:10px;font-size:7px;color:#10161c;font-weight:bold;transform:scaleX(0.9250);">2</span>
<span class="t" style="left:659.95px;top:557.70px;line-height:10px;font-size:7px;color:#10161c;font-weight:bold;transform:scaleX(0.9250);">3</span>
<span class="t" style="left:683.45px;top:557.70px;line-height:10px;font-size:7px;color:#10161c;font-weight:bold;transform:scaleX(0.9250);">4</span>
<span class="t" style="left:706.95px;top:557.70px;line-height:10px;font-size:7px;color:#10161c;font-weight:bold;transform:scaleX(0.9250);">5</span>
<span class="t" style="left:730.45px;top:557.70px;line-height:10px;font-size:7px;color:#10161c;font-weight:bold;transform:scaleX(0.9250);">6</span>
<span class="t" style="left:753.95px;top:557.70px;line-height:10px;font-size:7px;color:#10161c;font-weight:bold;transform:scaleX(0.9250);">7</span>
<span class="t" style="left:777.45px;top:557.70px;line-height:10px;font-size:7px;color:#10161c;font-weight:bold;transform:scaleX(0.9250);">8</span>
<span class="t" style="left:800.95px;top:557.70px;line-height:10px;font-size:7px;color:#10161c;font-weight:bold;transform:scaleX(0.9250);">9</span>
<span class="t" style="left:822.65px;top:557.70px;line-height:10px;font-size:7px;color:#10161c;font-weight:bold;transform:scaleX(0.9250);">10</span>
<span class="t" style="left:846.33px;top:557.70px;line-height:10px;font-size:7px;color:#10161c;font-weight:bold;transform:scaleX(0.9250);">11</span>
<span class="t" style="left:869.65px;top:557.70px;line-height:10px;font-size:7px;color:#10161c;font-weight:bold;transform:scaleX(0.9250);">12</span>
<span class="t" style="left:893.15px;top:557.70px;line-height:10px;font-size:7px;color:#10161c;font-weight:bold;transform:scaleX(0.9250);">13</span>
<span class="t" style="left:916.65px;top:557.70px;line-height:10px;font-size:7px;color:#10161c;font-weight:bold;transform:scaleX(0.9250);">14</span>
<span class="t" style="left:940.15px;top:557.70px;line-height:10px;font-size:7px;color:#10161c;font-weight:bold;transform:scaleX(0.9250);">15</span>
<span class="t" style="left:963.65px;top:557.70px;line-height:10px;font-size:7px;color:#10161c;font-weight:bold;transform:scaleX(0.9250);">16</span>
<span class="t" style="left:987.15px;top:557.70px;line-height:10px;font-size:7px;color:#10161c;font-weight:bold;transform:scaleX(0.9250);">17</span>
<span class="t" style="left:1010.65px;top:557.70px;line-height:10px;font-size:7px;color:#10161c;font-weight:bold;transform:scaleX(0.9250);">18</span>
<span class="t" style="left:1034.15px;top:557.70px;line-height:10px;font-size:7px;color:#10161c;font-weight:bold;transform:scaleX(0.9250);">19</span>
<span class="t" style="left:1054.40px;top:557.70px;line-height:10px;font-size:7px;color:#10161c;font-weight:bold;transform:scaleX(0.9250);">20</span>
<span class="t" style="left:579.12px;top:557.70px;line-height:10px;font-size:7px;color:#10161c;font-weight:bold;transform:scaleX(0.9250);">-0.3</span>
<span class="t" style="left:771.00px;top:565.70px;line-height:11px;font-size:7.5px;color:#10161c;font-weight:bold;transform:scaleX(0.9635);">(peak power / avg. power) / dB</span>
<svg width="1080" height="608" viewBox="0 0 1080 608"><text transform="translate(557.6 443.7) rotate(-90)" text-anchor="middle" font-size="7.5" font-weight="bold" fill="#10161c" textLength="49" lengthAdjust="spacingAndGlyphs">Probability / %</text></svg>
<div style="position:absolute;left:551px;top:575.7px;width:112.70000000000005px;height:29.299999999999955px;background:#e8ecee;box-sizing:border-box;border:1.6px solid #f4a21f;box-shadow:inset -1px -1px 0 #74838f;"></div>
<svg width="1080" height="608" viewBox="0 0 1080 608"><rect x="558.8" y="584.3" width="12" height="12" rx="1.8" fill="#f23b3b"/><text x="564.8" y="594.0999999999999" font-size="10" font-weight="bold" text-anchor="middle" fill="#0c0c0c" stroke="#0c0c0c" stroke-width="0.3">A</text></svg>
<span class="t" style="left:572.00px;top:583.50px;line-height:14px;font-size:10px;color:#20262c;transform:scaleX(0.8628);-webkit-text-stroke:0.33px #20262c;">Configure ...</span>
<div style="position:absolute;left:666px;top:576.9px;width:98.5px;height:27.300000000000068px;background:#e8ecee;box-sizing:border-box;border-right:1px solid #74838f;border-bottom:1px solid #74838f;border-top:1px solid #f2f4f5;"></div>
<svg width="1080" height="608" viewBox="0 0 1080 608"><circle cx="682.7" cy="590.1" r="11" fill="#b5c1cc"/><rect x="678.4000000000001" y="585.8000000000001" width="8.6" height="8.6" rx="0.8" fill="#ffffff"/></svg>
<span class="t" style="left:695.00px;top:583.50px;line-height:14px;font-size:10px;color:#20262c;transform:scaleX(0.8364);-webkit-text-stroke:0.33px #20262c;">Stop ...</span>
<div style="position:absolute;left:768px;top:576.9px;width:96.5px;height:27.300000000000068px;background:#cdd7df;box-sizing:border-box;border-right:1px solid #74838f;border-bottom:1px solid #74838f;border-top:1px solid #f2f4f5;"></div>
<svg width="1080" height="608" viewBox="0 0 1080 608"><circle cx="785.5" cy="590.1" r="11.1" fill="#91a9d4" stroke="#f4f6f8" stroke-width="0.5" stroke-opacity="0.8"/><circle cx="786.5" cy="588.3000000000001" r="3.7" fill="none" stroke="#fff" stroke-width="1.4"/><path d="M783.8 591.1 L780.6 595.7" stroke="#fff" stroke-width="1.4" stroke-linecap="round"/><path d="M784.8 588.3000000000001 h3.4" stroke="#fff" stroke-width="1.2"/></svg>
<span class="t" style="left:798.50px;top:578.30px;line-height:14px;font-size:10px;color:#343c44;transform:scaleX(0.8998);-webkit-text-stroke:0.33px #343c44;">Zoom</span>
<span class="t" style="left:798.50px;top:590.10px;line-height:14px;font-size:10px;color:#343c44;transform:scaleX(0.8686);-webkit-text-stroke:0.33px #343c44;">Out</span>
<svg width="1080" height="608" viewBox="0 0 1080 608"><circle cx="861.3" cy="580.5" r="2.4" fill="none" stroke="#3d4852" stroke-width="0.85"/><path d="M858.6999999999999 582.7 L863.9 578.3" stroke="#3d4852" stroke-width="0.85"/></svg>
<div style="position:absolute;left:868px;top:576.9px;width:89px;height:27.300000000000068px;background:#e8ecee;box-sizing:border-box;border-right:1px solid #74838f;border-bottom:1px solid #74838f;border-top:1px solid #f2f4f5;"></div>
<span class="t" style="left:874.30px;top:578.30px;line-height:14px;font-size:10px;color:#20262c;transform:scaleX(0.8518);-webkit-text-stroke:0.33px #20262c;">Reference</span>
<span class="t" style="left:874.30px;top:590.10px;line-height:14px;font-size:10px;color:#20262c;transform:scaleX(0.8297);-webkit-text-stroke:0.33px #20262c;">Curves ...</span>
<div style="position:absolute;left:959.5px;top:576.9px;width:101.5px;height:27.300000000000068px;background:#e8ecee;box-sizing:border-box;border-right:1px solid #74838f;border-bottom:1px solid #74838f;border-top:1px solid #f2f4f5;"></div>
<svg width="1080" height="608" viewBox="0 0 1080 608"><circle cx="977" cy="590.1" r="11.1" fill="#1d4e9e" stroke="#f4f6f8" stroke-width="0.5"/><circle cx="977.2" cy="586.7" r="3.6" fill="none" stroke="#fff" stroke-width="1.35"/><path d="M974.7 590.1 L971.6 594.3000000000001" stroke="#fff" stroke-width="1.3" stroke-linecap="round"/><path d="M979.8 591.5 h3.1 v3.5 l-1.55 2.1 l-1.55 -2.1 z" fill="none" stroke="#fff" stroke-width="1.3" stroke-linejoin="round"/><path d="M979.8 595.0 h3.1 l-1.55 2.1 z" fill="#fff"/></svg>
<span class="t" style="left:990.50px;top:578.30px;line-height:14px;font-size:10px;color:#20262c;transform:scaleX(0.8595);-webkit-text-stroke:0.33px #20262c;">Show</span>
<span class="t" style="left:990.50px;top:590.10px;line-height:14px;font-size:10px;color:#20262c;transform:scaleX(0.8774);-webkit-text-stroke:0.33px #20262c;">Marker</span>
<div style="position:absolute;left:549px;top:605.2px;width:520px;height:1.3999999999999773px;background:#9aa4ac;"></div>
<div style="position:absolute;left:549px;top:606.6px;width:520px;height:1.3999999999999773px;background:#2b3138;"></div>
</body></html>
